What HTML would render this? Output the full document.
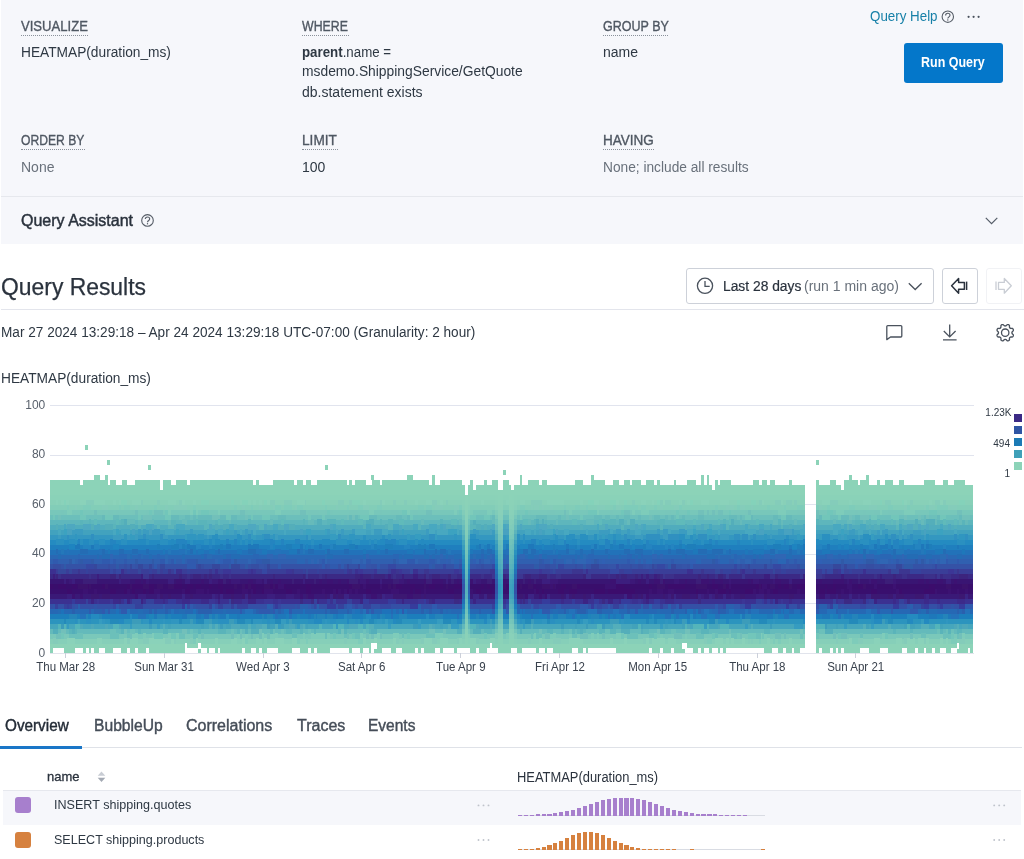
<!DOCTYPE html>
<html>
<head>
<meta charset="utf-8">
<style>
html,body{margin:0;padding:0;}
body{width:1024px;height:859px;overflow:hidden;background:#fff;position:relative;font-family:"Liberation Sans",sans-serif;color:#2e3843;}
.abs{position:absolute;white-space:nowrap;line-height:1;will-change:transform;}
.abs>span{display:inline-block;transform-origin:0 50%;}
#qb{position:absolute;left:1px;top:0;width:1022px;height:196px;background:#f6f7fb;}
#qa{position:absolute;left:1px;top:197px;width:1022px;height:47px;background:#f6f7fb;}
#qline{position:absolute;left:1px;top:196px;width:1022px;height:1px;background:#e6e8ed;}
.lbl{font-size:14px;color:#4f5762;-webkit-text-stroke:0.35px #4f5762;}
.lbl>span{transform:scaleX(0.88);}
.dot{position:absolute;height:0;border-top:1px dotted #8a919b;}
.val{font-size:14px;color:#2e3843;}
.mut{font-size:14px;color:#69717b;}
.ax{font-size:12px;color:#59616c;}
.tab{font-size:16px;color:#454d58;-webkit-text-stroke:0.4px #454d58;}
.row{font-size:13px;color:#2e3843;}
.more{font-size:14px;color:#c3c7ce;letter-spacing:1px;}
svg{position:absolute;left:0;top:0;}
</style>
</head>
<body>
<div id="qb"></div>
<div id="qline"></div>
<div id="qa"></div>
<div class="abs" style="left:904px;top:42.5px;width:99px;height:39.5px;background:#0477ca;border-radius:3px;"></div>
<div class="abs" style="left:3px;top:790.5px;width:1018px;height:33.5px;background:#f6f7fb;"></div>
<div id="all" style="position:absolute;left:0;top:0;width:1024px;height:859px;">

<!-- query builder labels -->
<div class="abs lbl" style="left:21px;top:19px;"><span style="transform:scaleX(0.935)">VISUALIZE</span></div><div class="dot" style="left:21px;top:35px;width:67px;"></div>
<div class="abs val" style="left:21px;top:45px;"><span style="transform:scaleX(0.98)">HEATMAP(duration_ms)</span></div>
<div class="abs lbl" style="left:302px;top:19px;"><span>WHERE</span></div><div class="dot" style="left:302px;top:35px;width:47px;"></div>
<div class="abs val" style="left:302px;top:45px;"><span style="transform:scaleX(0.95)"><b>parent</b>.name =</span></div>
<div class="abs val" style="left:302px;top:64px;"><span style="transform:scaleX(0.988)">msdemo.ShippingService/GetQuote</span></div>
<div class="abs val" style="left:302px;top:84.7px;"><span>db.statement exists</span></div>
<div class="abs lbl" style="left:603px;top:19px;"><span style="transform:scaleX(0.894)">GROUP BY</span></div><div class="dot" style="left:603px;top:35px;width:65px;"></div>
<div class="abs val" style="left:603px;top:45px;"><span>name</span></div>

<div class="abs lbl" style="left:21px;top:133px;"><span style="transform:scaleX(0.866)">ORDER BY</span></div><div class="dot" style="left:21px;top:149px;width:64px;"></div>
<div class="abs mut" style="left:21px;top:160px;"><span>None</span></div>
<div class="abs lbl" style="left:302px;top:133px;"><span style="transform:scaleX(0.975)">LIMIT</span></div><div class="dot" style="left:302px;top:149px;width:36px;"></div>
<div class="abs val" style="left:302px;top:160px;"><span>100</span></div>
<div class="abs lbl" style="left:603px;top:133px;"><span style="transform:scaleX(0.966)">HAVING</span></div><div class="dot" style="left:603px;top:149px;width:51px;"></div>
<div class="abs mut" style="left:603px;top:160px;"><span style="transform:scaleX(0.98)">None; include all results</span></div>

<div class="abs" style="left:870px;top:9px;font-size:14px;color:#1780a8;"><span style="transform:scaleX(0.954)">Query Help</span></div>
<div class="abs" style="left:921px;top:55px;font-size:14px;font-weight:bold;color:#fff;"><span style="transform:scaleX(0.891)">Run Query</span></div>

<div class="abs" style="left:21px;top:212.5px;font-size:16px;color:#2a323d;-webkit-text-stroke:0.45px #2a323d;"><span style="transform:scaleX(1)">Query Assistant</span></div>

<!-- results header -->
<div class="abs" style="left:1px;top:276px;font-size:23px;color:#2a323d;-webkit-text-stroke:0.25px #2a323d;"><span style="transform:scaleX(0.995)">Query Results</span></div>
<div class="abs" style="left:1px;top:309.4px;width:1023px;height:0;border-top:1px solid #e3e5ec;"></div>
<div class="abs" style="left:1px;top:325px;font-size:14px;color:#2e3843;"><span style="transform:scaleX(0.972)">Mar 27 2024 13:29:18 – Apr 24 2024 13:29:18 UTC-07:00 (Granularity: 2 hour)</span></div>
<div class="abs" style="left:1px;top:371px;font-size:14px;color:#2e3843;"><span style="transform:scaleX(0.98)">HEATMAP(duration_ms)</span></div>

<!-- time picker -->
<div class="abs" style="left:686px;top:268px;width:246px;height:34px;border:1px solid #cdd1d9;border-radius:3px;"></div>
<div class="abs" style="left:723px;top:279px;font-size:14px;color:#2a323d;-webkit-text-stroke:0.2px #2a323d;"><span style="transform:scaleX(0.987)">Last 28 days</span></div>
<div class="abs" style="left:804px;top:279px;font-size:14px;color:#69717b;"><span>(run 1 min ago)</span></div>
<div class="abs" style="left:942px;top:268px;width:34px;height:34px;border:1px solid #cdd1d9;border-radius:3px;"></div>
<div class="abs" style="left:986px;top:268px;width:34px;height:34px;border:1px solid #f1f2f5;border-radius:3px;"></div>

<!-- axis labels -->
<div class="abs ax" style="left:0;width:45.3px;text-align:right;top:398.6px;">100</div>
<div class="abs ax" style="left:0;width:45.3px;text-align:right;top:448.2px;">80</div>
<div class="abs ax" style="left:0;width:45.3px;text-align:right;top:497.8px;">60</div>
<div class="abs ax" style="left:0;width:45.3px;text-align:right;top:547.4px;">40</div>
<div class="abs ax" style="left:0;width:45.3px;text-align:right;top:597px;">20</div>
<div class="abs ax" style="left:0;width:45.3px;text-align:right;top:646.6px;">0</div>
<div class="abs ax" style="left:15.5px;width:100px;text-align:center;top:661px;color:#39414c;"><span style="transform:scaleX(0.96);transform-origin:50% 50%">Thu Mar 28</span></div>
<div class="abs ax" style="left:114.3px;width:100px;text-align:center;top:661px;color:#39414c;"><span style="transform:scaleX(0.96);transform-origin:50% 50%">Sun Mar 31</span></div>
<div class="abs ax" style="left:213.1px;width:100px;text-align:center;top:661px;color:#39414c;"><span style="transform:scaleX(0.96);transform-origin:50% 50%">Wed Apr 3</span></div>
<div class="abs ax" style="left:311.9px;width:100px;text-align:center;top:661px;color:#39414c;"><span style="transform:scaleX(0.96);transform-origin:50% 50%">Sat Apr 6</span></div>
<div class="abs ax" style="left:410.7px;width:100px;text-align:center;top:661px;color:#39414c;"><span style="transform:scaleX(0.96);transform-origin:50% 50%">Tue Apr 9</span></div>
<div class="abs ax" style="left:509.5px;width:100px;text-align:center;top:661px;color:#39414c;"><span style="transform:scaleX(0.96);transform-origin:50% 50%">Fri Apr 12</span></div>
<div class="abs ax" style="left:608.3px;width:100px;text-align:center;top:661px;color:#39414c;"><span style="transform:scaleX(0.96);transform-origin:50% 50%">Mon Apr 15</span></div>
<div class="abs ax" style="left:707.1px;width:100px;text-align:center;top:661px;color:#39414c;"><span style="transform:scaleX(0.96);transform-origin:50% 50%">Thu Apr 18</span></div>
<div class="abs ax" style="left:805.9px;width:100px;text-align:center;top:661px;color:#39414c;"><span style="transform:scaleX(0.96);transform-origin:50% 50%">Sun Apr 21</span></div>

<div class="abs" style="left:960px;width:51.5px;text-align:right;top:407.5px;font-size:10px;color:#2e3843;">1.23K</div>
<div class="abs" style="left:960px;width:50px;text-align:right;top:438.5px;font-size:10px;color:#2e3843;">494</div>
<div class="abs" style="left:960px;width:50px;text-align:right;top:469px;font-size:10px;color:#2e3843;">1</div>

<svg width="1024" height="859" viewBox="0 0 1024 859" shape-rendering="crispEdges">
<rect x="50" y="405" width="924" height="1" fill="#e1e4ee"/>
<rect x="50" y="455" width="924" height="1" fill="#e1e4ee"/>
<path fill="#8cd3b8" d="M50 648.3h923v5.3h-923zM50 643.3h923v5.3h-923zM50 489.7h923v5.3h-923zM50 484.7h923v5.3h-923zM50 479.8h923v5.3h-923z"/>
<path fill="#86cfb9" d="M50 638.4h923v5.3h-923z"/>
<path fill="#7ac8ba" d="M50 633.4h923v5.3h-923z"/>
<path fill="#64babb" d="M50 628.5h923v5.3h-923z"/>
<path fill="#46a6bc" d="M50 623.5h923v5.3h-923z"/>
<path fill="#2c94be" d="M50 618.6h923v5.3h-923z"/>
<path fill="#1c7ebc" d="M50 613.6h923v5.3h-923z"/>
<path fill="#2668b4" d="M50 608.6h923v5.3h-923z"/>
<path fill="#3450a6" d="M50 603.7h923v5.3h-923z"/>
<path fill="#3b3191" d="M50 598.7h923v5.3h-923z"/>
<path fill="#3a1977" d="M50 593.8h923v5.3h-923z"/>
<path fill="#390f6e" d="M50 588.8h923v5.3h-923z"/>
<path fill="#390e6c" d="M50 583.9h923v5.3h-923z"/>
<path fill="#391573" d="M50 578.9h923v5.3h-923z"/>
<path fill="#3b2985" d="M50 574h923v5.3h-923z"/>
<path fill="#3a3e98" d="M50 569h923v5.3h-923z"/>
<path fill="#3552a6" d="M50 564h923v5.3h-923z"/>
<path fill="#3060b0" d="M50 559.1h923v5.3h-923z"/>
<path fill="#2a68b4" d="M50 554.1h923v5.3h-923z"/>
<path fill="#2272b9" d="M50 549.2h923v5.3h-923z"/>
<path fill="#1f7fbe" d="M50 544.2h923v5.3h-923z"/>
<path fill="#248bc1" d="M50 539.3h923v5.3h-923z"/>
<path fill="#3497c0" d="M50 534.3h923v5.3h-923z"/>
<path fill="#42a2be" d="M50 529.4h923v5.3h-923z"/>
<path fill="#50acbd" d="M50 524.4h923v5.3h-923z"/>
<path fill="#5eb6bc" d="M50 519.4h923v5.3h-923z"/>
<path fill="#6cbfbb" d="M50 514.5h923v5.3h-923z"/>
<path fill="#78c7ba" d="M50 509.5h923v5.3h-923z"/>
<path fill="#82cdb8" d="M50 504.6h923v5.3h-923z"/>
<path fill="#88d0b8" d="M50 499.6h923v5.3h-923z"/>
<path fill="#8ad2b8" d="M50 494.7h923v5.3h-923z"/>
<path fill="#3648a2" d="M835.6 569h8.2v5.2h-8.2zM934.5 564h2.7v5.2h-2.7zM723 603.7h2.7v5.2h-2.7zM236.8 564h2.7v5.2h-2.7zM615.9 564h5.5v5.2h-5.5zM272.5 603.7h8.2v5.2h-8.2zM442.8 564h2.7v5.2h-2.7zM379.6 603.7h2.7v5.2h-2.7zM560.9 564h2.7v5.2h-2.7zM860.4 603.7h5.5v5.2h-5.5zM363.2 564h2.7v5.2h-2.7zM827.4 569h2.7v5.2h-2.7zM308.2 603.7h2.7v5.2h-2.7zM610.4 564h2.7v5.2h-2.7zM387.9 564h8.2v5.2h-8.2zM382.4 603.7h2.7v5.2h-2.7zM731.3 603.7h2.7v5.2h-2.7zM179.1 569h2.7v5.2h-2.7zM118.7 569h2.7v5.2h-2.7zM805.4 564h2.7v5.2h-2.7zM901.6 564h5.5v5.2h-5.5zM659.8 564h2.7v5.2h-2.7zM934.5 564h2.7v5.2h-2.7zM354.9 603.7h2.7v5.2h-2.7zM267 564h2.7v5.2h-2.7zM242.3 603.7h2.7v5.2h-2.7zM113.2 603.7h5.5v5.2h-5.5zM734 564h2.7v5.2h-2.7zM385.1 603.7h5.5v5.2h-5.5zM52.7 564h5.5v5.2h-5.5zM492.3 564h2.7v5.2h-2.7zM560.9 564h2.7v5.2h-2.7zM805.4 569h5.5v5.2h-5.5zM261.5 569h5.5v5.2h-5.5zM830.2 569h2.7v5.2h-2.7zM187.4 603.7h2.7v5.2h-2.7zM821.9 569h2.7v5.2h-2.7zM533.5 603.7h5.5v5.2h-5.5zM85.7 564h8.2v5.2h-8.2zM555.5 564h5.5v5.2h-5.5zM750.5 603.7h5.5v5.2h-5.5zM379.6 603.7h2.7v5.2h-2.7zM596.7 603.7h5.5v5.2h-5.5zM195.6 564h2.7v5.2h-2.7zM313.7 603.7h2.7v5.2h-2.7zM217.6 564h2.7v5.2h-2.7zM110.4 569h8.2v5.2h-8.2zM657.1 564h8.2v5.2h-8.2zM173.6 569h2.7v5.2h-2.7zM830.2 603.7h2.7v5.2h-2.7zM610.4 569h8.2v5.2h-8.2zM772.5 564h8.2v5.2h-8.2zM937.3 603.7h2.7v5.2h-2.7z"/>
<path fill="#7eccba" d="M874.1 504.6h2.7v5.2h-2.7zM629.6 509.5h5.5v5.2h-5.5zM951 504.6h2.7v5.2h-2.7zM324.7 633.4h5.5v5.2h-5.5zM563.7 509.5h2.7v5.2h-2.7zM360.4 504.6h5.5v5.2h-5.5zM228.6 509.5h2.7v5.2h-2.7zM486.8 509.5h5.5v5.2h-5.5zM591.2 509.5h8.2v5.2h-8.2zM192.8 509.5h2.7v5.2h-2.7zM585.7 504.6h2.7v5.2h-2.7zM489.5 509.5h2.7v5.2h-2.7zM778 638.4h2.7v5.2h-2.7zM83 504.6h8.2v5.2h-8.2zM827.4 504.6h2.7v5.2h-2.7zM838.4 509.5h5.5v5.2h-5.5zM629.6 504.6h8.2v5.2h-8.2zM261.5 633.4h2.7v5.2h-2.7zM85.7 504.6h2.7v5.2h-2.7zM190.1 509.5h8.2v5.2h-8.2zM588.4 509.5h2.7v5.2h-2.7zM126.9 504.6h2.7v5.2h-2.7zM357.7 504.6h2.7v5.2h-2.7zM909.8 509.5h5.5v5.2h-5.5zM563.7 504.6h2.7v5.2h-2.7zM354.9 633.4h8.2v5.2h-8.2zM574.7 504.6h5.5v5.2h-5.5zM420.8 504.6h2.7v5.2h-2.7zM234.1 504.6h2.7v5.2h-2.7zM258.8 633.4h2.7v5.2h-2.7zM396.1 633.4h2.7v5.2h-2.7zM736.8 504.6h8.2v5.2h-8.2zM291.7 633.4h5.5v5.2h-5.5zM357.7 638.4h5.5v5.2h-5.5zM937.3 504.6h8.2v5.2h-8.2zM129.7 633.4h8.2v5.2h-8.2zM352.2 633.4h5.5v5.2h-5.5zM907.1 504.6h2.7v5.2h-2.7zM456.6 504.6h5.5v5.2h-5.5zM245 633.4h2.7v5.2h-2.7zM132.4 638.4h5.5v5.2h-5.5zM659.8 633.4h2.7v5.2h-2.7zM569.2 633.4h2.7v5.2h-2.7zM816.4 504.6h2.7v5.2h-2.7zM640.6 509.5h8.2v5.2h-8.2zM519.7 504.6h5.5v5.2h-5.5zM668.1 509.5h2.7v5.2h-2.7zM706.5 638.4h5.5v5.2h-5.5zM272.5 504.6h8.2v5.2h-8.2zM495 638.4h2.7v5.2h-2.7zM176.4 633.4h2.7v5.2h-2.7zM810.9 633.4h2.7v5.2h-2.7zM758.7 638.4h2.7v5.2h-2.7zM418.1 504.6h5.5v5.2h-5.5zM591.2 633.4h2.7v5.2h-2.7zM283.5 504.6h5.5v5.2h-5.5zM797.2 504.6h5.5v5.2h-5.5zM890.6 504.6h2.7v5.2h-2.7zM596.7 633.4h2.7v5.2h-2.7zM533.5 633.4h8.2v5.2h-8.2zM613.1 504.6h5.5v5.2h-5.5zM431.8 638.4h2.7v5.2h-2.7zM66.5 504.6h2.7v5.2h-2.7zM676.3 633.4h2.7v5.2h-2.7zM66.5 509.5h5.5v5.2h-5.5zM143.4 633.4h2.7v5.2h-2.7zM624.1 504.6h2.7v5.2h-2.7zM297.2 504.6h2.7v5.2h-2.7zM154.4 504.6h2.7v5.2h-2.7zM154.4 504.6h2.7v5.2h-2.7zM453.8 509.5h2.7v5.2h-2.7zM772.5 638.4h2.7v5.2h-2.7zM714.8 504.6h2.7v5.2h-2.7zM393.4 633.4h2.7v5.2h-2.7zM426.3 504.6h2.7v5.2h-2.7zM357.7 638.4h2.7v5.2h-2.7zM923.6 504.6h5.5v5.2h-5.5zM300 504.6h2.7v5.2h-2.7zM640.6 504.6h5.5v5.2h-5.5zM107.7 509.5h5.5v5.2h-5.5zM937.3 504.6h2.7v5.2h-2.7zM879.6 509.5h2.7v5.2h-2.7zM810.9 504.6h5.5v5.2h-5.5zM728.5 633.4h2.7v5.2h-2.7zM758.7 633.4h8.2v5.2h-8.2zM289 504.6h2.7v5.2h-2.7zM615.9 633.4h2.7v5.2h-2.7zM574.7 504.6h2.7v5.2h-2.7zM269.8 633.4h8.2v5.2h-8.2zM245 638.4h2.7v5.2h-2.7zM192.8 504.6h2.7v5.2h-2.7zM654.3 633.4h2.7v5.2h-2.7zM324.7 509.5h8.2v5.2h-8.2zM931.8 509.5h5.5v5.2h-5.5zM278 504.6h2.7v5.2h-2.7zM838.4 633.4h2.7v5.2h-2.7zM151.6 633.4h8.2v5.2h-8.2zM346.7 504.6h2.7v5.2h-2.7zM767 504.6h2.7v5.2h-2.7zM835.6 509.5h2.7v5.2h-2.7zM951 638.4h5.5v5.2h-5.5zM126.9 633.4h2.7v5.2h-2.7zM297.2 638.4h2.7v5.2h-2.7zM629.6 633.4h5.5v5.2h-5.5zM852.1 504.6h2.7v5.2h-2.7zM852.1 638.4h8.2v5.2h-8.2zM566.4 509.5h5.5v5.2h-5.5zM462.1 504.6h5.5v5.2h-5.5zM813.7 504.6h2.7v5.2h-2.7zM898.8 509.5h2.7v5.2h-2.7zM580.2 633.4h2.7v5.2h-2.7zM168.1 509.5h2.7v5.2h-2.7zM261.5 633.4h2.7v5.2h-2.7zM588.4 509.5h5.5v5.2h-5.5zM577.4 504.6h2.7v5.2h-2.7zM508.8 633.4h5.5v5.2h-5.5zM429.1 633.4h8.2v5.2h-8.2zM376.9 504.6h5.5v5.2h-5.5zM173.6 633.4h5.5v5.2h-5.5zM887.8 504.6h2.7v5.2h-2.7zM654.3 504.6h2.7v5.2h-2.7zM429.1 504.6h2.7v5.2h-2.7zM618.6 633.4h2.7v5.2h-2.7zM368.7 509.5h5.5v5.2h-5.5zM550 504.6h2.7v5.2h-2.7zM684.6 633.4h2.7v5.2h-2.7zM236.8 633.4h2.7v5.2h-2.7zM506 633.4h2.7v5.2h-2.7zM550 633.4h5.5v5.2h-5.5zM354.9 633.4h5.5v5.2h-5.5zM324.7 504.6h2.7v5.2h-2.7zM714.8 509.5h2.7v5.2h-2.7zM456.6 638.4h2.7v5.2h-2.7zM931.8 509.5h2.7v5.2h-2.7zM192.8 638.4h2.7v5.2h-2.7zM596.7 633.4h2.7v5.2h-2.7zM640.6 509.5h2.7v5.2h-2.7zM827.4 509.5h2.7v5.2h-2.7zM618.6 633.4h2.7v5.2h-2.7zM813.7 633.4h2.7v5.2h-2.7zM890.6 504.6h2.7v5.2h-2.7zM456.6 504.6h2.7v5.2h-2.7zM574.7 633.4h2.7v5.2h-2.7zM217.6 509.5h2.7v5.2h-2.7zM250.5 504.6h2.7v5.2h-2.7zM242.3 504.6h2.7v5.2h-2.7zM311 633.4h8.2v5.2h-8.2zM495 633.4h2.7v5.2h-2.7zM962 638.4h2.7v5.2h-2.7zM272.5 504.6h5.5v5.2h-5.5zM882.3 633.4h2.7v5.2h-2.7zM118.7 504.6h2.7v5.2h-2.7zM154.4 509.5h5.5v5.2h-5.5zM849.4 504.6h2.7v5.2h-2.7zM376.9 633.4h2.7v5.2h-2.7zM456.6 504.6h2.7v5.2h-2.7zM159.9 633.4h2.7v5.2h-2.7zM305.5 638.4h2.7v5.2h-2.7zM673.6 638.4h2.7v5.2h-2.7zM407.1 509.5h2.7v5.2h-2.7zM783.5 504.6h2.7v5.2h-2.7zM758.7 633.4h2.7v5.2h-2.7zM124.2 504.6h5.5v5.2h-5.5zM495 504.6h5.5v5.2h-5.5zM302.7 633.4h2.7v5.2h-2.7zM810.9 509.5h8.2v5.2h-8.2zM887.8 509.5h8.2v5.2h-8.2zM319.2 633.4h5.5v5.2h-5.5zM904.3 509.5h5.5v5.2h-5.5zM778 509.5h8.2v5.2h-8.2zM514.2 504.6h2.7v5.2h-2.7zM596.7 504.6h2.7v5.2h-2.7zM962 633.4h2.7v5.2h-2.7zM437.3 633.4h5.5v5.2h-5.5zM258.8 633.4h2.7v5.2h-2.7zM695.6 633.4h8.2v5.2h-8.2zM679.1 504.6h2.7v5.2h-2.7zM404.4 509.5h2.7v5.2h-2.7zM942.8 504.6h5.5v5.2h-5.5zM464.8 509.5h8.2v5.2h-8.2zM626.9 504.6h5.5v5.2h-5.5zM168.1 633.4h8.2v5.2h-8.2zM275.3 509.5h5.5v5.2h-5.5z"/>
<path fill="#3c2484" d="M247.8 593.8h2.7v5.2h-2.7zM566.4 593.8h2.7v5.2h-2.7zM96.7 593.8h2.7v5.2h-2.7zM181.9 593.8h2.7v5.2h-2.7zM709.3 593.8h2.7v5.2h-2.7zM401.6 598.7h2.7v5.2h-2.7zM390.6 593.8h2.7v5.2h-2.7zM607.6 598.7h5.5v5.2h-5.5zM547.2 593.8h2.7v5.2h-2.7zM871.4 598.7h5.5v5.2h-5.5zM415.4 593.8h2.7v5.2h-2.7zM473 593.8h5.5v5.2h-5.5zM393.4 593.8h2.7v5.2h-2.7zM723 593.8h2.7v5.2h-2.7zM816.4 598.7h2.7v5.2h-2.7zM698.3 593.8h2.7v5.2h-2.7zM140.7 598.7h2.7v5.2h-2.7zM220.3 593.8h2.7v5.2h-2.7zM865.9 593.8h8.2v5.2h-8.2zM382.4 593.8h2.7v5.2h-2.7zM407.1 593.8h2.7v5.2h-2.7zM964.8 593.8h2.7v5.2h-2.7zM646.1 598.7h2.7v5.2h-2.7zM541.7 598.7h2.7v5.2h-2.7zM673.6 593.8h2.7v5.2h-2.7zM387.9 598.7h5.5v5.2h-5.5zM431.8 598.7h2.7v5.2h-2.7zM91.2 598.7h2.7v5.2h-2.7zM217.6 598.7h2.7v5.2h-2.7zM396.1 593.8h5.5v5.2h-5.5zM245 593.8h5.5v5.2h-5.5zM775.2 598.7h2.7v5.2h-2.7zM267 593.8h2.7v5.2h-2.7zM838.4 598.7h2.7v5.2h-2.7zM473 598.7h2.7v5.2h-2.7zM212.1 593.8h2.7v5.2h-2.7zM591.2 593.8h2.7v5.2h-2.7zM459.3 598.7h2.7v5.2h-2.7zM453.8 598.7h5.5v5.2h-5.5zM363.2 593.8h2.7v5.2h-2.7zM624.1 593.8h5.5v5.2h-5.5zM247.8 598.7h8.2v5.2h-8.2zM582.9 598.7h5.5v5.2h-5.5zM484 593.8h5.5v5.2h-5.5zM214.8 593.8h2.7v5.2h-2.7zM343.9 593.8h5.5v5.2h-5.5zM813.7 593.8h2.7v5.2h-2.7zM849.4 593.8h2.7v5.2h-2.7zM528 593.8h5.5v5.2h-5.5zM668.1 593.8h2.7v5.2h-2.7zM923.6 593.8h5.5v5.2h-5.5zM245 593.8h2.7v5.2h-2.7zM126.9 598.7h2.7v5.2h-2.7zM110.4 598.7h2.7v5.2h-2.7zM330.2 593.8h2.7v5.2h-2.7zM360.4 598.7h2.7v5.2h-2.7z"/>
<path fill="#3c1272" d="M684.6 578.9h2.7v5.2h-2.7zM143.4 578.9h2.7v5.2h-2.7zM637.9 578.9h2.7v5.2h-2.7zM464.8 588.8h5.5v5.2h-5.5zM343.9 588.8h2.7v5.2h-2.7zM964.8 588.8h2.7v5.2h-2.7zM322 588.8h2.7v5.2h-2.7zM338.4 578.9h2.7v5.2h-2.7zM849.4 578.9h2.7v5.2h-2.7zM775.2 578.9h2.7v5.2h-2.7zM871.4 578.9h5.5v5.2h-5.5zM201.1 588.8h2.7v5.2h-2.7zM648.9 588.8h2.7v5.2h-2.7zM214.8 578.9h5.5v5.2h-5.5zM124.2 588.8h2.7v5.2h-2.7zM478.5 588.8h2.7v5.2h-2.7zM247.8 578.9h5.5v5.2h-5.5zM646.1 593.8h2.7v5.2h-2.7zM626.9 593.8h5.5v5.2h-5.5zM143.4 593.8h2.7v5.2h-2.7zM269.8 578.9h2.7v5.2h-2.7zM918.1 578.9h5.5v5.2h-5.5zM352.2 578.9h2.7v5.2h-2.7zM434.6 578.9h5.5v5.2h-5.5zM761.5 583.9h2.7v5.2h-2.7zM805.4 588.8h2.7v5.2h-2.7zM327.4 578.9h5.5v5.2h-5.5zM159.9 593.8h2.7v5.2h-2.7zM728.5 583.9h2.7v5.2h-2.7zM278 583.9h5.5v5.2h-5.5zM448.3 588.8h2.7v5.2h-2.7zM747.7 588.8h8.2v5.2h-8.2zM201.1 588.8h2.7v5.2h-2.7zM80.2 593.8h2.7v5.2h-2.7zM319.2 578.9h2.7v5.2h-2.7zM668.1 588.8h5.5v5.2h-5.5zM297.2 588.8h2.7v5.2h-2.7zM220.3 578.9h2.7v5.2h-2.7zM528 578.9h2.7v5.2h-2.7zM747.7 578.9h2.7v5.2h-2.7zM832.9 578.9h5.5v5.2h-5.5zM250.5 588.8h5.5v5.2h-5.5zM849.4 588.8h2.7v5.2h-2.7zM934.5 588.8h2.7v5.2h-2.7zM462.1 593.8h2.7v5.2h-2.7zM429.1 578.9h5.5v5.2h-5.5zM764.2 583.9h2.7v5.2h-2.7zM393.4 578.9h2.7v5.2h-2.7zM767 588.8h2.7v5.2h-2.7zM464.8 578.9h2.7v5.2h-2.7zM379.6 578.9h2.7v5.2h-2.7zM893.3 583.9h2.7v5.2h-2.7zM613.1 578.9h5.5v5.2h-5.5zM758.7 588.8h5.5v5.2h-5.5zM706.5 588.8h2.7v5.2h-2.7zM846.6 583.9h5.5v5.2h-5.5zM503.3 578.9h2.7v5.2h-2.7zM181.9 588.8h2.7v5.2h-2.7zM242.3 588.8h5.5v5.2h-5.5zM456.6 578.9h2.7v5.2h-2.7zM712 583.9h2.7v5.2h-2.7zM228.6 578.9h2.7v5.2h-2.7zM500.5 583.9h2.7v5.2h-2.7zM701 578.9h5.5v5.2h-5.5zM176.4 578.9h5.5v5.2h-5.5zM338.4 578.9h2.7v5.2h-2.7zM948.3 588.8h2.7v5.2h-2.7zM135.2 593.8h5.5v5.2h-5.5zM920.8 578.9h2.7v5.2h-2.7zM797.2 588.8h2.7v5.2h-2.7zM300 593.8h2.7v5.2h-2.7zM819.2 593.8h8.2v5.2h-8.2zM582.9 593.8h2.7v5.2h-2.7zM778 578.9h2.7v5.2h-2.7zM423.6 578.9h2.7v5.2h-2.7zM338.4 588.8h2.7v5.2h-2.7zM470.3 578.9h2.7v5.2h-2.7zM819.2 578.9h2.7v5.2h-2.7zM953.8 578.9h2.7v5.2h-2.7zM604.9 583.9h8.2v5.2h-8.2zM841.1 588.8h2.7v5.2h-2.7zM654.3 578.9h8.2v5.2h-8.2zM85.7 588.8h2.7v5.2h-2.7zM201.1 578.9h2.7v5.2h-2.7zM261.5 588.8h2.7v5.2h-2.7zM706.5 578.9h2.7v5.2h-2.7zM407.1 578.9h2.7v5.2h-2.7zM346.7 578.9h2.7v5.2h-2.7zM338.4 588.8h2.7v5.2h-2.7zM799.9 578.9h5.5v5.2h-5.5zM154.4 588.8h5.5v5.2h-5.5zM66.5 593.8h8.2v5.2h-8.2zM371.4 593.8h5.5v5.2h-5.5zM168.1 578.9h2.7v5.2h-2.7zM467.5 578.9h2.7v5.2h-2.7zM613.1 583.9h2.7v5.2h-2.7zM662.6 578.9h2.7v5.2h-2.7zM212.1 578.9h2.7v5.2h-2.7zM640.6 593.8h5.5v5.2h-5.5zM278 578.9h2.7v5.2h-2.7zM555.5 578.9h2.7v5.2h-2.7zM379.6 583.9h2.7v5.2h-2.7zM94 588.8h2.7v5.2h-2.7zM401.6 578.9h2.7v5.2h-2.7zM83 588.8h2.7v5.2h-2.7zM681.8 593.8h8.2v5.2h-8.2zM338.4 578.9h2.7v5.2h-2.7zM714.8 588.8h2.7v5.2h-2.7zM234.1 578.9h2.7v5.2h-2.7zM407.1 593.8h5.5v5.2h-5.5zM525.2 593.8h2.7v5.2h-2.7zM750.5 578.9h2.7v5.2h-2.7zM206.6 588.8h2.7v5.2h-2.7zM269.8 588.8h2.7v5.2h-2.7zM135.2 578.9h5.5v5.2h-5.5zM539 593.8h2.7v5.2h-2.7zM720.3 578.9h2.7v5.2h-2.7zM126.9 588.8h2.7v5.2h-2.7zM673.6 578.9h2.7v5.2h-2.7zM635.1 593.8h2.7v5.2h-2.7zM390.6 588.8h8.2v5.2h-8.2zM349.4 588.8h2.7v5.2h-2.7zM673.6 578.9h2.7v5.2h-2.7zM261.5 588.8h5.5v5.2h-5.5zM363.2 578.9h5.5v5.2h-5.5zM332.9 588.8h2.7v5.2h-2.7zM544.5 593.8h2.7v5.2h-2.7zM610.4 578.9h8.2v5.2h-8.2zM363.2 583.9h2.7v5.2h-2.7zM896.1 588.8h5.5v5.2h-5.5zM50 583.9h2.7v5.2h-2.7zM550 583.9h5.5v5.2h-5.5zM267 588.8h2.7v5.2h-2.7zM937.3 578.9h5.5v5.2h-5.5zM874.1 583.9h2.7v5.2h-2.7zM489.5 588.8h2.7v5.2h-2.7zM467.5 588.8h5.5v5.2h-5.5zM195.6 588.8h5.5v5.2h-5.5zM223.1 578.9h2.7v5.2h-2.7zM467.5 588.8h5.5v5.2h-5.5zM695.6 588.8h2.7v5.2h-2.7zM750.5 588.8h2.7v5.2h-2.7zM712 578.9h2.7v5.2h-2.7zM354.9 588.8h2.7v5.2h-2.7zM440.1 578.9h2.7v5.2h-2.7zM423.6 588.8h2.7v5.2h-2.7zM168.1 578.9h5.5v5.2h-5.5zM767 588.8h2.7v5.2h-2.7zM926.3 578.9h2.7v5.2h-2.7zM657.1 588.8h5.5v5.2h-5.5zM560.9 583.9h2.7v5.2h-2.7zM94 578.9h2.7v5.2h-2.7zM308.2 593.8h5.5v5.2h-5.5zM835.6 578.9h8.2v5.2h-8.2zM448.3 588.8h2.7v5.2h-2.7zM346.7 578.9h5.5v5.2h-5.5zM756 578.9h2.7v5.2h-2.7zM956.5 588.8h2.7v5.2h-2.7zM190.1 583.9h2.7v5.2h-2.7zM533.5 588.8h2.7v5.2h-2.7z"/>
<path fill="#6cc0ba" d="M132.4 628.5h2.7v5.2h-2.7zM74.7 633.4h8.2v5.2h-8.2zM486.8 628.5h5.5v5.2h-5.5zM841.1 514.5h2.7v5.2h-2.7zM478.5 514.5h8.2v5.2h-8.2zM280.8 628.5h2.7v5.2h-2.7zM821.9 514.5h2.7v5.2h-2.7zM536.2 633.4h5.5v5.2h-5.5zM632.4 633.4h5.5v5.2h-5.5zM560.9 514.5h2.7v5.2h-2.7zM632.4 633.4h2.7v5.2h-2.7zM363.2 628.5h2.7v5.2h-2.7zM599.4 628.5h8.2v5.2h-8.2zM695.6 633.4h8.2v5.2h-8.2zM354.9 514.5h8.2v5.2h-8.2zM841.1 633.4h2.7v5.2h-2.7zM714.8 633.4h2.7v5.2h-2.7zM429.1 628.5h2.7v5.2h-2.7zM604.9 628.5h5.5v5.2h-5.5zM289 628.5h2.7v5.2h-2.7zM354.9 633.4h5.5v5.2h-5.5zM190.1 628.5h2.7v5.2h-2.7zM824.7 514.5h2.7v5.2h-2.7zM945.5 628.5h8.2v5.2h-8.2zM876.9 514.5h8.2v5.2h-8.2zM799.9 633.4h2.7v5.2h-2.7zM195.6 514.5h5.5v5.2h-5.5zM530.7 633.4h2.7v5.2h-2.7zM94 514.5h2.7v5.2h-2.7zM528 514.5h2.7v5.2h-2.7zM371.4 628.5h2.7v5.2h-2.7zM426.3 633.4h8.2v5.2h-8.2zM783.5 633.4h2.7v5.2h-2.7zM684.6 628.5h2.7v5.2h-2.7zM343.9 633.4h5.5v5.2h-5.5zM110.4 628.5h5.5v5.2h-5.5zM813.7 633.4h2.7v5.2h-2.7zM714.8 514.5h2.7v5.2h-2.7zM574.7 633.4h2.7v5.2h-2.7zM291.7 633.4h5.5v5.2h-5.5zM753.2 633.4h8.2v5.2h-8.2zM860.4 633.4h2.7v5.2h-2.7zM506 514.5h2.7v5.2h-2.7zM734 633.4h2.7v5.2h-2.7zM893.3 514.5h2.7v5.2h-2.7zM945.5 514.5h5.5v5.2h-5.5zM942.8 633.4h8.2v5.2h-8.2zM569.2 628.5h2.7v5.2h-2.7zM173.6 633.4h2.7v5.2h-2.7zM445.6 514.5h2.7v5.2h-2.7zM915.3 514.5h5.5v5.2h-5.5zM547.2 628.5h2.7v5.2h-2.7zM670.8 628.5h2.7v5.2h-2.7zM731.3 633.4h5.5v5.2h-5.5zM50 514.5h2.7v5.2h-2.7zM462.1 628.5h2.7v5.2h-2.7zM272.5 628.5h2.7v5.2h-2.7zM126.9 633.4h2.7v5.2h-2.7zM308.2 514.5h2.7v5.2h-2.7zM571.9 633.4h2.7v5.2h-2.7zM648.9 633.4h5.5v5.2h-5.5zM308.2 628.5h2.7v5.2h-2.7zM604.9 514.5h5.5v5.2h-5.5zM231.3 628.5h2.7v5.2h-2.7zM179.1 633.4h5.5v5.2h-5.5zM143.4 514.5h2.7v5.2h-2.7zM626.9 633.4h5.5v5.2h-5.5zM931.8 514.5h5.5v5.2h-5.5zM324.7 633.4h2.7v5.2h-2.7zM418.1 514.5h2.7v5.2h-2.7zM734 633.4h2.7v5.2h-2.7zM69.2 633.4h8.2v5.2h-8.2zM819.2 628.5h8.2v5.2h-8.2zM519.7 514.5h2.7v5.2h-2.7zM374.1 514.5h5.5v5.2h-5.5zM278 514.5h8.2v5.2h-8.2zM937.3 628.5h2.7v5.2h-2.7zM673.6 628.5h2.7v5.2h-2.7zM217.6 628.5h5.5v5.2h-5.5zM192.8 633.4h5.5v5.2h-5.5zM841.1 514.5h8.2v5.2h-8.2zM808.2 628.5h2.7v5.2h-2.7zM662.6 628.5h2.7v5.2h-2.7zM401.6 633.4h2.7v5.2h-2.7zM810.9 628.5h2.7v5.2h-2.7zM110.4 633.4h8.2v5.2h-8.2zM956.5 633.4h5.5v5.2h-5.5zM209.3 514.5h2.7v5.2h-2.7zM236.8 628.5h5.5v5.2h-5.5zM129.7 628.5h2.7v5.2h-2.7zM74.7 628.5h2.7v5.2h-2.7zM920.8 633.4h5.5v5.2h-5.5z"/>
<path fill="#2484c0" d="M91.2 544.2h8.2v5.2h-8.2zM264.3 539.3h2.7v5.2h-2.7zM629.6 539.3h2.7v5.2h-2.7zM926.3 539.3h2.7v5.2h-2.7zM209.3 544.2h2.7v5.2h-2.7zM791.7 544.2h2.7v5.2h-2.7zM176.4 539.3h8.2v5.2h-8.2zM915.3 544.2h5.5v5.2h-5.5zM646.1 539.3h2.7v5.2h-2.7zM489.5 544.2h2.7v5.2h-2.7zM385.1 539.3h2.7v5.2h-2.7zM338.4 539.3h5.5v5.2h-5.5zM267 539.3h8.2v5.2h-8.2zM613.1 539.3h2.7v5.2h-2.7zM835.6 539.3h2.7v5.2h-2.7zM918.1 539.3h2.7v5.2h-2.7zM173.6 544.2h8.2v5.2h-8.2zM577.4 544.2h2.7v5.2h-2.7zM596.7 544.2h2.7v5.2h-2.7zM371.4 544.2h2.7v5.2h-2.7zM184.6 539.3h2.7v5.2h-2.7zM269.8 544.2h2.7v5.2h-2.7zM407.1 544.2h2.7v5.2h-2.7zM503.3 544.2h2.7v5.2h-2.7zM247.8 544.2h2.7v5.2h-2.7zM684.6 539.3h2.7v5.2h-2.7zM714.8 539.3h2.7v5.2h-2.7zM297.2 539.3h2.7v5.2h-2.7zM404.4 544.2h2.7v5.2h-2.7zM783.5 539.3h2.7v5.2h-2.7zM574.7 544.2h5.5v5.2h-5.5zM657.1 539.3h2.7v5.2h-2.7zM530.7 539.3h8.2v5.2h-8.2zM302.7 544.2h2.7v5.2h-2.7zM604.9 544.2h8.2v5.2h-8.2zM670.8 544.2h2.7v5.2h-2.7zM706.5 544.2h2.7v5.2h-2.7zM602.2 539.3h5.5v5.2h-5.5zM225.8 539.3h2.7v5.2h-2.7zM626.9 539.3h2.7v5.2h-2.7zM643.4 544.2h8.2v5.2h-8.2zM690.1 544.2h2.7v5.2h-2.7zM802.7 539.3h5.5v5.2h-5.5zM387.9 539.3h8.2v5.2h-8.2zM679.1 539.3h5.5v5.2h-5.5zM709.3 539.3h2.7v5.2h-2.7zM217.6 544.2h2.7v5.2h-2.7zM234.1 539.3h2.7v5.2h-2.7zM110.4 539.3h5.5v5.2h-5.5zM192.8 544.2h8.2v5.2h-8.2zM558.2 539.3h8.2v5.2h-8.2zM772.5 539.3h2.7v5.2h-2.7zM849.4 539.3h5.5v5.2h-5.5zM94 544.2h5.5v5.2h-5.5zM876.9 539.3h2.7v5.2h-2.7zM385.1 539.3h5.5v5.2h-5.5zM893.3 539.3h5.5v5.2h-5.5zM280.8 539.3h2.7v5.2h-2.7zM868.6 544.2h5.5v5.2h-5.5zM887.8 539.3h2.7v5.2h-2.7zM206.6 539.3h2.7v5.2h-2.7zM607.6 539.3h5.5v5.2h-5.5zM591.2 544.2h2.7v5.2h-2.7zM77.5 539.3h5.5v5.2h-5.5zM593.9 544.2h2.7v5.2h-2.7zM918.1 539.3h2.7v5.2h-2.7zM330.2 544.2h2.7v5.2h-2.7zM879.6 544.2h2.7v5.2h-2.7zM736.8 539.3h2.7v5.2h-2.7zM475.8 544.2h8.2v5.2h-8.2zM665.3 544.2h2.7v5.2h-2.7zM195.6 544.2h5.5v5.2h-5.5zM294.5 539.3h2.7v5.2h-2.7zM942.8 544.2h2.7v5.2h-2.7zM890.6 544.2h8.2v5.2h-8.2zM816.4 544.2h5.5v5.2h-5.5zM311 544.2h2.7v5.2h-2.7zM83 544.2h8.2v5.2h-8.2zM393.4 539.3h2.7v5.2h-2.7zM923.6 544.2h2.7v5.2h-2.7zM385.1 539.3h2.7v5.2h-2.7zM170.9 544.2h2.7v5.2h-2.7z"/>
<path fill="#1e78ba" d="M324.7 549.2h2.7v5.2h-2.7zM91.2 544.2h2.7v5.2h-2.7zM874.1 544.2h2.7v5.2h-2.7zM107.7 549.2h2.7v5.2h-2.7zM821.9 613.6h2.7v5.2h-2.7zM223.1 613.6h5.5v5.2h-5.5zM887.8 613.6h2.7v5.2h-2.7zM209.3 549.2h5.5v5.2h-5.5zM448.3 549.2h2.7v5.2h-2.7zM354.9 544.2h2.7v5.2h-2.7zM962 549.2h2.7v5.2h-2.7zM528 544.2h5.5v5.2h-5.5zM198.3 613.6h2.7v5.2h-2.7zM849.4 549.2h2.7v5.2h-2.7zM566.4 544.2h2.7v5.2h-2.7zM824.7 613.6h8.2v5.2h-8.2zM250.5 549.2h2.7v5.2h-2.7zM569.2 549.2h5.5v5.2h-5.5zM742.2 613.6h2.7v5.2h-2.7zM695.6 549.2h2.7v5.2h-2.7zM929 613.6h8.2v5.2h-8.2zM289 549.2h8.2v5.2h-8.2zM890.6 544.2h2.7v5.2h-2.7zM827.4 544.2h2.7v5.2h-2.7zM308.2 613.6h2.7v5.2h-2.7zM486.8 544.2h2.7v5.2h-2.7zM920.8 544.2h2.7v5.2h-2.7zM937.3 549.2h2.7v5.2h-2.7zM896.1 549.2h5.5v5.2h-5.5zM679.1 549.2h2.7v5.2h-2.7zM690.1 544.2h2.7v5.2h-2.7zM692.8 613.6h2.7v5.2h-2.7zM577.4 613.6h2.7v5.2h-2.7zM945.5 613.6h5.5v5.2h-5.5zM181.9 613.6h5.5v5.2h-5.5zM319.2 544.2h2.7v5.2h-2.7zM486.8 549.2h2.7v5.2h-2.7zM407.1 549.2h5.5v5.2h-5.5zM228.6 544.2h2.7v5.2h-2.7zM176.4 544.2h2.7v5.2h-2.7zM923.6 549.2h2.7v5.2h-2.7zM860.4 549.2h5.5v5.2h-5.5zM788.9 544.2h2.7v5.2h-2.7zM948.3 613.6h5.5v5.2h-5.5zM692.8 549.2h2.7v5.2h-2.7zM756 549.2h8.2v5.2h-8.2zM442.8 549.2h2.7v5.2h-2.7zM467.5 549.2h5.5v5.2h-5.5zM802.7 544.2h2.7v5.2h-2.7zM236.8 549.2h5.5v5.2h-5.5zM162.6 549.2h2.7v5.2h-2.7zM517 549.2h5.5v5.2h-5.5zM74.7 544.2h5.5v5.2h-5.5zM539 549.2h2.7v5.2h-2.7zM821.9 549.2h8.2v5.2h-8.2zM198.3 549.2h5.5v5.2h-5.5zM376.9 613.6h5.5v5.2h-5.5zM429.1 544.2h5.5v5.2h-5.5zM335.7 613.6h2.7v5.2h-2.7zM926.3 544.2h2.7v5.2h-2.7zM604.9 549.2h5.5v5.2h-5.5zM363.2 613.6h5.5v5.2h-5.5zM648.9 613.6h5.5v5.2h-5.5zM876.9 549.2h5.5v5.2h-5.5zM797.2 544.2h2.7v5.2h-2.7zM192.8 549.2h2.7v5.2h-2.7zM769.7 613.6h2.7v5.2h-2.7zM593.9 544.2h2.7v5.2h-2.7zM753.2 549.2h2.7v5.2h-2.7zM767 613.6h8.2v5.2h-8.2zM220.3 613.6h2.7v5.2h-2.7zM511.5 549.2h2.7v5.2h-2.7zM723 549.2h2.7v5.2h-2.7zM478.5 544.2h2.7v5.2h-2.7zM514.2 549.2h2.7v5.2h-2.7zM256 544.2h2.7v5.2h-2.7zM956.5 544.2h2.7v5.2h-2.7zM236.8 613.6h2.7v5.2h-2.7zM604.9 549.2h2.7v5.2h-2.7zM415.4 549.2h8.2v5.2h-8.2zM934.5 549.2h2.7v5.2h-2.7zM121.4 549.2h2.7v5.2h-2.7zM555.5 549.2h2.7v5.2h-2.7zM187.4 544.2h8.2v5.2h-8.2zM517 549.2h5.5v5.2h-5.5zM772.5 549.2h2.7v5.2h-2.7zM247.8 544.2h8.2v5.2h-8.2zM376.9 549.2h2.7v5.2h-2.7zM618.6 544.2h5.5v5.2h-5.5zM940 549.2h2.7v5.2h-2.7zM236.8 549.2h2.7v5.2h-2.7zM887.8 549.2h2.7v5.2h-2.7zM278 613.6h8.2v5.2h-8.2zM258.8 549.2h8.2v5.2h-8.2zM294.5 544.2h8.2v5.2h-8.2zM154.4 613.6h2.7v5.2h-2.7zM879.6 544.2h8.2v5.2h-8.2zM225.8 544.2h2.7v5.2h-2.7zM882.3 613.6h2.7v5.2h-2.7zM926.3 544.2h2.7v5.2h-2.7zM687.3 613.6h2.7v5.2h-2.7zM286.2 544.2h5.5v5.2h-5.5zM898.8 549.2h2.7v5.2h-2.7zM745 549.2h2.7v5.2h-2.7zM802.7 549.2h2.7v5.2h-2.7zM291.7 549.2h2.7v5.2h-2.7zM511.5 613.6h5.5v5.2h-5.5zM214.8 544.2h2.7v5.2h-2.7zM613.1 613.6h2.7v5.2h-2.7zM577.4 613.6h2.7v5.2h-2.7zM676.3 613.6h2.7v5.2h-2.7zM363.2 549.2h2.7v5.2h-2.7zM192.8 613.6h5.5v5.2h-5.5z"/>
<path fill="#84ccba" d="M168.1 638.4h8.2v5.2h-8.2zM750.5 504.6h2.7v5.2h-2.7zM349.4 499.6h5.5v5.2h-5.5zM363.2 504.6h2.7v5.2h-2.7zM934.5 499.6h5.5v5.2h-5.5zM445.6 499.6h2.7v5.2h-2.7zM83 499.6h5.5v5.2h-5.5zM676.3 504.6h2.7v5.2h-2.7zM85.7 499.6h8.2v5.2h-8.2zM300 499.6h2.7v5.2h-2.7zM102.2 504.6h5.5v5.2h-5.5zM648.9 638.4h2.7v5.2h-2.7zM434.6 504.6h8.2v5.2h-8.2zM657.1 499.6h5.5v5.2h-5.5zM258.8 504.6h2.7v5.2h-2.7zM291.7 638.4h2.7v5.2h-2.7zM758.7 499.6h5.5v5.2h-5.5zM640.6 499.6h2.7v5.2h-2.7zM456.6 638.4h5.5v5.2h-5.5zM912.6 638.4h2.7v5.2h-2.7zM555.5 638.4h5.5v5.2h-5.5zM750.5 638.4h2.7v5.2h-2.7zM599.4 504.6h2.7v5.2h-2.7zM52.7 638.4h5.5v5.2h-5.5zM668.1 638.4h8.2v5.2h-8.2zM137.9 499.6h2.7v5.2h-2.7zM338.4 499.6h2.7v5.2h-2.7zM632.4 499.6h2.7v5.2h-2.7zM904.3 504.6h2.7v5.2h-2.7zM940 499.6h5.5v5.2h-5.5zM190.1 638.4h2.7v5.2h-2.7zM901.6 499.6h2.7v5.2h-2.7zM857.6 638.4h5.5v5.2h-5.5zM819.2 504.6h2.7v5.2h-2.7zM923.6 504.6h2.7v5.2h-2.7zM157.1 499.6h2.7v5.2h-2.7zM539 499.6h2.7v5.2h-2.7zM300 499.6h5.5v5.2h-5.5zM552.7 638.4h8.2v5.2h-8.2zM253.3 499.6h2.7v5.2h-2.7zM659.8 504.6h2.7v5.2h-2.7zM126.9 638.4h2.7v5.2h-2.7zM530.7 504.6h2.7v5.2h-2.7zM393.4 499.6h2.7v5.2h-2.7zM426.3 638.4h5.5v5.2h-5.5zM937.3 499.6h8.2v5.2h-8.2zM530.7 499.6h8.2v5.2h-8.2zM429.1 638.4h8.2v5.2h-8.2zM794.4 499.6h2.7v5.2h-2.7zM264.3 499.6h5.5v5.2h-5.5zM231.3 638.4h2.7v5.2h-2.7zM550 504.6h2.7v5.2h-2.7zM931.8 504.6h2.7v5.2h-2.7zM275.3 638.4h5.5v5.2h-5.5zM673.6 504.6h2.7v5.2h-2.7zM555.5 499.6h2.7v5.2h-2.7zM596.7 504.6h5.5v5.2h-5.5zM541.7 504.6h2.7v5.2h-2.7zM179.1 499.6h2.7v5.2h-2.7zM849.4 499.6h2.7v5.2h-2.7zM868.6 504.6h8.2v5.2h-8.2zM528 638.4h2.7v5.2h-2.7zM923.6 638.4h2.7v5.2h-2.7zM165.4 638.4h2.7v5.2h-2.7zM643.4 638.4h8.2v5.2h-8.2zM618.6 504.6h2.7v5.2h-2.7zM143.4 638.4h5.5v5.2h-5.5zM341.2 499.6h2.7v5.2h-2.7zM742.2 504.6h2.7v5.2h-2.7zM703.8 638.4h2.7v5.2h-2.7zM475.8 638.4h2.7v5.2h-2.7zM909.8 499.6h2.7v5.2h-2.7zM959.3 638.4h2.7v5.2h-2.7zM533.5 504.6h5.5v5.2h-5.5zM335.7 504.6h2.7v5.2h-2.7zM830.2 499.6h8.2v5.2h-8.2zM404.4 499.6h2.7v5.2h-2.7zM681.8 499.6h2.7v5.2h-2.7zM665.3 499.6h5.5v5.2h-5.5zM401.6 638.4h2.7v5.2h-2.7zM885.1 499.6h5.5v5.2h-5.5zM176.4 504.6h5.5v5.2h-5.5zM420.8 638.4h2.7v5.2h-2.7zM393.4 638.4h5.5v5.2h-5.5zM294.5 504.6h2.7v5.2h-2.7zM747.7 638.4h2.7v5.2h-2.7zM835.6 638.4h2.7v5.2h-2.7zM173.6 504.6h5.5v5.2h-5.5zM102.2 504.6h5.5v5.2h-5.5zM453.8 504.6h5.5v5.2h-5.5zM615.9 504.6h2.7v5.2h-2.7zM140.7 499.6h2.7v5.2h-2.7zM775.2 499.6h5.5v5.2h-5.5zM725.8 504.6h8.2v5.2h-8.2zM379.6 499.6h2.7v5.2h-2.7zM788.9 499.6h2.7v5.2h-2.7zM429.1 499.6h8.2v5.2h-8.2zM929 504.6h2.7v5.2h-2.7zM181.9 504.6h5.5v5.2h-5.5zM135.2 504.6h2.7v5.2h-2.7zM269.8 499.6h2.7v5.2h-2.7zM739.5 504.6h2.7v5.2h-2.7zM467.5 499.6h2.7v5.2h-2.7zM165.4 504.6h2.7v5.2h-2.7zM343.9 638.4h2.7v5.2h-2.7zM750.5 638.4h2.7v5.2h-2.7zM643.4 638.4h8.2v5.2h-8.2zM286.2 499.6h2.7v5.2h-2.7zM904.3 638.4h2.7v5.2h-2.7zM272.5 504.6h2.7v5.2h-2.7zM363.2 504.6h5.5v5.2h-5.5zM953.8 504.6h2.7v5.2h-2.7zM83 499.6h2.7v5.2h-2.7zM423.6 638.4h5.5v5.2h-5.5zM962 638.4h2.7v5.2h-2.7zM242.3 504.6h2.7v5.2h-2.7zM283.5 499.6h8.2v5.2h-8.2zM929 504.6h5.5v5.2h-5.5zM599.4 504.6h5.5v5.2h-5.5zM467.5 504.6h2.7v5.2h-2.7zM462.1 504.6h5.5v5.2h-5.5zM786.2 499.6h5.5v5.2h-5.5zM302.7 499.6h2.7v5.2h-2.7zM948.3 504.6h5.5v5.2h-5.5zM74.7 504.6h2.7v5.2h-2.7zM269.8 499.6h5.5v5.2h-5.5z"/>
<path fill="#2a6cb4" d="M165.4 554.1h2.7v5.2h-2.7zM640.6 554.1h2.7v5.2h-2.7zM519.7 554.1h2.7v5.2h-2.7zM786.2 554.1h2.7v5.2h-2.7zM467.5 554.1h8.2v5.2h-8.2zM203.8 554.1h2.7v5.2h-2.7zM453.8 554.1h2.7v5.2h-2.7zM519.7 554.1h5.5v5.2h-5.5zM742.2 554.1h2.7v5.2h-2.7zM706.5 554.1h2.7v5.2h-2.7zM137.9 554.1h5.5v5.2h-5.5zM203.8 554.1h8.2v5.2h-8.2zM868.6 554.1h2.7v5.2h-2.7zM731.3 554.1h2.7v5.2h-2.7zM126.9 554.1h5.5v5.2h-5.5zM651.6 554.1h2.7v5.2h-2.7zM942.8 554.1h2.7v5.2h-2.7zM324.7 554.1h2.7v5.2h-2.7zM256 554.1h2.7v5.2h-2.7zM681.8 554.1h2.7v5.2h-2.7zM717.5 554.1h2.7v5.2h-2.7zM580.2 554.1h5.5v5.2h-5.5zM871.4 554.1h2.7v5.2h-2.7zM467.5 554.1h5.5v5.2h-5.5zM940 554.1h2.7v5.2h-2.7zM440.1 554.1h2.7v5.2h-2.7z"/>
<path fill="#305aa8" d="M453.8 559.1h2.7v5.2h-2.7zM228.6 564h5.5v5.2h-5.5zM69.2 559.1h5.5v5.2h-5.5zM547.2 564h2.7v5.2h-2.7zM769.7 559.1h2.7v5.2h-2.7zM234.1 559.1h2.7v5.2h-2.7zM893.3 564h2.7v5.2h-2.7zM151.6 559.1h2.7v5.2h-2.7zM813.7 564h2.7v5.2h-2.7zM725.8 559.1h2.7v5.2h-2.7zM245 564h2.7v5.2h-2.7zM841.1 559.1h2.7v5.2h-2.7zM470.3 564h2.7v5.2h-2.7zM261.5 559.1h5.5v5.2h-5.5zM332.9 564h2.7v5.2h-2.7zM593.9 559.1h5.5v5.2h-5.5zM137.9 564h2.7v5.2h-2.7zM865.9 564h5.5v5.2h-5.5zM429.1 564h5.5v5.2h-5.5zM135.2 559.1h2.7v5.2h-2.7zM503.3 564h2.7v5.2h-2.7zM555.5 564h2.7v5.2h-2.7zM940 559.1h2.7v5.2h-2.7zM593.9 559.1h5.5v5.2h-5.5zM582.9 564h2.7v5.2h-2.7zM267 559.1h2.7v5.2h-2.7zM63.7 564h2.7v5.2h-2.7zM258.8 564h2.7v5.2h-2.7zM698.3 559.1h2.7v5.2h-2.7zM918.1 559.1h5.5v5.2h-5.5zM929 564h2.7v5.2h-2.7zM393.4 559.1h2.7v5.2h-2.7zM797.2 564h8.2v5.2h-8.2zM398.9 559.1h8.2v5.2h-8.2zM539 559.1h2.7v5.2h-2.7zM915.3 559.1h2.7v5.2h-2.7zM217.6 564h2.7v5.2h-2.7zM533.5 564h5.5v5.2h-5.5zM865.9 559.1h8.2v5.2h-8.2zM712 559.1h2.7v5.2h-2.7zM91.2 559.1h2.7v5.2h-2.7zM113.2 559.1h2.7v5.2h-2.7zM195.6 559.1h2.7v5.2h-2.7zM904.3 564h8.2v5.2h-8.2zM80.2 559.1h2.7v5.2h-2.7zM115.9 564h2.7v5.2h-2.7zM668.1 564h2.7v5.2h-2.7z"/>
<path fill="#5ab4ba" d="M201.1 519.4h5.5v5.2h-5.5zM599.4 524.4h2.7v5.2h-2.7zM247.8 519.4h2.7v5.2h-2.7zM80.2 519.4h2.7v5.2h-2.7zM868.6 524.4h2.7v5.2h-2.7zM657.1 628.5h8.2v5.2h-8.2zM915.3 524.4h5.5v5.2h-5.5zM286.2 628.5h2.7v5.2h-2.7zM368.7 628.5h5.5v5.2h-5.5zM387.9 519.4h2.7v5.2h-2.7zM701 628.5h8.2v5.2h-8.2zM484 628.5h8.2v5.2h-8.2zM560.9 628.5h2.7v5.2h-2.7zM500.5 628.5h2.7v5.2h-2.7zM679.1 519.4h5.5v5.2h-5.5zM431.8 628.5h2.7v5.2h-2.7zM778 519.4h2.7v5.2h-2.7zM756 519.4h2.7v5.2h-2.7zM659.8 524.4h2.7v5.2h-2.7zM453.8 519.4h2.7v5.2h-2.7zM816.4 519.4h2.7v5.2h-2.7zM418.1 524.4h2.7v5.2h-2.7zM646.1 628.5h2.7v5.2h-2.7zM495 628.5h2.7v5.2h-2.7zM467.5 519.4h2.7v5.2h-2.7zM893.3 628.5h2.7v5.2h-2.7zM764.2 628.5h5.5v5.2h-5.5zM168.1 524.4h5.5v5.2h-5.5zM300 628.5h2.7v5.2h-2.7zM657.1 519.4h8.2v5.2h-8.2zM725.8 524.4h2.7v5.2h-2.7zM313.7 628.5h2.7v5.2h-2.7zM146.1 524.4h2.7v5.2h-2.7zM703.8 628.5h2.7v5.2h-2.7zM599.4 628.5h5.5v5.2h-5.5zM940 628.5h2.7v5.2h-2.7zM854.9 519.4h8.2v5.2h-8.2zM896.1 524.4h2.7v5.2h-2.7zM621.4 524.4h2.7v5.2h-2.7zM909.8 628.5h2.7v5.2h-2.7zM88.5 519.4h2.7v5.2h-2.7zM217.6 628.5h8.2v5.2h-8.2zM662.6 519.4h2.7v5.2h-2.7zM701 524.4h2.7v5.2h-2.7zM934.5 519.4h8.2v5.2h-8.2zM610.4 628.5h5.5v5.2h-5.5zM162.6 628.5h5.5v5.2h-5.5zM865.9 519.4h5.5v5.2h-5.5zM173.6 519.4h2.7v5.2h-2.7zM544.5 519.4h2.7v5.2h-2.7zM74.7 628.5h2.7v5.2h-2.7zM607.6 519.4h8.2v5.2h-8.2zM236.8 628.5h2.7v5.2h-2.7zM283.5 524.4h2.7v5.2h-2.7zM121.4 628.5h5.5v5.2h-5.5zM640.6 628.5h5.5v5.2h-5.5zM198.3 519.4h8.2v5.2h-8.2zM868.6 524.4h2.7v5.2h-2.7zM379.6 519.4h2.7v5.2h-2.7zM121.4 519.4h5.5v5.2h-5.5zM302.7 519.4h2.7v5.2h-2.7zM137.9 628.5h2.7v5.2h-2.7zM467.5 524.4h8.2v5.2h-8.2zM72 524.4h2.7v5.2h-2.7zM157.1 524.4h2.7v5.2h-2.7zM137.9 524.4h2.7v5.2h-2.7zM170.9 519.4h2.7v5.2h-2.7zM214.8 519.4h2.7v5.2h-2.7zM258.8 524.4h5.5v5.2h-5.5zM547.2 628.5h5.5v5.2h-5.5zM327.4 519.4h2.7v5.2h-2.7zM898.8 519.4h5.5v5.2h-5.5zM602.2 519.4h5.5v5.2h-5.5zM55.5 628.5h2.7v5.2h-2.7zM341.2 519.4h2.7v5.2h-2.7zM390.6 519.4h2.7v5.2h-2.7zM247.8 519.4h2.7v5.2h-2.7zM591.2 519.4h2.7v5.2h-2.7zM723 519.4h2.7v5.2h-2.7zM363.2 524.4h2.7v5.2h-2.7zM778 519.4h2.7v5.2h-2.7zM398.9 524.4h5.5v5.2h-5.5zM440.1 519.4h2.7v5.2h-2.7zM959.3 519.4h5.5v5.2h-5.5zM332.9 519.4h2.7v5.2h-2.7zM610.4 628.5h2.7v5.2h-2.7zM577.4 628.5h8.2v5.2h-8.2zM533.5 519.4h2.7v5.2h-2.7zM203.8 524.4h8.2v5.2h-8.2zM643.4 628.5h5.5v5.2h-5.5zM85.7 524.4h2.7v5.2h-2.7zM184.6 628.5h2.7v5.2h-2.7zM198.3 628.5h2.7v5.2h-2.7zM398.9 519.4h2.7v5.2h-2.7zM571.9 628.5h2.7v5.2h-2.7zM956.5 628.5h5.5v5.2h-5.5zM497.8 519.4h2.7v5.2h-2.7zM113.2 524.4h2.7v5.2h-2.7zM69.2 628.5h5.5v5.2h-5.5zM269.8 628.5h2.7v5.2h-2.7zM962 519.4h5.5v5.2h-5.5zM948.3 628.5h2.7v5.2h-2.7zM387.9 519.4h5.5v5.2h-5.5zM780.7 524.4h2.7v5.2h-2.7zM330.2 519.4h2.7v5.2h-2.7zM338.4 628.5h8.2v5.2h-8.2zM626.9 628.5h2.7v5.2h-2.7zM387.9 524.4h5.5v5.2h-5.5zM289 628.5h2.7v5.2h-2.7z"/>
<path fill="#305aae" d="M121.4 608.6h8.2v5.2h-8.2zM431.8 603.7h5.5v5.2h-5.5zM495 559.1h2.7v5.2h-2.7zM940 559.1h5.5v5.2h-5.5zM747.7 559.1h2.7v5.2h-2.7zM187.4 559.1h8.2v5.2h-8.2zM876.9 608.6h2.7v5.2h-2.7zM363.2 559.1h8.2v5.2h-8.2zM613.1 608.6h2.7v5.2h-2.7zM195.6 564h2.7v5.2h-2.7zM670.8 559.1h2.7v5.2h-2.7zM107.7 608.6h2.7v5.2h-2.7zM624.1 603.7h2.7v5.2h-2.7zM550 559.1h2.7v5.2h-2.7zM717.5 608.6h2.7v5.2h-2.7zM429.1 608.6h2.7v5.2h-2.7zM330.2 564h5.5v5.2h-5.5zM357.7 564h8.2v5.2h-8.2zM401.6 559.1h2.7v5.2h-2.7zM404.4 608.6h2.7v5.2h-2.7zM376.9 564h2.7v5.2h-2.7zM429.1 559.1h5.5v5.2h-5.5zM835.6 564h2.7v5.2h-2.7zM613.1 564h2.7v5.2h-2.7zM714.8 603.7h2.7v5.2h-2.7zM854.9 564h2.7v5.2h-2.7zM734 603.7h5.5v5.2h-5.5zM555.5 603.7h2.7v5.2h-2.7zM566.4 608.6h8.2v5.2h-8.2zM349.4 603.7h2.7v5.2h-2.7zM945.5 559.1h2.7v5.2h-2.7zM181.9 559.1h2.7v5.2h-2.7zM258.8 608.6h8.2v5.2h-8.2zM289 608.6h2.7v5.2h-2.7zM225.8 559.1h2.7v5.2h-2.7zM278 564h2.7v5.2h-2.7zM159.9 559.1h5.5v5.2h-5.5zM890.6 608.6h2.7v5.2h-2.7zM876.9 559.1h2.7v5.2h-2.7zM341.2 603.7h8.2v5.2h-8.2zM124.2 559.1h2.7v5.2h-2.7zM550 559.1h5.5v5.2h-5.5zM102.2 559.1h5.5v5.2h-5.5zM88.5 608.6h2.7v5.2h-2.7zM154.4 564h2.7v5.2h-2.7zM102.2 608.6h2.7v5.2h-2.7zM478.5 559.1h2.7v5.2h-2.7zM539 608.6h5.5v5.2h-5.5zM52.7 559.1h5.5v5.2h-5.5zM162.6 603.7h2.7v5.2h-2.7zM577.4 559.1h2.7v5.2h-2.7zM401.6 559.1h2.7v5.2h-2.7zM456.6 559.1h2.7v5.2h-2.7zM264.3 608.6h5.5v5.2h-5.5zM714.8 559.1h8.2v5.2h-8.2zM272.5 608.6h2.7v5.2h-2.7zM907.1 603.7h2.7v5.2h-2.7zM83 559.1h5.5v5.2h-5.5zM492.3 608.6h2.7v5.2h-2.7zM453.8 564h5.5v5.2h-5.5zM256 559.1h5.5v5.2h-5.5zM497.8 603.7h2.7v5.2h-2.7zM541.7 608.6h8.2v5.2h-8.2zM77.5 559.1h2.7v5.2h-2.7zM363.2 608.6h5.5v5.2h-5.5zM810.9 608.6h8.2v5.2h-8.2zM448.3 608.6h2.7v5.2h-2.7zM810.9 603.7h5.5v5.2h-5.5zM234.1 564h2.7v5.2h-2.7zM794.4 559.1h2.7v5.2h-2.7zM341.2 564h2.7v5.2h-2.7zM676.3 603.7h2.7v5.2h-2.7zM212.1 603.7h2.7v5.2h-2.7zM267 603.7h5.5v5.2h-5.5zM602.2 559.1h2.7v5.2h-2.7zM753.2 559.1h2.7v5.2h-2.7zM506 608.6h8.2v5.2h-8.2zM918.1 559.1h2.7v5.2h-2.7zM239.5 608.6h2.7v5.2h-2.7zM407.1 559.1h8.2v5.2h-8.2zM896.1 559.1h2.7v5.2h-2.7zM626.9 559.1h2.7v5.2h-2.7zM324.7 608.6h2.7v5.2h-2.7zM786.2 559.1h2.7v5.2h-2.7zM322 559.1h2.7v5.2h-2.7zM635.1 608.6h2.7v5.2h-2.7zM434.6 603.7h2.7v5.2h-2.7zM580.2 603.7h8.2v5.2h-8.2zM506 559.1h8.2v5.2h-8.2zM530.7 603.7h2.7v5.2h-2.7zM690.1 564h2.7v5.2h-2.7zM335.7 564h2.7v5.2h-2.7zM750.5 608.6h2.7v5.2h-2.7zM308.2 603.7h5.5v5.2h-5.5zM170.9 559.1h5.5v5.2h-5.5zM115.9 603.7h2.7v5.2h-2.7zM964.8 603.7h8.2v5.2h-8.2zM909.8 608.6h2.7v5.2h-2.7zM956.5 559.1h2.7v5.2h-2.7zM225.8 559.1h5.5v5.2h-5.5zM593.9 564h5.5v5.2h-5.5zM88.5 559.1h2.7v5.2h-2.7zM429.1 564h2.7v5.2h-2.7zM764.2 564h2.7v5.2h-2.7zM398.9 608.6h8.2v5.2h-8.2zM190.1 603.7h5.5v5.2h-5.5zM909.8 608.6h8.2v5.2h-8.2zM882.3 559.1h2.7v5.2h-2.7zM319.2 564h5.5v5.2h-5.5zM555.5 603.7h5.5v5.2h-5.5zM113.2 559.1h2.7v5.2h-2.7zM607.6 603.7h2.7v5.2h-2.7zM464.8 608.6h2.7v5.2h-2.7zM371.4 608.6h2.7v5.2h-2.7zM223.1 559.1h2.7v5.2h-2.7zM107.7 559.1h2.7v5.2h-2.7zM596.7 559.1h2.7v5.2h-2.7zM187.4 564h8.2v5.2h-8.2zM541.7 559.1h2.7v5.2h-2.7z"/>
<path fill="#3c2a84" d="M522.5 598.7h2.7v5.2h-2.7zM841.1 598.7h8.2v5.2h-8.2zM838.4 598.7h2.7v5.2h-2.7zM453.8 598.7h5.5v5.2h-5.5zM593.9 598.7h2.7v5.2h-2.7zM462.1 598.7h2.7v5.2h-2.7zM841.1 598.7h8.2v5.2h-8.2zM511.5 598.7h2.7v5.2h-2.7zM453.8 598.7h5.5v5.2h-5.5zM231.3 598.7h2.7v5.2h-2.7zM429.1 598.7h2.7v5.2h-2.7zM118.7 598.7h2.7v5.2h-2.7zM849.4 598.7h2.7v5.2h-2.7zM863.1 598.7h2.7v5.2h-2.7zM173.6 598.7h2.7v5.2h-2.7zM602.2 598.7h2.7v5.2h-2.7zM901.6 598.7h2.7v5.2h-2.7zM206.6 598.7h8.2v5.2h-8.2zM462.1 598.7h2.7v5.2h-2.7zM311 598.7h2.7v5.2h-2.7zM907.1 598.7h2.7v5.2h-2.7zM698.3 598.7h2.7v5.2h-2.7zM300 598.7h2.7v5.2h-2.7z"/>
<path fill="#8ad2ba" d="M624.1 638.4h2.7v5.2h-2.7zM429.1 638.4h2.7v5.2h-2.7zM63.7 499.6h5.5v5.2h-5.5zM596.7 499.6h2.7v5.2h-2.7zM805.4 499.6h5.5v5.2h-5.5zM926.3 638.4h2.7v5.2h-2.7zM132.4 499.6h8.2v5.2h-8.2zM467.5 499.6h2.7v5.2h-2.7zM849.4 499.6h2.7v5.2h-2.7zM701 499.6h5.5v5.2h-5.5zM118.7 499.6h2.7v5.2h-2.7zM239.5 499.6h5.5v5.2h-5.5zM302.7 499.6h2.7v5.2h-2.7zM96.7 499.6h8.2v5.2h-8.2zM256 638.4h5.5v5.2h-5.5zM574.7 638.4h5.5v5.2h-5.5zM80.2 499.6h2.7v5.2h-2.7zM687.3 499.6h5.5v5.2h-5.5zM863.1 499.6h5.5v5.2h-5.5zM940 499.6h2.7v5.2h-2.7zM275.3 638.4h8.2v5.2h-8.2zM821.9 499.6h8.2v5.2h-8.2zM214.8 638.4h2.7v5.2h-2.7zM725.8 638.4h2.7v5.2h-2.7zM673.6 638.4h2.7v5.2h-2.7zM231.3 638.4h2.7v5.2h-2.7zM547.2 499.6h2.7v5.2h-2.7zM242.3 638.4h2.7v5.2h-2.7zM874.1 638.4h2.7v5.2h-2.7zM725.8 638.4h2.7v5.2h-2.7zM849.4 638.4h2.7v5.2h-2.7zM440.1 638.4h8.2v5.2h-8.2zM267 499.6h2.7v5.2h-2.7zM731.3 638.4h2.7v5.2h-2.7zM96.7 638.4h5.5v5.2h-5.5zM291.7 638.4h5.5v5.2h-5.5zM467.5 638.4h8.2v5.2h-8.2zM423.6 638.4h5.5v5.2h-5.5zM489.5 638.4h5.5v5.2h-5.5zM651.6 638.4h8.2v5.2h-8.2zM550 499.6h8.2v5.2h-8.2zM159.9 638.4h2.7v5.2h-2.7zM393.4 638.4h2.7v5.2h-2.7zM720.3 499.6h8.2v5.2h-8.2zM569.2 638.4h2.7v5.2h-2.7zM714.8 638.4h8.2v5.2h-8.2zM580.2 638.4h2.7v5.2h-2.7zM415.4 499.6h2.7v5.2h-2.7zM788.9 638.4h2.7v5.2h-2.7zM945.5 638.4h2.7v5.2h-2.7zM662.6 638.4h2.7v5.2h-2.7zM742.2 638.4h2.7v5.2h-2.7zM610.4 638.4h2.7v5.2h-2.7zM83 499.6h2.7v5.2h-2.7zM907.1 638.4h8.2v5.2h-8.2zM55.5 499.6h2.7v5.2h-2.7zM245 499.6h5.5v5.2h-5.5zM876.9 638.4h2.7v5.2h-2.7zM720.3 499.6h8.2v5.2h-8.2zM258.8 499.6h2.7v5.2h-2.7zM593.9 499.6h2.7v5.2h-2.7zM132.4 638.4h2.7v5.2h-2.7zM234.1 638.4h2.7v5.2h-2.7zM668.1 638.4h8.2v5.2h-8.2zM918.1 638.4h2.7v5.2h-2.7zM640.6 499.6h5.5v5.2h-5.5zM192.8 499.6h2.7v5.2h-2.7zM440.1 499.6h2.7v5.2h-2.7zM162.6 638.4h2.7v5.2h-2.7zM148.9 638.4h5.5v5.2h-5.5zM363.2 638.4h2.7v5.2h-2.7zM920.8 638.4h2.7v5.2h-2.7zM511.5 499.6h2.7v5.2h-2.7zM868.6 499.6h2.7v5.2h-2.7zM113.2 499.6h2.7v5.2h-2.7zM588.4 499.6h2.7v5.2h-2.7zM429.1 638.4h2.7v5.2h-2.7zM940 638.4h2.7v5.2h-2.7zM170.9 638.4h2.7v5.2h-2.7zM195.6 638.4h2.7v5.2h-2.7zM519.7 499.6h2.7v5.2h-2.7zM580.2 499.6h2.7v5.2h-2.7zM94 499.6h2.7v5.2h-2.7zM426.3 499.6h5.5v5.2h-5.5zM879.6 499.6h2.7v5.2h-2.7zM651.6 638.4h2.7v5.2h-2.7zM374.1 638.4h2.7v5.2h-2.7zM909.8 638.4h2.7v5.2h-2.7zM643.4 499.6h2.7v5.2h-2.7zM646.1 638.4h2.7v5.2h-2.7zM495 638.4h2.7v5.2h-2.7zM813.7 499.6h2.7v5.2h-2.7zM896.1 638.4h5.5v5.2h-5.5zM129.7 638.4h8.2v5.2h-8.2zM61 499.6h2.7v5.2h-2.7zM173.6 499.6h2.7v5.2h-2.7zM481.3 499.6h2.7v5.2h-2.7zM519.7 499.6h5.5v5.2h-5.5zM363.2 499.6h2.7v5.2h-2.7zM679.1 499.6h2.7v5.2h-2.7zM651.6 499.6h2.7v5.2h-2.7zM506 499.6h2.7v5.2h-2.7zM297.2 499.6h5.5v5.2h-5.5zM662.6 499.6h2.7v5.2h-2.7zM154.4 638.4h5.5v5.2h-5.5zM63.7 499.6h5.5v5.2h-5.5zM571.9 638.4h2.7v5.2h-2.7zM162.6 638.4h2.7v5.2h-2.7zM780.7 499.6h2.7v5.2h-2.7zM654.3 638.4h8.2v5.2h-8.2zM767 638.4h2.7v5.2h-2.7zM459.3 638.4h5.5v5.2h-5.5zM264.3 638.4h2.7v5.2h-2.7zM940 499.6h2.7v5.2h-2.7zM382.4 499.6h2.7v5.2h-2.7zM181.9 499.6h2.7v5.2h-2.7zM555.5 499.6h8.2v5.2h-8.2zM66.5 638.4h8.2v5.2h-8.2zM703.8 499.6h5.5v5.2h-5.5zM124.2 638.4h2.7v5.2h-2.7zM440.1 499.6h2.7v5.2h-2.7zM929 499.6h2.7v5.2h-2.7zM539 638.4h2.7v5.2h-2.7zM615.9 499.6h2.7v5.2h-2.7zM168.1 499.6h8.2v5.2h-8.2zM253.3 499.6h2.7v5.2h-2.7zM761.5 499.6h2.7v5.2h-2.7zM901.6 499.6h5.5v5.2h-5.5zM135.2 638.4h2.7v5.2h-2.7z"/>
<path fill="#3c9cc0" d="M190.1 529.4h2.7v5.2h-2.7zM635.1 534.3h8.2v5.2h-8.2zM898.8 534.3h2.7v5.2h-2.7zM143.4 529.4h5.5v5.2h-5.5zM904.3 534.3h2.7v5.2h-2.7zM324.7 529.4h2.7v5.2h-2.7zM352.2 529.4h2.7v5.2h-2.7zM492.3 529.4h2.7v5.2h-2.7zM882.3 529.4h5.5v5.2h-5.5zM80.2 529.4h2.7v5.2h-2.7zM604.9 529.4h5.5v5.2h-5.5zM308.2 534.3h2.7v5.2h-2.7zM912.6 529.4h8.2v5.2h-8.2zM426.3 529.4h8.2v5.2h-8.2zM662.6 534.3h2.7v5.2h-2.7zM618.6 534.3h2.7v5.2h-2.7zM376.9 529.4h8.2v5.2h-8.2zM808.2 534.3h5.5v5.2h-5.5zM953.8 534.3h2.7v5.2h-2.7zM113.2 534.3h5.5v5.2h-5.5zM816.4 534.3h5.5v5.2h-5.5zM890.6 534.3h2.7v5.2h-2.7zM665.3 534.3h2.7v5.2h-2.7zM234.1 529.4h2.7v5.2h-2.7zM799.9 529.4h5.5v5.2h-5.5zM761.5 529.4h2.7v5.2h-2.7zM808.2 534.3h2.7v5.2h-2.7zM374.1 529.4h2.7v5.2h-2.7zM426.3 529.4h8.2v5.2h-8.2zM885.1 529.4h2.7v5.2h-2.7zM799.9 534.3h2.7v5.2h-2.7zM473 529.4h5.5v5.2h-5.5zM778 529.4h5.5v5.2h-5.5zM563.7 529.4h2.7v5.2h-2.7zM769.7 534.3h2.7v5.2h-2.7zM857.6 534.3h2.7v5.2h-2.7zM599.4 529.4h8.2v5.2h-8.2zM135.2 534.3h2.7v5.2h-2.7zM121.4 534.3h2.7v5.2h-2.7zM393.4 529.4h5.5v5.2h-5.5zM151.6 529.4h2.7v5.2h-2.7zM747.7 534.3h2.7v5.2h-2.7zM662.6 529.4h5.5v5.2h-5.5zM657.1 529.4h2.7v5.2h-2.7zM118.7 534.3h2.7v5.2h-2.7zM791.7 529.4h2.7v5.2h-2.7zM602.2 534.3h2.7v5.2h-2.7zM871.4 534.3h2.7v5.2h-2.7zM876.9 529.4h2.7v5.2h-2.7zM206.6 534.3h2.7v5.2h-2.7zM464.8 529.4h2.7v5.2h-2.7zM615.9 529.4h5.5v5.2h-5.5zM137.9 529.4h2.7v5.2h-2.7zM72 529.4h8.2v5.2h-8.2zM352.2 529.4h5.5v5.2h-5.5zM626.9 529.4h2.7v5.2h-2.7zM58.2 534.3h2.7v5.2h-2.7zM808.2 529.4h2.7v5.2h-2.7zM923.6 534.3h2.7v5.2h-2.7zM841.1 534.3h2.7v5.2h-2.7zM341.2 529.4h2.7v5.2h-2.7zM742.2 534.3h2.7v5.2h-2.7zM121.4 534.3h8.2v5.2h-8.2zM898.8 529.4h2.7v5.2h-2.7zM720.3 534.3h8.2v5.2h-8.2zM239.5 534.3h2.7v5.2h-2.7zM849.4 529.4h5.5v5.2h-5.5zM154.4 529.4h5.5v5.2h-5.5zM679.1 529.4h8.2v5.2h-8.2zM250.5 529.4h5.5v5.2h-5.5zM495 529.4h8.2v5.2h-8.2zM275.3 534.3h2.7v5.2h-2.7zM72 529.4h5.5v5.2h-5.5zM245 529.4h2.7v5.2h-2.7zM324.7 529.4h5.5v5.2h-5.5zM159.9 534.3h8.2v5.2h-8.2z"/>
<path fill="#66baba" d="M734 514.5h2.7v5.2h-2.7zM841.1 514.5h2.7v5.2h-2.7zM500.5 514.5h2.7v5.2h-2.7zM615.9 514.5h2.7v5.2h-2.7zM308.2 519.4h5.5v5.2h-5.5zM396.1 514.5h5.5v5.2h-5.5zM220.3 514.5h8.2v5.2h-8.2zM786.2 514.5h2.7v5.2h-2.7zM539 514.5h8.2v5.2h-8.2zM604.9 514.5h5.5v5.2h-5.5zM165.4 514.5h2.7v5.2h-2.7zM739.5 519.4h2.7v5.2h-2.7zM165.4 514.5h8.2v5.2h-8.2zM593.9 514.5h8.2v5.2h-8.2zM407.1 514.5h5.5v5.2h-5.5zM316.5 519.4h2.7v5.2h-2.7zM772.5 514.5h5.5v5.2h-5.5zM846.6 519.4h5.5v5.2h-5.5zM102.2 514.5h2.7v5.2h-2.7zM113.2 514.5h5.5v5.2h-5.5zM319.2 519.4h2.7v5.2h-2.7zM341.2 519.4h2.7v5.2h-2.7zM739.5 514.5h2.7v5.2h-2.7zM591.2 519.4h2.7v5.2h-2.7zM566.4 514.5h2.7v5.2h-2.7zM794.4 519.4h2.7v5.2h-2.7zM745 514.5h2.7v5.2h-2.7zM492.3 514.5h5.5v5.2h-5.5zM184.6 519.4h2.7v5.2h-2.7zM555.5 519.4h2.7v5.2h-2.7zM231.3 514.5h5.5v5.2h-5.5zM585.7 519.4h5.5v5.2h-5.5zM783.5 514.5h5.5v5.2h-5.5zM511.5 514.5h5.5v5.2h-5.5zM750.5 514.5h2.7v5.2h-2.7zM198.3 514.5h2.7v5.2h-2.7zM349.4 514.5h8.2v5.2h-8.2zM824.7 514.5h2.7v5.2h-2.7zM203.8 514.5h8.2v5.2h-8.2zM843.9 514.5h5.5v5.2h-5.5zM923.6 514.5h2.7v5.2h-2.7zM170.9 514.5h8.2v5.2h-8.2zM492.3 519.4h2.7v5.2h-2.7zM519.7 514.5h2.7v5.2h-2.7zM929 519.4h8.2v5.2h-8.2zM198.3 514.5h8.2v5.2h-8.2zM681.8 514.5h2.7v5.2h-2.7zM604.9 514.5h2.7v5.2h-2.7zM698.3 514.5h5.5v5.2h-5.5zM857.6 514.5h2.7v5.2h-2.7zM558.2 514.5h2.7v5.2h-2.7zM536.2 514.5h2.7v5.2h-2.7zM528 519.4h2.7v5.2h-2.7zM893.3 514.5h2.7v5.2h-2.7zM775.2 519.4h2.7v5.2h-2.7zM959.3 514.5h8.2v5.2h-8.2zM728.5 514.5h8.2v5.2h-8.2zM788.9 514.5h2.7v5.2h-2.7zM368.7 514.5h8.2v5.2h-8.2zM137.9 519.4h8.2v5.2h-8.2zM80.2 514.5h2.7v5.2h-2.7zM278 514.5h8.2v5.2h-8.2zM637.9 514.5h2.7v5.2h-2.7zM654.3 514.5h5.5v5.2h-5.5zM942.8 514.5h2.7v5.2h-2.7zM863.1 519.4h2.7v5.2h-2.7zM896.1 519.4h2.7v5.2h-2.7zM964.8 519.4h2.7v5.2h-2.7zM126.9 519.4h8.2v5.2h-8.2zM772.5 519.4h2.7v5.2h-2.7zM896.1 519.4h2.7v5.2h-2.7zM198.3 514.5h8.2v5.2h-8.2zM819.2 514.5h2.7v5.2h-2.7zM780.7 519.4h2.7v5.2h-2.7zM459.3 519.4h2.7v5.2h-2.7zM937.3 514.5h2.7v5.2h-2.7zM626.9 519.4h2.7v5.2h-2.7zM184.6 514.5h5.5v5.2h-5.5zM126.9 519.4h5.5v5.2h-5.5zM832.9 519.4h2.7v5.2h-2.7zM181.9 519.4h2.7v5.2h-2.7zM959.3 519.4h2.7v5.2h-2.7zM203.8 514.5h2.7v5.2h-2.7zM604.9 514.5h5.5v5.2h-5.5zM854.9 514.5h8.2v5.2h-8.2zM624.1 514.5h5.5v5.2h-5.5zM192.8 514.5h2.7v5.2h-2.7zM648.9 514.5h2.7v5.2h-2.7zM665.3 514.5h2.7v5.2h-2.7zM670.8 514.5h2.7v5.2h-2.7zM420.8 519.4h2.7v5.2h-2.7zM146.1 519.4h8.2v5.2h-8.2zM360.4 514.5h2.7v5.2h-2.7zM228.6 519.4h2.7v5.2h-2.7zM871.4 514.5h5.5v5.2h-5.5zM269.8 519.4h2.7v5.2h-2.7zM920.8 519.4h2.7v5.2h-2.7zM168.1 519.4h2.7v5.2h-2.7zM783.5 514.5h5.5v5.2h-5.5zM467.5 514.5h5.5v5.2h-5.5z"/>
<path fill="#2a66b4" d="M316.5 559.1h2.7v5.2h-2.7zM778 559.1h8.2v5.2h-8.2zM451.1 559.1h8.2v5.2h-8.2zM588.4 554.1h5.5v5.2h-5.5zM681.8 554.1h5.5v5.2h-5.5zM626.9 554.1h5.5v5.2h-5.5zM635.1 559.1h2.7v5.2h-2.7zM203.8 554.1h2.7v5.2h-2.7zM838.4 554.1h2.7v5.2h-2.7zM118.7 554.1h8.2v5.2h-8.2zM637.9 554.1h2.7v5.2h-2.7zM591.2 554.1h2.7v5.2h-2.7zM316.5 559.1h2.7v5.2h-2.7zM640.6 559.1h2.7v5.2h-2.7zM580.2 554.1h2.7v5.2h-2.7zM456.6 554.1h5.5v5.2h-5.5zM734 559.1h2.7v5.2h-2.7zM217.6 559.1h2.7v5.2h-2.7zM137.9 554.1h2.7v5.2h-2.7zM327.4 554.1h5.5v5.2h-5.5zM407.1 554.1h2.7v5.2h-2.7zM181.9 559.1h2.7v5.2h-2.7zM157.1 554.1h2.7v5.2h-2.7zM514.2 554.1h2.7v5.2h-2.7zM297.2 559.1h8.2v5.2h-8.2zM393.4 554.1h5.5v5.2h-5.5zM879.6 554.1h8.2v5.2h-8.2zM459.3 554.1h2.7v5.2h-2.7zM508.8 554.1h2.7v5.2h-2.7zM849.4 554.1h2.7v5.2h-2.7zM876.9 559.1h2.7v5.2h-2.7zM77.5 554.1h2.7v5.2h-2.7zM231.3 554.1h2.7v5.2h-2.7zM885.1 554.1h2.7v5.2h-2.7zM574.7 559.1h2.7v5.2h-2.7zM217.6 559.1h5.5v5.2h-5.5zM464.8 559.1h5.5v5.2h-5.5zM813.7 559.1h2.7v5.2h-2.7zM225.8 554.1h2.7v5.2h-2.7zM734 554.1h2.7v5.2h-2.7zM481.3 554.1h2.7v5.2h-2.7zM681.8 554.1h5.5v5.2h-5.5zM308.2 559.1h8.2v5.2h-8.2zM640.6 554.1h2.7v5.2h-2.7zM280.8 554.1h2.7v5.2h-2.7zM846.6 554.1h5.5v5.2h-5.5zM338.4 559.1h2.7v5.2h-2.7zM173.6 559.1h2.7v5.2h-2.7zM228.6 554.1h2.7v5.2h-2.7zM681.8 554.1h2.7v5.2h-2.7zM885.1 554.1h5.5v5.2h-5.5zM253.3 554.1h5.5v5.2h-5.5zM407.1 554.1h2.7v5.2h-2.7zM695.6 559.1h5.5v5.2h-5.5zM503.3 559.1h8.2v5.2h-8.2zM720.3 559.1h8.2v5.2h-8.2zM492.3 554.1h2.7v5.2h-2.7zM514.2 554.1h2.7v5.2h-2.7zM824.7 554.1h2.7v5.2h-2.7zM313.7 559.1h5.5v5.2h-5.5zM440.1 554.1h2.7v5.2h-2.7zM646.1 559.1h5.5v5.2h-5.5zM475.8 559.1h2.7v5.2h-2.7zM563.7 559.1h2.7v5.2h-2.7zM451.1 559.1h2.7v5.2h-2.7zM550 559.1h2.7v5.2h-2.7z"/>
<path fill="#3c1878" d="M212.1 578.9h5.5v5.2h-5.5zM728.5 578.9h2.7v5.2h-2.7zM401.6 578.9h2.7v5.2h-2.7zM231.3 578.9h8.2v5.2h-8.2zM124.2 578.9h5.5v5.2h-5.5zM846.6 578.9h2.7v5.2h-2.7zM756 578.9h2.7v5.2h-2.7zM121.4 578.9h2.7v5.2h-2.7zM69.2 578.9h2.7v5.2h-2.7zM813.7 578.9h2.7v5.2h-2.7zM360.4 578.9h5.5v5.2h-5.5zM846.6 578.9h2.7v5.2h-2.7zM890.6 578.9h5.5v5.2h-5.5zM626.9 578.9h8.2v5.2h-8.2zM146.1 578.9h2.7v5.2h-2.7zM256 578.9h2.7v5.2h-2.7zM673.6 578.9h5.5v5.2h-5.5zM868.6 578.9h2.7v5.2h-2.7zM475.8 578.9h5.5v5.2h-5.5zM550 578.9h8.2v5.2h-8.2zM398.9 578.9h2.7v5.2h-2.7zM772.5 578.9h2.7v5.2h-2.7zM753.2 578.9h2.7v5.2h-2.7zM258.8 578.9h2.7v5.2h-2.7z"/>
<path fill="#1e84ba" d="M602.2 613.6h2.7v5.2h-2.7zM209.3 613.6h2.7v5.2h-2.7zM440.1 613.6h2.7v5.2h-2.7zM772.5 613.6h2.7v5.2h-2.7zM588.4 613.6h8.2v5.2h-8.2zM882.3 613.6h8.2v5.2h-8.2zM577.4 613.6h2.7v5.2h-2.7zM297.2 613.6h2.7v5.2h-2.7zM514.2 613.6h8.2v5.2h-8.2zM670.8 613.6h2.7v5.2h-2.7zM168.1 613.6h2.7v5.2h-2.7zM486.8 613.6h2.7v5.2h-2.7zM382.4 613.6h2.7v5.2h-2.7zM69.2 613.6h8.2v5.2h-8.2zM648.9 613.6h2.7v5.2h-2.7zM475.8 613.6h2.7v5.2h-2.7zM148.9 613.6h5.5v5.2h-5.5zM830.2 613.6h2.7v5.2h-2.7zM363.2 613.6h2.7v5.2h-2.7z"/>
<path fill="#1e72ba" d="M670.8 608.6h2.7v5.2h-2.7zM398.9 608.6h2.7v5.2h-2.7zM577.4 608.6h2.7v5.2h-2.7zM302.7 608.6h2.7v5.2h-2.7zM302.7 608.6h2.7v5.2h-2.7zM61 608.6h2.7v5.2h-2.7zM382.4 608.6h2.7v5.2h-2.7zM467.5 608.6h2.7v5.2h-2.7zM536.2 608.6h5.5v5.2h-5.5zM695.6 608.6h2.7v5.2h-2.7zM192.8 608.6h2.7v5.2h-2.7zM354.9 608.6h5.5v5.2h-5.5zM772.5 608.6h2.7v5.2h-2.7zM283.5 608.6h2.7v5.2h-2.7zM519.7 608.6h2.7v5.2h-2.7zM404.4 608.6h2.7v5.2h-2.7zM283.5 608.6h5.5v5.2h-5.5zM363.2 608.6h2.7v5.2h-2.7zM536.2 608.6h2.7v5.2h-2.7zM687.3 608.6h5.5v5.2h-5.5zM522.5 608.6h2.7v5.2h-2.7zM385.1 608.6h5.5v5.2h-5.5zM780.7 608.6h2.7v5.2h-2.7zM113.2 608.6h5.5v5.2h-5.5zM783.5 608.6h5.5v5.2h-5.5zM393.4 608.6h2.7v5.2h-2.7z"/>
<path fill="#72c0ba" d="M341.2 628.5h2.7v5.2h-2.7zM684.6 628.5h5.5v5.2h-5.5zM94 509.5h2.7v5.2h-2.7zM61 633.4h2.7v5.2h-2.7zM926.3 514.5h2.7v5.2h-2.7zM909.8 633.4h2.7v5.2h-2.7zM648.9 514.5h2.7v5.2h-2.7zM736.8 633.4h5.5v5.2h-5.5zM580.2 633.4h8.2v5.2h-8.2zM239.5 633.4h2.7v5.2h-2.7zM429.1 628.5h5.5v5.2h-5.5zM473 628.5h5.5v5.2h-5.5zM442.8 628.5h2.7v5.2h-2.7zM61 628.5h2.7v5.2h-2.7zM775.2 633.4h5.5v5.2h-5.5zM624.1 509.5h5.5v5.2h-5.5zM539 628.5h2.7v5.2h-2.7zM55.5 633.4h5.5v5.2h-5.5zM717.5 509.5h5.5v5.2h-5.5zM673.6 633.4h8.2v5.2h-8.2zM291.7 509.5h2.7v5.2h-2.7zM566.4 514.5h2.7v5.2h-2.7zM426.3 509.5h5.5v5.2h-5.5zM780.7 514.5h5.5v5.2h-5.5zM346.7 633.4h2.7v5.2h-2.7zM245 514.5h2.7v5.2h-2.7zM799.9 628.5h2.7v5.2h-2.7zM470.3 514.5h2.7v5.2h-2.7zM563.7 509.5h2.7v5.2h-2.7zM959.3 633.4h2.7v5.2h-2.7zM841.1 633.4h5.5v5.2h-5.5zM258.8 628.5h2.7v5.2h-2.7zM761.5 633.4h2.7v5.2h-2.7zM519.7 514.5h2.7v5.2h-2.7zM135.2 509.5h2.7v5.2h-2.7zM832.9 633.4h2.7v5.2h-2.7zM728.5 628.5h2.7v5.2h-2.7zM827.4 628.5h2.7v5.2h-2.7zM580.2 628.5h2.7v5.2h-2.7zM816.4 509.5h5.5v5.2h-5.5zM239.5 509.5h2.7v5.2h-2.7zM154.4 509.5h8.2v5.2h-8.2zM904.3 514.5h2.7v5.2h-2.7zM962 514.5h8.2v5.2h-8.2zM956.5 509.5h5.5v5.2h-5.5zM657.1 628.5h2.7v5.2h-2.7zM352.2 514.5h2.7v5.2h-2.7zM379.6 633.4h2.7v5.2h-2.7zM580.2 633.4h2.7v5.2h-2.7zM201.1 633.4h2.7v5.2h-2.7zM181.9 628.5h5.5v5.2h-5.5zM346.7 514.5h2.7v5.2h-2.7zM212.1 514.5h8.2v5.2h-8.2zM129.7 633.4h2.7v5.2h-2.7zM250.5 633.4h2.7v5.2h-2.7zM58.2 514.5h2.7v5.2h-2.7zM745 509.5h5.5v5.2h-5.5zM63.7 628.5h2.7v5.2h-2.7zM602.2 633.4h2.7v5.2h-2.7zM258.8 633.4h2.7v5.2h-2.7zM712 509.5h2.7v5.2h-2.7zM231.3 633.4h2.7v5.2h-2.7zM783.5 633.4h2.7v5.2h-2.7zM706.5 509.5h2.7v5.2h-2.7zM352.2 633.4h2.7v5.2h-2.7zM124.2 628.5h2.7v5.2h-2.7zM860.4 514.5h8.2v5.2h-8.2zM816.4 509.5h2.7v5.2h-2.7zM495 628.5h2.7v5.2h-2.7zM698.3 509.5h5.5v5.2h-5.5zM242.3 509.5h2.7v5.2h-2.7zM267 633.4h2.7v5.2h-2.7zM849.4 514.5h2.7v5.2h-2.7zM371.4 633.4h2.7v5.2h-2.7zM717.5 509.5h2.7v5.2h-2.7zM365.9 633.4h2.7v5.2h-2.7zM143.4 514.5h8.2v5.2h-8.2zM300 509.5h5.5v5.2h-5.5zM918.1 514.5h2.7v5.2h-2.7zM544.5 633.4h5.5v5.2h-5.5z"/>
<path fill="#3c0c6c" d="M571.9 583.9h8.2v5.2h-8.2zM593.9 588.8h8.2v5.2h-8.2zM926.3 588.8h8.2v5.2h-8.2zM393.4 583.9h8.2v5.2h-8.2zM618.6 583.9h2.7v5.2h-2.7zM508.8 583.9h5.5v5.2h-5.5zM511.5 588.8h2.7v5.2h-2.7zM750.5 588.8h2.7v5.2h-2.7zM261.5 588.8h2.7v5.2h-2.7zM626.9 588.8h8.2v5.2h-8.2zM409.9 588.8h2.7v5.2h-2.7zM533.5 583.9h2.7v5.2h-2.7zM714.8 583.9h2.7v5.2h-2.7zM923.6 588.8h8.2v5.2h-8.2zM335.7 588.8h2.7v5.2h-2.7zM198.3 583.9h2.7v5.2h-2.7zM305.5 583.9h5.5v5.2h-5.5zM143.4 588.8h2.7v5.2h-2.7zM250.5 583.9h5.5v5.2h-5.5zM148.9 588.8h2.7v5.2h-2.7zM560.9 588.8h2.7v5.2h-2.7zM305.5 588.8h2.7v5.2h-2.7zM69.2 588.8h2.7v5.2h-2.7zM415.4 588.8h5.5v5.2h-5.5zM124.2 588.8h2.7v5.2h-2.7zM607.6 588.8h2.7v5.2h-2.7zM464.8 583.9h5.5v5.2h-5.5zM346.7 588.8h2.7v5.2h-2.7zM648.9 583.9h2.7v5.2h-2.7zM110.4 588.8h5.5v5.2h-5.5zM173.6 583.9h8.2v5.2h-8.2zM365.9 588.8h5.5v5.2h-5.5zM541.7 588.8h2.7v5.2h-2.7zM799.9 583.9h2.7v5.2h-2.7zM668.1 583.9h2.7v5.2h-2.7zM453.8 583.9h8.2v5.2h-8.2zM66.5 588.8h2.7v5.2h-2.7zM58.2 583.9h8.2v5.2h-8.2zM772.5 588.8h5.5v5.2h-5.5zM723 583.9h2.7v5.2h-2.7zM500.5 583.9h2.7v5.2h-2.7zM245 583.9h5.5v5.2h-5.5zM129.7 583.9h8.2v5.2h-8.2zM305.5 588.8h5.5v5.2h-5.5zM132.4 588.8h2.7v5.2h-2.7zM621.4 588.8h8.2v5.2h-8.2zM269.8 583.9h8.2v5.2h-8.2zM489.5 588.8h2.7v5.2h-2.7zM778 583.9h2.7v5.2h-2.7zM723 588.8h2.7v5.2h-2.7zM832.9 588.8h2.7v5.2h-2.7zM349.4 583.9h2.7v5.2h-2.7zM725.8 583.9h2.7v5.2h-2.7zM283.5 583.9h2.7v5.2h-2.7zM195.6 583.9h2.7v5.2h-2.7zM824.7 583.9h2.7v5.2h-2.7zM409.9 583.9h5.5v5.2h-5.5zM500.5 583.9h5.5v5.2h-5.5zM712 583.9h5.5v5.2h-5.5zM511.5 583.9h2.7v5.2h-2.7zM72 583.9h2.7v5.2h-2.7zM440.1 583.9h2.7v5.2h-2.7zM137.9 583.9h5.5v5.2h-5.5zM514.2 583.9h2.7v5.2h-2.7zM272.5 583.9h2.7v5.2h-2.7zM819.2 588.8h2.7v5.2h-2.7zM475.8 588.8h2.7v5.2h-2.7zM613.1 588.8h8.2v5.2h-8.2zM536.2 588.8h2.7v5.2h-2.7zM621.4 583.9h2.7v5.2h-2.7zM756 583.9h5.5v5.2h-5.5zM725.8 583.9h2.7v5.2h-2.7zM220.3 588.8h2.7v5.2h-2.7zM253.3 588.8h2.7v5.2h-2.7zM148.9 583.9h5.5v5.2h-5.5zM398.9 583.9h2.7v5.2h-2.7zM931.8 583.9h2.7v5.2h-2.7zM225.8 588.8h8.2v5.2h-8.2zM805.4 583.9h2.7v5.2h-2.7zM802.7 583.9h5.5v5.2h-5.5zM673.6 583.9h8.2v5.2h-8.2zM209.3 583.9h2.7v5.2h-2.7zM126.9 583.9h5.5v5.2h-5.5zM187.4 588.8h2.7v5.2h-2.7zM503.3 583.9h8.2v5.2h-8.2zM695.6 588.8h2.7v5.2h-2.7zM717.5 588.8h2.7v5.2h-2.7zM151.6 588.8h2.7v5.2h-2.7zM857.6 583.9h2.7v5.2h-2.7zM821.9 588.8h2.7v5.2h-2.7zM670.8 583.9h2.7v5.2h-2.7zM412.6 583.9h2.7v5.2h-2.7zM662.6 583.9h2.7v5.2h-2.7zM50 583.9h2.7v5.2h-2.7zM857.6 583.9h5.5v5.2h-5.5zM448.3 588.8h5.5v5.2h-5.5zM898.8 588.8h2.7v5.2h-2.7zM783.5 583.9h5.5v5.2h-5.5zM393.4 583.9h2.7v5.2h-2.7zM832.9 583.9h2.7v5.2h-2.7zM83 583.9h5.5v5.2h-5.5zM797.2 583.9h2.7v5.2h-2.7zM728.5 588.8h2.7v5.2h-2.7zM563.7 583.9h2.7v5.2h-2.7zM184.6 588.8h2.7v5.2h-2.7zM558.2 588.8h2.7v5.2h-2.7zM610.4 588.8h8.2v5.2h-8.2zM209.3 583.9h2.7v5.2h-2.7zM267 583.9h5.5v5.2h-5.5zM615.9 583.9h8.2v5.2h-8.2zM429.1 583.9h5.5v5.2h-5.5zM871.4 588.8h5.5v5.2h-5.5zM475.8 588.8h5.5v5.2h-5.5zM272.5 583.9h2.7v5.2h-2.7zM102.2 583.9h5.5v5.2h-5.5zM827.4 588.8h5.5v5.2h-5.5zM569.2 588.8h8.2v5.2h-8.2zM717.5 588.8h5.5v5.2h-5.5zM676.3 583.9h8.2v5.2h-8.2zM286.2 588.8h5.5v5.2h-5.5zM560.9 583.9h2.7v5.2h-2.7zM481.3 583.9h2.7v5.2h-2.7zM486.8 583.9h2.7v5.2h-2.7zM74.7 583.9h2.7v5.2h-2.7zM143.4 583.9h2.7v5.2h-2.7zM929 583.9h5.5v5.2h-5.5zM514.2 583.9h2.7v5.2h-2.7zM486.8 583.9h2.7v5.2h-2.7zM602.2 588.8h2.7v5.2h-2.7zM187.4 583.9h5.5v5.2h-5.5zM143.4 583.9h2.7v5.2h-2.7zM745 588.8h5.5v5.2h-5.5zM714.8 583.9h2.7v5.2h-2.7zM217.6 583.9h5.5v5.2h-5.5z"/>
<path fill="#3654a8" d="M857.6 564h2.7v5.2h-2.7zM327.4 564h2.7v5.2h-2.7zM319.2 564h2.7v5.2h-2.7zM365.9 564h5.5v5.2h-5.5zM607.6 564h8.2v5.2h-8.2zM473 564h2.7v5.2h-2.7zM786.2 564h2.7v5.2h-2.7zM898.8 564h5.5v5.2h-5.5zM159.9 564h2.7v5.2h-2.7zM646.1 564h2.7v5.2h-2.7zM887.8 564h8.2v5.2h-8.2zM681.8 564h5.5v5.2h-5.5zM258.8 564h5.5v5.2h-5.5zM470.3 564h2.7v5.2h-2.7zM132.4 564h2.7v5.2h-2.7zM618.6 564h2.7v5.2h-2.7zM767 564h2.7v5.2h-2.7zM923.6 564h8.2v5.2h-8.2z"/>
<path fill="#2a60ae" d="M316.5 603.7h2.7v5.2h-2.7zM72 608.6h2.7v5.2h-2.7zM330.2 608.6h8.2v5.2h-8.2zM596.7 608.6h5.5v5.2h-5.5zM577.4 608.6h2.7v5.2h-2.7zM530.7 608.6h2.7v5.2h-2.7zM819.2 603.7h8.2v5.2h-8.2zM267 603.7h2.7v5.2h-2.7zM517 603.7h2.7v5.2h-2.7zM420.8 608.6h2.7v5.2h-2.7zM926.3 608.6h5.5v5.2h-5.5zM165.4 608.6h2.7v5.2h-2.7zM956.5 608.6h2.7v5.2h-2.7zM580.2 608.6h5.5v5.2h-5.5zM495 608.6h5.5v5.2h-5.5zM184.6 603.7h2.7v5.2h-2.7zM725.8 603.7h8.2v5.2h-8.2zM418.1 603.7h2.7v5.2h-2.7zM94 608.6h8.2v5.2h-8.2zM626.9 608.6h2.7v5.2h-2.7zM698.3 608.6h2.7v5.2h-2.7zM440.1 608.6h5.5v5.2h-5.5zM962 608.6h5.5v5.2h-5.5zM648.9 603.7h2.7v5.2h-2.7zM256 608.6h2.7v5.2h-2.7zM684.6 608.6h2.7v5.2h-2.7zM346.7 608.6h2.7v5.2h-2.7zM198.3 608.6h2.7v5.2h-2.7zM909.8 603.7h2.7v5.2h-2.7zM209.3 608.6h2.7v5.2h-2.7zM813.7 603.7h2.7v5.2h-2.7zM300 603.7h8.2v5.2h-8.2zM148.9 608.6h8.2v5.2h-8.2zM832.9 603.7h5.5v5.2h-5.5zM613.1 603.7h5.5v5.2h-5.5zM423.6 608.6h2.7v5.2h-2.7zM640.6 603.7h2.7v5.2h-2.7zM514.2 608.6h2.7v5.2h-2.7zM478.5 608.6h2.7v5.2h-2.7zM723 608.6h2.7v5.2h-2.7zM846.6 608.6h2.7v5.2h-2.7zM637.9 608.6h5.5v5.2h-5.5zM201.1 608.6h8.2v5.2h-8.2zM94 608.6h5.5v5.2h-5.5zM920.8 603.7h5.5v5.2h-5.5zM832.9 608.6h5.5v5.2h-5.5zM503.3 608.6h2.7v5.2h-2.7zM670.8 608.6h2.7v5.2h-2.7zM77.5 603.7h2.7v5.2h-2.7zM720.3 608.6h2.7v5.2h-2.7zM668.1 603.7h2.7v5.2h-2.7zM429.1 608.6h2.7v5.2h-2.7zM278 608.6h2.7v5.2h-2.7zM324.7 608.6h2.7v5.2h-2.7zM269.8 608.6h2.7v5.2h-2.7zM269.8 608.6h2.7v5.2h-2.7zM563.7 608.6h5.5v5.2h-5.5z"/>
<path fill="#42a2ba" d="M201.1 623.5h2.7v5.2h-2.7zM681.8 623.5h8.2v5.2h-8.2zM574.7 623.5h2.7v5.2h-2.7zM448.3 623.5h2.7v5.2h-2.7zM637.9 623.5h5.5v5.2h-5.5zM717.5 623.5h2.7v5.2h-2.7zM632.4 623.5h5.5v5.2h-5.5zM129.7 623.5h2.7v5.2h-2.7zM269.8 623.5h5.5v5.2h-5.5zM665.3 623.5h2.7v5.2h-2.7zM692.8 623.5h2.7v5.2h-2.7zM940 623.5h2.7v5.2h-2.7zM863.1 623.5h5.5v5.2h-5.5zM305.5 623.5h2.7v5.2h-2.7zM456.6 623.5h2.7v5.2h-2.7zM225.8 623.5h5.5v5.2h-5.5zM835.6 623.5h2.7v5.2h-2.7zM168.1 623.5h2.7v5.2h-2.7zM256 623.5h8.2v5.2h-8.2zM440.1 623.5h2.7v5.2h-2.7zM904.3 623.5h8.2v5.2h-8.2zM909.8 623.5h5.5v5.2h-5.5zM294.5 623.5h8.2v5.2h-8.2zM805.4 623.5h2.7v5.2h-2.7z"/>
<path fill="#364ea2" d="M462.1 564h2.7v5.2h-2.7zM214.8 564h5.5v5.2h-5.5zM637.9 564h5.5v5.2h-5.5zM879.6 564h5.5v5.2h-5.5zM107.7 564h2.7v5.2h-2.7zM481.3 564h2.7v5.2h-2.7zM195.6 564h8.2v5.2h-8.2zM739.5 564h2.7v5.2h-2.7zM52.7 564h5.5v5.2h-5.5zM797.2 564h2.7v5.2h-2.7zM544.5 564h5.5v5.2h-5.5zM654.3 564h2.7v5.2h-2.7zM124.2 564h2.7v5.2h-2.7zM865.9 564h8.2v5.2h-8.2zM58.2 564h2.7v5.2h-2.7zM629.6 564h2.7v5.2h-2.7zM201.1 564h2.7v5.2h-2.7zM745 564h2.7v5.2h-2.7zM574.7 564h2.7v5.2h-2.7zM250.5 564h8.2v5.2h-8.2z"/>
<path fill="#3c3696" d="M398.9 569h2.7v5.2h-2.7zM165.4 569h2.7v5.2h-2.7zM223.1 569h8.2v5.2h-8.2zM838.4 598.7h5.5v5.2h-5.5zM278 598.7h2.7v5.2h-2.7zM236.8 598.7h5.5v5.2h-5.5zM374.1 569h2.7v5.2h-2.7zM247.8 569h8.2v5.2h-8.2zM838.4 569h2.7v5.2h-2.7zM346.7 569h2.7v5.2h-2.7zM206.6 598.7h8.2v5.2h-8.2zM453.8 569h5.5v5.2h-5.5zM637.9 598.7h2.7v5.2h-2.7zM780.7 598.7h2.7v5.2h-2.7zM539 569h2.7v5.2h-2.7zM110.4 598.7h5.5v5.2h-5.5zM267 598.7h5.5v5.2h-5.5zM286.2 569h8.2v5.2h-8.2zM948.3 569h2.7v5.2h-2.7zM816.4 598.7h2.7v5.2h-2.7zM418.1 598.7h8.2v5.2h-8.2zM742.2 598.7h2.7v5.2h-2.7zM96.7 598.7h2.7v5.2h-2.7zM264.3 598.7h5.5v5.2h-5.5zM354.9 569h5.5v5.2h-5.5zM629.6 598.7h2.7v5.2h-2.7zM390.6 598.7h2.7v5.2h-2.7zM904.3 598.7h2.7v5.2h-2.7zM357.7 569h5.5v5.2h-5.5zM951 569h2.7v5.2h-2.7z"/>
<path fill="#3c9cba" d="M681.8 618.6h5.5v5.2h-5.5zM742.2 618.6h8.2v5.2h-8.2zM591.2 618.6h2.7v5.2h-2.7zM824.7 623.5h2.7v5.2h-2.7zM560.9 623.5h2.7v5.2h-2.7zM412.6 623.5h5.5v5.2h-5.5zM882.3 618.6h2.7v5.2h-2.7zM104.9 623.5h2.7v5.2h-2.7zM610.4 618.6h8.2v5.2h-8.2zM267 623.5h2.7v5.2h-2.7zM596.7 623.5h8.2v5.2h-8.2zM148.9 623.5h2.7v5.2h-2.7zM769.7 623.5h2.7v5.2h-2.7zM209.3 618.6h2.7v5.2h-2.7zM585.7 623.5h2.7v5.2h-2.7zM486.8 618.6h5.5v5.2h-5.5zM278 623.5h5.5v5.2h-5.5zM113.2 618.6h2.7v5.2h-2.7zM528 618.6h5.5v5.2h-5.5zM440.1 618.6h2.7v5.2h-2.7zM769.7 623.5h2.7v5.2h-2.7zM132.4 618.6h8.2v5.2h-8.2zM525.2 618.6h2.7v5.2h-2.7zM714.8 618.6h2.7v5.2h-2.7zM712 618.6h5.5v5.2h-5.5zM945.5 618.6h2.7v5.2h-2.7zM110.4 618.6h2.7v5.2h-2.7zM228.6 618.6h5.5v5.2h-5.5zM289 618.6h2.7v5.2h-2.7zM190.1 618.6h2.7v5.2h-2.7zM220.3 623.5h2.7v5.2h-2.7zM316.5 618.6h5.5v5.2h-5.5zM599.4 623.5h2.7v5.2h-2.7zM550 618.6h2.7v5.2h-2.7zM61 623.5h2.7v5.2h-2.7z"/>
<path fill="#54aeba" d="M231.3 524.4h5.5v5.2h-5.5zM228.6 524.4h2.7v5.2h-2.7zM519.7 628.5h2.7v5.2h-2.7zM830.2 628.5h2.7v5.2h-2.7zM788.9 524.4h2.7v5.2h-2.7zM261.5 623.5h5.5v5.2h-5.5zM824.7 628.5h2.7v5.2h-2.7zM843.9 623.5h2.7v5.2h-2.7zM467.5 623.5h2.7v5.2h-2.7zM129.7 524.4h5.5v5.2h-5.5zM475.8 524.4h2.7v5.2h-2.7zM613.1 623.5h8.2v5.2h-8.2zM162.6 623.5h2.7v5.2h-2.7zM580.2 524.4h2.7v5.2h-2.7zM731.3 519.4h2.7v5.2h-2.7zM195.6 519.4h2.7v5.2h-2.7zM868.6 524.4h2.7v5.2h-2.7zM83 524.4h2.7v5.2h-2.7zM456.6 628.5h5.5v5.2h-5.5zM453.8 524.4h2.7v5.2h-2.7zM915.3 524.4h2.7v5.2h-2.7zM706.5 524.4h2.7v5.2h-2.7zM365.9 519.4h8.2v5.2h-8.2zM541.7 519.4h2.7v5.2h-2.7zM467.5 628.5h2.7v5.2h-2.7zM640.6 628.5h2.7v5.2h-2.7zM915.3 519.4h2.7v5.2h-2.7zM146.1 524.4h5.5v5.2h-5.5zM371.4 628.5h2.7v5.2h-2.7zM703.8 524.4h5.5v5.2h-5.5zM223.1 524.4h5.5v5.2h-5.5zM401.6 524.4h2.7v5.2h-2.7zM684.6 524.4h2.7v5.2h-2.7zM110.4 524.4h2.7v5.2h-2.7zM484 524.4h2.7v5.2h-2.7zM316.5 519.4h5.5v5.2h-5.5zM278 524.4h5.5v5.2h-5.5zM429.1 623.5h2.7v5.2h-2.7zM302.7 623.5h2.7v5.2h-2.7zM385.1 524.4h2.7v5.2h-2.7zM275.3 623.5h2.7v5.2h-2.7zM907.1 524.4h8.2v5.2h-8.2zM920.8 623.5h8.2v5.2h-8.2zM91.2 524.4h2.7v5.2h-2.7zM124.2 519.4h2.7v5.2h-2.7zM445.6 524.4h5.5v5.2h-5.5zM214.8 524.4h5.5v5.2h-5.5zM478.5 524.4h2.7v5.2h-2.7zM473 519.4h2.7v5.2h-2.7zM72 628.5h2.7v5.2h-2.7zM926.3 519.4h8.2v5.2h-8.2zM827.4 628.5h2.7v5.2h-2.7zM264.3 524.4h2.7v5.2h-2.7zM530.7 623.5h2.7v5.2h-2.7zM747.7 524.4h2.7v5.2h-2.7zM104.9 524.4h5.5v5.2h-5.5zM621.4 628.5h8.2v5.2h-8.2zM223.1 524.4h2.7v5.2h-2.7zM618.6 519.4h5.5v5.2h-5.5zM874.1 524.4h5.5v5.2h-5.5zM701 524.4h2.7v5.2h-2.7zM473 628.5h8.2v5.2h-8.2zM953.8 524.4h2.7v5.2h-2.7zM368.7 623.5h5.5v5.2h-5.5zM214.8 623.5h2.7v5.2h-2.7zM247.8 623.5h2.7v5.2h-2.7zM495 524.4h2.7v5.2h-2.7zM550 524.4h2.7v5.2h-2.7zM245 628.5h2.7v5.2h-2.7zM698.3 623.5h2.7v5.2h-2.7zM253.3 628.5h2.7v5.2h-2.7zM52.7 628.5h5.5v5.2h-5.5zM374.1 628.5h2.7v5.2h-2.7zM942.8 519.4h2.7v5.2h-2.7zM536.2 519.4h2.7v5.2h-2.7zM863.1 623.5h2.7v5.2h-2.7zM55.5 524.4h2.7v5.2h-2.7zM887.8 623.5h2.7v5.2h-2.7zM629.6 519.4h5.5v5.2h-5.5zM453.8 623.5h5.5v5.2h-5.5zM846.6 524.4h2.7v5.2h-2.7zM289 524.4h5.5v5.2h-5.5zM599.4 524.4h5.5v5.2h-5.5zM898.8 524.4h2.7v5.2h-2.7zM250.5 628.5h8.2v5.2h-8.2zM115.9 519.4h2.7v5.2h-2.7zM750.5 623.5h2.7v5.2h-2.7zM412.6 524.4h2.7v5.2h-2.7zM953.8 623.5h5.5v5.2h-5.5zM209.3 623.5h2.7v5.2h-2.7zM448.3 623.5h2.7v5.2h-2.7zM580.2 628.5h2.7v5.2h-2.7zM445.6 524.4h5.5v5.2h-5.5zM146.1 524.4h2.7v5.2h-2.7zM519.7 524.4h2.7v5.2h-2.7z"/>
<path fill="#369cc0" d="M714.8 534.3h2.7v5.2h-2.7zM585.7 534.3h2.7v5.2h-2.7zM385.1 618.6h2.7v5.2h-2.7zM335.7 623.5h2.7v5.2h-2.7zM761.5 618.6h2.7v5.2h-2.7zM203.8 618.6h5.5v5.2h-5.5zM871.4 618.6h5.5v5.2h-5.5zM278 623.5h2.7v5.2h-2.7zM66.5 623.5h2.7v5.2h-2.7zM456.6 623.5h2.7v5.2h-2.7zM157.1 623.5h2.7v5.2h-2.7zM659.8 623.5h2.7v5.2h-2.7zM871.4 623.5h2.7v5.2h-2.7zM506 534.3h5.5v5.2h-5.5zM676.3 534.3h2.7v5.2h-2.7zM247.8 534.3h8.2v5.2h-8.2zM843.9 623.5h2.7v5.2h-2.7zM596.7 534.3h2.7v5.2h-2.7zM129.7 623.5h2.7v5.2h-2.7zM129.7 534.3h5.5v5.2h-5.5zM382.4 534.3h2.7v5.2h-2.7zM297.2 623.5h2.7v5.2h-2.7zM843.9 534.3h2.7v5.2h-2.7zM684.6 618.6h2.7v5.2h-2.7zM451.1 623.5h5.5v5.2h-5.5zM563.7 534.3h2.7v5.2h-2.7zM77.5 618.6h2.7v5.2h-2.7zM797.2 534.3h5.5v5.2h-5.5zM684.6 534.3h8.2v5.2h-8.2zM415.4 534.3h5.5v5.2h-5.5zM794.4 623.5h8.2v5.2h-8.2zM330.2 534.3h8.2v5.2h-8.2zM63.7 618.6h2.7v5.2h-2.7zM517 618.6h2.7v5.2h-2.7zM118.7 623.5h2.7v5.2h-2.7zM283.5 618.6h2.7v5.2h-2.7zM522.5 534.3h2.7v5.2h-2.7zM701 623.5h5.5v5.2h-5.5zM418.1 618.6h2.7v5.2h-2.7zM602.2 534.3h2.7v5.2h-2.7zM387.9 623.5h2.7v5.2h-2.7zM871.4 534.3h2.7v5.2h-2.7zM838.4 534.3h2.7v5.2h-2.7zM99.4 618.6h2.7v5.2h-2.7zM418.1 623.5h2.7v5.2h-2.7zM437.3 618.6h8.2v5.2h-8.2zM434.6 534.3h2.7v5.2h-2.7zM920.8 618.6h2.7v5.2h-2.7zM522.5 623.5h2.7v5.2h-2.7zM278 618.6h5.5v5.2h-5.5zM335.7 623.5h2.7v5.2h-2.7zM701 534.3h8.2v5.2h-8.2zM582.9 618.6h5.5v5.2h-5.5zM566.4 534.3h2.7v5.2h-2.7zM819.2 534.3h5.5v5.2h-5.5zM599.4 623.5h2.7v5.2h-2.7zM407.1 534.3h2.7v5.2h-2.7zM753.2 534.3h2.7v5.2h-2.7zM745 623.5h2.7v5.2h-2.7zM607.6 534.3h2.7v5.2h-2.7zM184.6 534.3h2.7v5.2h-2.7z"/>
<path fill="#2472ba" d="M66.5 549.2h2.7v5.2h-2.7zM794.4 608.6h5.5v5.2h-5.5zM621.4 613.6h8.2v5.2h-8.2zM500.5 613.6h2.7v5.2h-2.7zM300 549.2h2.7v5.2h-2.7zM137.9 613.6h8.2v5.2h-8.2zM464.8 608.6h2.7v5.2h-2.7zM701 613.6h5.5v5.2h-5.5zM657.1 608.6h2.7v5.2h-2.7zM865.9 608.6h5.5v5.2h-5.5zM363.2 608.6h2.7v5.2h-2.7zM714.8 613.6h5.5v5.2h-5.5zM588.4 608.6h8.2v5.2h-8.2zM506 549.2h8.2v5.2h-8.2zM964.8 608.6h5.5v5.2h-5.5zM547.2 613.6h2.7v5.2h-2.7zM912.6 613.6h2.7v5.2h-2.7zM951 613.6h8.2v5.2h-8.2zM500.5 549.2h2.7v5.2h-2.7zM245 608.6h5.5v5.2h-5.5zM838.4 613.6h5.5v5.2h-5.5zM745 608.6h2.7v5.2h-2.7zM390.6 613.6h2.7v5.2h-2.7zM665.3 613.6h5.5v5.2h-5.5zM676.3 613.6h2.7v5.2h-2.7zM275.3 549.2h5.5v5.2h-5.5zM571.9 613.6h2.7v5.2h-2.7zM275.3 613.6h2.7v5.2h-2.7zM170.9 608.6h2.7v5.2h-2.7zM887.8 549.2h2.7v5.2h-2.7zM750.5 608.6h8.2v5.2h-8.2zM352.2 608.6h2.7v5.2h-2.7zM569.2 608.6h5.5v5.2h-5.5zM626.9 549.2h2.7v5.2h-2.7zM250.5 608.6h2.7v5.2h-2.7zM728.5 608.6h5.5v5.2h-5.5zM827.4 608.6h8.2v5.2h-8.2zM604.9 549.2h5.5v5.2h-5.5zM783.5 613.6h2.7v5.2h-2.7zM456.6 613.6h2.7v5.2h-2.7zM530.7 613.6h2.7v5.2h-2.7zM440.1 549.2h5.5v5.2h-5.5zM503.3 608.6h2.7v5.2h-2.7zM607.6 613.6h2.7v5.2h-2.7zM907.1 549.2h2.7v5.2h-2.7zM203.8 613.6h5.5v5.2h-5.5zM256 549.2h5.5v5.2h-5.5zM511.5 608.6h5.5v5.2h-5.5zM464.8 549.2h2.7v5.2h-2.7zM179.1 549.2h5.5v5.2h-5.5zM786.2 613.6h2.7v5.2h-2.7zM99.4 549.2h5.5v5.2h-5.5zM289 613.6h2.7v5.2h-2.7zM846.6 608.6h2.7v5.2h-2.7zM126.9 608.6h2.7v5.2h-2.7zM613.1 608.6h5.5v5.2h-5.5zM703.8 608.6h8.2v5.2h-8.2zM80.2 613.6h5.5v5.2h-5.5z"/>
<path fill="#2a90c0" d="M212.1 539.3h2.7v5.2h-2.7zM58.2 539.3h5.5v5.2h-5.5zM536.2 539.3h2.7v5.2h-2.7zM74.7 534.3h2.7v5.2h-2.7zM552.7 534.3h5.5v5.2h-5.5zM470.3 534.3h5.5v5.2h-5.5zM223.1 618.6h5.5v5.2h-5.5zM643.4 539.3h2.7v5.2h-2.7zM250.5 539.3h2.7v5.2h-2.7zM767 539.3h2.7v5.2h-2.7zM398.9 539.3h5.5v5.2h-5.5zM401.6 539.3h5.5v5.2h-5.5zM681.8 539.3h5.5v5.2h-5.5zM684.6 539.3h8.2v5.2h-8.2zM137.9 539.3h5.5v5.2h-5.5zM470.3 539.3h2.7v5.2h-2.7zM267 618.6h2.7v5.2h-2.7zM676.3 618.6h5.5v5.2h-5.5zM569.2 534.3h5.5v5.2h-5.5zM907.1 539.3h2.7v5.2h-2.7zM239.5 618.6h2.7v5.2h-2.7zM849.4 539.3h2.7v5.2h-2.7zM85.7 618.6h2.7v5.2h-2.7zM456.6 618.6h5.5v5.2h-5.5zM352.2 539.3h8.2v5.2h-8.2zM396.1 618.6h2.7v5.2h-2.7zM203.8 539.3h8.2v5.2h-8.2zM99.4 539.3h2.7v5.2h-2.7zM673.6 618.6h2.7v5.2h-2.7zM574.7 539.3h5.5v5.2h-5.5zM401.6 539.3h5.5v5.2h-5.5zM887.8 618.6h2.7v5.2h-2.7zM239.5 539.3h2.7v5.2h-2.7zM143.4 539.3h5.5v5.2h-5.5zM212.1 534.3h5.5v5.2h-5.5zM879.6 618.6h2.7v5.2h-2.7zM69.2 539.3h5.5v5.2h-5.5zM453.8 534.3h2.7v5.2h-2.7zM239.5 539.3h2.7v5.2h-2.7zM786.2 539.3h8.2v5.2h-8.2zM613.1 534.3h2.7v5.2h-2.7zM786.2 534.3h2.7v5.2h-2.7zM217.6 618.6h8.2v5.2h-8.2zM750.5 539.3h2.7v5.2h-2.7zM74.7 539.3h2.7v5.2h-2.7zM629.6 539.3h2.7v5.2h-2.7zM190.1 539.3h2.7v5.2h-2.7zM91.2 539.3h2.7v5.2h-2.7zM558.2 539.3h5.5v5.2h-5.5zM115.9 618.6h5.5v5.2h-5.5zM676.3 534.3h8.2v5.2h-8.2zM610.4 539.3h2.7v5.2h-2.7zM368.7 539.3h2.7v5.2h-2.7zM80.2 539.3h2.7v5.2h-2.7zM343.9 539.3h2.7v5.2h-2.7zM885.1 534.3h2.7v5.2h-2.7zM335.7 539.3h8.2v5.2h-8.2zM121.4 539.3h5.5v5.2h-5.5zM311 539.3h2.7v5.2h-2.7zM879.6 539.3h5.5v5.2h-5.5zM330.2 618.6h5.5v5.2h-5.5zM871.4 618.6h2.7v5.2h-2.7zM558.2 539.3h5.5v5.2h-5.5zM517 534.3h2.7v5.2h-2.7zM522.5 534.3h2.7v5.2h-2.7zM690.1 534.3h2.7v5.2h-2.7zM85.7 539.3h2.7v5.2h-2.7zM566.4 534.3h5.5v5.2h-5.5zM245 539.3h2.7v5.2h-2.7zM415.4 539.3h2.7v5.2h-2.7zM904.3 539.3h8.2v5.2h-8.2zM354.9 618.6h2.7v5.2h-2.7zM508.8 539.3h2.7v5.2h-2.7zM701 539.3h2.7v5.2h-2.7zM544.5 539.3h5.5v5.2h-5.5zM599.4 539.3h5.5v5.2h-5.5zM379.6 618.6h2.7v5.2h-2.7zM236.8 534.3h5.5v5.2h-5.5zM497.8 539.3h2.7v5.2h-2.7zM593.9 534.3h2.7v5.2h-2.7zM88.5 539.3h2.7v5.2h-2.7zM159.9 539.3h2.7v5.2h-2.7zM398.9 539.3h2.7v5.2h-2.7zM74.7 618.6h2.7v5.2h-2.7zM382.4 534.3h2.7v5.2h-2.7zM497.8 618.6h2.7v5.2h-2.7zM547.2 618.6h8.2v5.2h-8.2zM308.2 618.6h8.2v5.2h-8.2zM610.4 534.3h2.7v5.2h-2.7zM863.1 534.3h8.2v5.2h-8.2zM956.5 539.3h8.2v5.2h-8.2zM374.1 539.3h2.7v5.2h-2.7zM55.5 539.3h2.7v5.2h-2.7zM85.7 618.6h5.5v5.2h-5.5zM657.1 539.3h8.2v5.2h-8.2zM769.7 539.3h5.5v5.2h-5.5zM821.9 534.3h8.2v5.2h-8.2zM890.6 539.3h2.7v5.2h-2.7zM580.2 534.3h8.2v5.2h-8.2zM159.9 539.3h8.2v5.2h-8.2zM431.8 534.3h2.7v5.2h-2.7zM519.7 618.6h2.7v5.2h-2.7zM860.4 539.3h8.2v5.2h-8.2zM541.7 539.3h5.5v5.2h-5.5zM102.2 539.3h2.7v5.2h-2.7zM363.2 534.3h2.7v5.2h-2.7zM522.5 539.3h2.7v5.2h-2.7zM871.4 618.6h5.5v5.2h-5.5zM591.2 618.6h2.7v5.2h-2.7z"/>
<path fill="#72c6ba" d="M810.9 509.5h2.7v5.2h-2.7zM225.8 514.5h2.7v5.2h-2.7zM813.7 633.4h2.7v5.2h-2.7zM580.2 514.5h2.7v5.2h-2.7zM813.7 633.4h5.5v5.2h-5.5zM332.9 633.4h2.7v5.2h-2.7zM588.4 509.5h8.2v5.2h-8.2zM261.5 514.5h8.2v5.2h-8.2zM192.8 509.5h2.7v5.2h-2.7zM352.2 633.4h2.7v5.2h-2.7zM745 514.5h5.5v5.2h-5.5zM885.1 633.4h2.7v5.2h-2.7zM401.6 509.5h5.5v5.2h-5.5zM819.2 509.5h2.7v5.2h-2.7zM780.7 514.5h5.5v5.2h-5.5zM750.5 633.4h2.7v5.2h-2.7zM890.6 514.5h8.2v5.2h-8.2zM80.2 514.5h5.5v5.2h-5.5zM52.7 514.5h2.7v5.2h-2.7zM104.9 514.5h8.2v5.2h-8.2zM519.7 514.5h2.7v5.2h-2.7zM728.5 509.5h2.7v5.2h-2.7zM253.3 509.5h2.7v5.2h-2.7zM137.9 514.5h2.7v5.2h-2.7zM676.3 514.5h2.7v5.2h-2.7zM747.7 633.4h8.2v5.2h-8.2zM821.9 514.5h8.2v5.2h-8.2zM170.9 633.4h5.5v5.2h-5.5zM308.2 514.5h2.7v5.2h-2.7zM951 633.4h2.7v5.2h-2.7zM500.5 514.5h2.7v5.2h-2.7zM467.5 514.5h8.2v5.2h-8.2zM934.5 509.5h2.7v5.2h-2.7zM148.9 509.5h2.7v5.2h-2.7zM676.3 509.5h2.7v5.2h-2.7zM838.4 514.5h2.7v5.2h-2.7zM827.4 509.5h8.2v5.2h-8.2zM525.2 509.5h5.5v5.2h-5.5zM407.1 633.4h2.7v5.2h-2.7zM484 514.5h5.5v5.2h-5.5zM687.3 509.5h2.7v5.2h-2.7zM484 633.4h2.7v5.2h-2.7zM459.3 509.5h2.7v5.2h-2.7zM201.1 509.5h8.2v5.2h-8.2zM267 514.5h2.7v5.2h-2.7zM165.4 514.5h5.5v5.2h-5.5zM360.4 514.5h8.2v5.2h-8.2zM940 514.5h5.5v5.2h-5.5zM250.5 514.5h2.7v5.2h-2.7zM412.6 509.5h2.7v5.2h-2.7zM409.9 514.5h2.7v5.2h-2.7zM838.4 633.4h2.7v5.2h-2.7zM712 633.4h2.7v5.2h-2.7zM654.3 633.4h2.7v5.2h-2.7zM929 509.5h8.2v5.2h-8.2zM871.4 514.5h5.5v5.2h-5.5zM621.4 509.5h2.7v5.2h-2.7zM80.2 509.5h2.7v5.2h-2.7zM621.4 633.4h2.7v5.2h-2.7zM228.6 514.5h2.7v5.2h-2.7zM165.4 509.5h2.7v5.2h-2.7zM761.5 633.4h2.7v5.2h-2.7zM327.4 509.5h2.7v5.2h-2.7zM736.8 633.4h2.7v5.2h-2.7zM154.4 633.4h8.2v5.2h-8.2zM61 633.4h2.7v5.2h-2.7zM322 514.5h2.7v5.2h-2.7z"/>
<path fill="#1e7eba" d="M170.9 544.2h8.2v5.2h-8.2zM772.5 544.2h8.2v5.2h-8.2zM574.7 544.2h2.7v5.2h-2.7zM181.9 544.2h2.7v5.2h-2.7zM385.1 544.2h8.2v5.2h-8.2zM703.8 544.2h8.2v5.2h-8.2zM214.8 544.2h5.5v5.2h-5.5zM610.4 544.2h2.7v5.2h-2.7zM901.6 544.2h2.7v5.2h-2.7zM552.7 544.2h2.7v5.2h-2.7zM374.1 544.2h2.7v5.2h-2.7zM912.6 544.2h2.7v5.2h-2.7zM506 544.2h2.7v5.2h-2.7zM687.3 544.2h8.2v5.2h-8.2zM525.2 544.2h2.7v5.2h-2.7zM929 544.2h2.7v5.2h-2.7zM643.4 544.2h2.7v5.2h-2.7zM473 544.2h5.5v5.2h-5.5zM157.1 544.2h2.7v5.2h-2.7zM418.1 544.2h8.2v5.2h-8.2zM332.9 544.2h2.7v5.2h-2.7zM349.4 544.2h5.5v5.2h-5.5zM805.4 544.2h2.7v5.2h-2.7zM860.4 544.2h2.7v5.2h-2.7zM220.3 544.2h2.7v5.2h-2.7zM286.2 544.2h5.5v5.2h-5.5zM797.2 544.2h2.7v5.2h-2.7zM679.1 544.2h2.7v5.2h-2.7z"/>
<path fill="#48a8c0" d="M206.6 529.4h8.2v5.2h-8.2zM442.8 529.4h5.5v5.2h-5.5zM170.9 529.4h2.7v5.2h-2.7zM283.5 529.4h2.7v5.2h-2.7zM272.5 524.4h5.5v5.2h-5.5zM412.6 524.4h5.5v5.2h-5.5zM668.1 529.4h2.7v5.2h-2.7zM357.7 529.4h8.2v5.2h-8.2zM717.5 529.4h2.7v5.2h-2.7zM879.6 529.4h2.7v5.2h-2.7zM437.3 529.4h5.5v5.2h-5.5zM239.5 529.4h2.7v5.2h-2.7zM385.1 529.4h2.7v5.2h-2.7zM429.1 529.4h5.5v5.2h-5.5zM687.3 529.4h5.5v5.2h-5.5zM879.6 524.4h5.5v5.2h-5.5zM745 529.4h8.2v5.2h-8.2zM536.2 524.4h2.7v5.2h-2.7zM525.2 529.4h5.5v5.2h-5.5zM868.6 529.4h2.7v5.2h-2.7zM753.2 529.4h2.7v5.2h-2.7zM382.4 529.4h5.5v5.2h-5.5zM217.6 529.4h5.5v5.2h-5.5zM113.2 529.4h2.7v5.2h-2.7zM533.5 529.4h2.7v5.2h-2.7zM63.7 524.4h2.7v5.2h-2.7zM539 529.4h2.7v5.2h-2.7zM365.9 524.4h2.7v5.2h-2.7zM788.9 529.4h2.7v5.2h-2.7zM745 524.4h2.7v5.2h-2.7zM467.5 524.4h2.7v5.2h-2.7zM843.9 524.4h2.7v5.2h-2.7zM228.6 524.4h5.5v5.2h-5.5zM550 529.4h2.7v5.2h-2.7zM464.8 529.4h2.7v5.2h-2.7zM857.6 529.4h5.5v5.2h-5.5zM596.7 524.4h2.7v5.2h-2.7zM758.7 529.4h5.5v5.2h-5.5zM365.9 524.4h5.5v5.2h-5.5zM335.7 529.4h2.7v5.2h-2.7zM146.1 524.4h8.2v5.2h-8.2zM832.9 529.4h5.5v5.2h-5.5zM838.4 524.4h2.7v5.2h-2.7zM692.8 524.4h2.7v5.2h-2.7zM429.1 524.4h8.2v5.2h-8.2zM544.5 529.4h8.2v5.2h-8.2zM121.4 529.4h8.2v5.2h-8.2zM585.7 529.4h2.7v5.2h-2.7zM354.9 529.4h2.7v5.2h-2.7zM832.9 524.4h5.5v5.2h-5.5zM563.7 529.4h5.5v5.2h-5.5zM758.7 524.4h5.5v5.2h-5.5zM898.8 524.4h2.7v5.2h-2.7zM253.3 524.4h2.7v5.2h-2.7zM440.1 524.4h5.5v5.2h-5.5zM635.1 529.4h5.5v5.2h-5.5zM709.3 524.4h2.7v5.2h-2.7zM610.4 529.4h2.7v5.2h-2.7zM58.2 529.4h2.7v5.2h-2.7zM503.3 524.4h2.7v5.2h-2.7zM176.4 524.4h8.2v5.2h-8.2zM769.7 524.4h2.7v5.2h-2.7zM253.3 529.4h2.7v5.2h-2.7zM451.1 529.4h8.2v5.2h-8.2zM799.9 529.4h5.5v5.2h-5.5zM923.6 529.4h2.7v5.2h-2.7zM668.1 529.4h2.7v5.2h-2.7zM723 524.4h2.7v5.2h-2.7zM901.6 529.4h2.7v5.2h-2.7zM643.4 524.4h2.7v5.2h-2.7zM393.4 524.4h8.2v5.2h-8.2zM860.4 524.4h5.5v5.2h-5.5zM225.8 529.4h2.7v5.2h-2.7zM332.9 524.4h2.7v5.2h-2.7zM165.4 529.4h8.2v5.2h-8.2zM953.8 529.4h2.7v5.2h-2.7zM371.4 529.4h2.7v5.2h-2.7zM940 524.4h2.7v5.2h-2.7z"/>
<path fill="#3090c0" d="M909.8 534.3h2.7v5.2h-2.7zM670.8 534.3h8.2v5.2h-8.2zM668.1 534.3h2.7v5.2h-2.7zM159.9 534.3h2.7v5.2h-2.7zM654.3 534.3h5.5v5.2h-5.5zM959.3 534.3h8.2v5.2h-8.2zM66.5 534.3h2.7v5.2h-2.7zM187.4 534.3h5.5v5.2h-5.5zM143.4 534.3h2.7v5.2h-2.7zM264.3 534.3h5.5v5.2h-5.5zM91.2 534.3h2.7v5.2h-2.7zM753.2 534.3h2.7v5.2h-2.7zM497.8 534.3h2.7v5.2h-2.7zM893.3 534.3h2.7v5.2h-2.7zM953.8 534.3h2.7v5.2h-2.7zM338.4 534.3h2.7v5.2h-2.7zM742.2 534.3h5.5v5.2h-5.5zM698.3 534.3h8.2v5.2h-8.2zM890.6 534.3h2.7v5.2h-2.7zM646.1 534.3h8.2v5.2h-8.2zM429.1 534.3h5.5v5.2h-5.5zM624.1 534.3h2.7v5.2h-2.7zM734 534.3h5.5v5.2h-5.5zM464.8 534.3h2.7v5.2h-2.7zM305.5 534.3h2.7v5.2h-2.7zM247.8 534.3h2.7v5.2h-2.7z"/>
<path fill="#3c126c" d="M104.9 583.9h2.7v5.2h-2.7zM129.7 583.9h2.7v5.2h-2.7zM805.4 583.9h2.7v5.2h-2.7zM234.1 583.9h2.7v5.2h-2.7zM393.4 583.9h2.7v5.2h-2.7zM168.1 583.9h5.5v5.2h-5.5zM962 583.9h5.5v5.2h-5.5zM143.4 583.9h2.7v5.2h-2.7zM146.1 583.9h2.7v5.2h-2.7zM352.2 583.9h5.5v5.2h-5.5zM863.1 583.9h2.7v5.2h-2.7zM758.7 583.9h2.7v5.2h-2.7zM423.6 583.9h2.7v5.2h-2.7zM723 583.9h2.7v5.2h-2.7zM657.1 583.9h8.2v5.2h-8.2zM528 583.9h2.7v5.2h-2.7zM157.1 583.9h2.7v5.2h-2.7zM80.2 583.9h8.2v5.2h-8.2zM357.7 583.9h2.7v5.2h-2.7zM143.4 583.9h2.7v5.2h-2.7zM723 583.9h2.7v5.2h-2.7zM88.5 583.9h2.7v5.2h-2.7zM659.8 583.9h2.7v5.2h-2.7zM352.2 583.9h2.7v5.2h-2.7zM945.5 583.9h5.5v5.2h-5.5zM503.3 583.9h2.7v5.2h-2.7zM247.8 583.9h2.7v5.2h-2.7zM695.6 583.9h8.2v5.2h-8.2zM143.4 583.9h2.7v5.2h-2.7zM519.7 583.9h2.7v5.2h-2.7zM242.3 583.9h2.7v5.2h-2.7zM530.7 583.9h2.7v5.2h-2.7zM272.5 583.9h2.7v5.2h-2.7zM159.9 583.9h2.7v5.2h-2.7zM445.6 583.9h2.7v5.2h-2.7zM701 583.9h5.5v5.2h-5.5zM552.7 583.9h2.7v5.2h-2.7zM571.9 583.9h5.5v5.2h-5.5zM387.9 583.9h2.7v5.2h-2.7zM77.5 583.9h2.7v5.2h-2.7zM511.5 583.9h2.7v5.2h-2.7zM758.7 583.9h2.7v5.2h-2.7zM769.7 583.9h5.5v5.2h-5.5zM541.7 583.9h8.2v5.2h-8.2zM264.3 583.9h5.5v5.2h-5.5zM788.9 583.9h2.7v5.2h-2.7z"/>
<path fill="#36429c" d="M316.5 569h2.7v5.2h-2.7zM648.9 569h5.5v5.2h-5.5zM63.7 603.7h8.2v5.2h-8.2zM753.2 603.7h2.7v5.2h-2.7zM736.8 569h2.7v5.2h-2.7zM528 598.7h2.7v5.2h-2.7zM231.3 603.7h2.7v5.2h-2.7zM464.8 603.7h2.7v5.2h-2.7zM849.4 569h2.7v5.2h-2.7zM305.5 569h2.7v5.2h-2.7zM918.1 569h2.7v5.2h-2.7zM132.4 598.7h8.2v5.2h-8.2zM723 569h2.7v5.2h-2.7zM865.9 598.7h8.2v5.2h-8.2zM187.4 569h2.7v5.2h-2.7zM162.6 569h5.5v5.2h-5.5zM126.9 569h2.7v5.2h-2.7zM346.7 598.7h5.5v5.2h-5.5zM313.7 598.7h5.5v5.2h-5.5zM332.9 598.7h2.7v5.2h-2.7zM492.3 603.7h2.7v5.2h-2.7zM832.9 598.7h2.7v5.2h-2.7zM783.5 569h2.7v5.2h-2.7zM830.2 603.7h2.7v5.2h-2.7zM250.5 569h2.7v5.2h-2.7zM305.5 569h2.7v5.2h-2.7zM907.1 569h8.2v5.2h-8.2zM915.3 569h2.7v5.2h-2.7zM679.1 603.7h2.7v5.2h-2.7zM495 569h5.5v5.2h-5.5zM503.3 603.7h2.7v5.2h-2.7zM797.2 603.7h2.7v5.2h-2.7zM85.7 569h2.7v5.2h-2.7zM113.2 569h2.7v5.2h-2.7zM209.3 603.7h2.7v5.2h-2.7zM302.7 569h2.7v5.2h-2.7zM332.9 598.7h2.7v5.2h-2.7zM135.2 603.7h5.5v5.2h-5.5zM217.6 603.7h5.5v5.2h-5.5zM613.1 603.7h5.5v5.2h-5.5zM506 598.7h5.5v5.2h-5.5zM624.1 569h8.2v5.2h-8.2zM343.9 569h2.7v5.2h-2.7zM585.7 569h2.7v5.2h-2.7zM236.8 603.7h2.7v5.2h-2.7zM239.5 603.7h5.5v5.2h-5.5zM550 569h5.5v5.2h-5.5zM148.9 569h2.7v5.2h-2.7zM338.4 603.7h5.5v5.2h-5.5zM920.8 603.7h5.5v5.2h-5.5zM52.7 603.7h5.5v5.2h-5.5zM85.7 598.7h2.7v5.2h-2.7zM409.9 569h5.5v5.2h-5.5zM245 603.7h2.7v5.2h-2.7zM140.7 603.7h2.7v5.2h-2.7zM58.2 569h2.7v5.2h-2.7zM363.2 603.7h8.2v5.2h-8.2zM723 569h8.2v5.2h-8.2zM365.9 598.7h2.7v5.2h-2.7zM898.8 598.7h5.5v5.2h-5.5zM780.7 569h5.5v5.2h-5.5zM659.8 603.7h2.7v5.2h-2.7zM184.6 598.7h2.7v5.2h-2.7zM228.6 598.7h2.7v5.2h-2.7zM756 598.7h8.2v5.2h-8.2zM151.6 598.7h2.7v5.2h-2.7zM146.1 598.7h5.5v5.2h-5.5zM72 598.7h2.7v5.2h-2.7zM332.9 598.7h2.7v5.2h-2.7zM758.7 598.7h2.7v5.2h-2.7zM187.4 569h2.7v5.2h-2.7zM514.2 598.7h2.7v5.2h-2.7z"/>
<path fill="#54b4ba" d="M934.5 623.5h5.5v5.2h-5.5zM698.3 623.5h5.5v5.2h-5.5zM489.5 623.5h2.7v5.2h-2.7zM692.8 623.5h2.7v5.2h-2.7zM74.7 623.5h5.5v5.2h-5.5zM695.6 623.5h2.7v5.2h-2.7zM113.2 623.5h5.5v5.2h-5.5zM637.9 623.5h2.7v5.2h-2.7zM725.8 623.5h2.7v5.2h-2.7zM596.7 623.5h5.5v5.2h-5.5zM684.6 623.5h2.7v5.2h-2.7zM234.1 623.5h2.7v5.2h-2.7zM720.3 623.5h5.5v5.2h-5.5zM63.7 623.5h2.7v5.2h-2.7zM332.9 623.5h2.7v5.2h-2.7zM706.5 623.5h2.7v5.2h-2.7zM338.4 623.5h5.5v5.2h-5.5zM819.2 623.5h5.5v5.2h-5.5zM813.7 623.5h5.5v5.2h-5.5zM467.5 623.5h8.2v5.2h-8.2zM808.2 623.5h2.7v5.2h-2.7zM354.9 623.5h8.2v5.2h-8.2zM58.2 623.5h2.7v5.2h-2.7zM907.1 623.5h2.7v5.2h-2.7zM319.2 623.5h2.7v5.2h-2.7zM365.9 623.5h2.7v5.2h-2.7z"/>
<path fill="#3ca2c0" d="M63.7 529.4h8.2v5.2h-8.2zM176.4 529.4h2.7v5.2h-2.7zM324.7 529.4h2.7v5.2h-2.7zM225.8 529.4h2.7v5.2h-2.7zM841.1 529.4h2.7v5.2h-2.7zM115.9 529.4h2.7v5.2h-2.7zM63.7 529.4h2.7v5.2h-2.7zM305.5 529.4h5.5v5.2h-5.5zM692.8 529.4h2.7v5.2h-2.7zM448.3 529.4h8.2v5.2h-8.2zM552.7 529.4h2.7v5.2h-2.7zM706.5 529.4h5.5v5.2h-5.5zM937.3 529.4h5.5v5.2h-5.5zM66.5 529.4h2.7v5.2h-2.7zM401.6 529.4h2.7v5.2h-2.7zM495 529.4h2.7v5.2h-2.7z"/>
<path fill="#3066b4" d="M165.4 559.1h2.7v5.2h-2.7zM945.5 554.1h2.7v5.2h-2.7zM764.2 554.1h5.5v5.2h-5.5zM484 559.1h5.5v5.2h-5.5zM440.1 554.1h2.7v5.2h-2.7zM854.9 554.1h2.7v5.2h-2.7zM267 554.1h5.5v5.2h-5.5zM868.6 554.1h5.5v5.2h-5.5zM363.2 554.1h5.5v5.2h-5.5zM539 554.1h2.7v5.2h-2.7zM775.2 554.1h5.5v5.2h-5.5zM934.5 559.1h2.7v5.2h-2.7zM473 559.1h5.5v5.2h-5.5zM437.3 559.1h2.7v5.2h-2.7zM489.5 554.1h2.7v5.2h-2.7zM827.4 554.1h5.5v5.2h-5.5zM659.8 554.1h2.7v5.2h-2.7zM865.9 554.1h5.5v5.2h-5.5zM577.4 559.1h2.7v5.2h-2.7zM926.3 559.1h2.7v5.2h-2.7zM363.2 559.1h2.7v5.2h-2.7zM214.8 559.1h2.7v5.2h-2.7zM280.8 554.1h5.5v5.2h-5.5zM736.8 559.1h2.7v5.2h-2.7zM940 559.1h5.5v5.2h-5.5zM879.6 559.1h8.2v5.2h-8.2zM651.6 554.1h5.5v5.2h-5.5zM901.6 554.1h2.7v5.2h-2.7zM398.9 559.1h8.2v5.2h-8.2zM451.1 559.1h2.7v5.2h-2.7zM107.7 554.1h5.5v5.2h-5.5zM580.2 559.1h5.5v5.2h-5.5zM247.8 559.1h2.7v5.2h-2.7zM324.7 559.1h2.7v5.2h-2.7zM500.5 559.1h2.7v5.2h-2.7zM316.5 559.1h2.7v5.2h-2.7zM311 559.1h2.7v5.2h-2.7zM437.3 559.1h2.7v5.2h-2.7zM278 554.1h5.5v5.2h-5.5zM871.4 554.1h2.7v5.2h-2.7zM404.4 554.1h5.5v5.2h-5.5zM566.4 559.1h5.5v5.2h-5.5zM519.7 554.1h5.5v5.2h-5.5zM849.4 554.1h8.2v5.2h-8.2zM780.7 554.1h5.5v5.2h-5.5zM415.4 559.1h2.7v5.2h-2.7zM352.2 559.1h8.2v5.2h-8.2zM129.7 554.1h2.7v5.2h-2.7zM857.6 554.1h5.5v5.2h-5.5zM72 559.1h2.7v5.2h-2.7zM745 559.1h5.5v5.2h-5.5z"/>
<path fill="#246cb4" d="M137.9 608.6h5.5v5.2h-5.5zM456.6 554.1h2.7v5.2h-2.7zM80.2 549.2h2.7v5.2h-2.7zM907.1 554.1h2.7v5.2h-2.7zM497.8 549.2h2.7v5.2h-2.7zM637.9 549.2h5.5v5.2h-5.5zM566.4 549.2h5.5v5.2h-5.5zM297.2 549.2h2.7v5.2h-2.7zM580.2 554.1h2.7v5.2h-2.7zM956.5 554.1h5.5v5.2h-5.5zM637.9 608.6h5.5v5.2h-5.5zM706.5 554.1h5.5v5.2h-5.5zM703.8 549.2h2.7v5.2h-2.7zM698.3 549.2h5.5v5.2h-5.5zM129.7 554.1h2.7v5.2h-2.7zM148.9 554.1h2.7v5.2h-2.7zM714.8 549.2h5.5v5.2h-5.5zM528 549.2h5.5v5.2h-5.5zM151.6 608.6h2.7v5.2h-2.7zM607.6 554.1h2.7v5.2h-2.7zM234.1 554.1h5.5v5.2h-5.5zM102.2 554.1h5.5v5.2h-5.5zM566.4 608.6h2.7v5.2h-2.7zM426.3 554.1h2.7v5.2h-2.7zM580.2 549.2h2.7v5.2h-2.7zM327.4 549.2h2.7v5.2h-2.7zM657.1 608.6h2.7v5.2h-2.7zM709.3 608.6h2.7v5.2h-2.7zM85.7 549.2h2.7v5.2h-2.7zM668.1 549.2h2.7v5.2h-2.7zM712 554.1h2.7v5.2h-2.7zM179.1 608.6h5.5v5.2h-5.5zM107.7 554.1h2.7v5.2h-2.7zM486.8 549.2h5.5v5.2h-5.5zM533.5 608.6h5.5v5.2h-5.5zM942.8 549.2h2.7v5.2h-2.7zM926.3 554.1h5.5v5.2h-5.5zM55.5 549.2h2.7v5.2h-2.7zM758.7 554.1h2.7v5.2h-2.7zM635.1 549.2h5.5v5.2h-5.5zM558.2 554.1h2.7v5.2h-2.7zM475.8 554.1h5.5v5.2h-5.5zM863.1 549.2h2.7v5.2h-2.7zM423.6 549.2h2.7v5.2h-2.7zM574.7 554.1h2.7v5.2h-2.7zM920.8 608.6h5.5v5.2h-5.5zM681.8 554.1h2.7v5.2h-2.7zM58.2 554.1h2.7v5.2h-2.7zM453.8 554.1h8.2v5.2h-8.2zM808.2 554.1h2.7v5.2h-2.7zM327.4 554.1h5.5v5.2h-5.5zM431.8 554.1h2.7v5.2h-2.7zM96.7 554.1h2.7v5.2h-2.7zM863.1 554.1h2.7v5.2h-2.7zM467.5 549.2h2.7v5.2h-2.7zM135.2 549.2h2.7v5.2h-2.7zM552.7 549.2h2.7v5.2h-2.7zM423.6 608.6h2.7v5.2h-2.7zM440.1 549.2h5.5v5.2h-5.5zM907.1 554.1h5.5v5.2h-5.5zM231.3 554.1h2.7v5.2h-2.7zM728.5 549.2h2.7v5.2h-2.7zM500.5 554.1h5.5v5.2h-5.5zM434.6 549.2h2.7v5.2h-2.7zM528 554.1h5.5v5.2h-5.5zM327.4 549.2h2.7v5.2h-2.7zM118.7 549.2h5.5v5.2h-5.5zM308.2 549.2h5.5v5.2h-5.5zM525.2 608.6h8.2v5.2h-8.2zM753.2 554.1h2.7v5.2h-2.7zM223.1 554.1h2.7v5.2h-2.7zM618.6 554.1h2.7v5.2h-2.7zM786.2 554.1h5.5v5.2h-5.5zM624.1 549.2h5.5v5.2h-5.5zM470.3 554.1h2.7v5.2h-2.7zM146.1 549.2h2.7v5.2h-2.7zM591.2 549.2h2.7v5.2h-2.7zM137.9 608.6h2.7v5.2h-2.7zM181.9 554.1h2.7v5.2h-2.7zM110.4 608.6h5.5v5.2h-5.5zM190.1 549.2h2.7v5.2h-2.7zM448.3 608.6h2.7v5.2h-2.7zM484 554.1h2.7v5.2h-2.7zM223.1 608.6h2.7v5.2h-2.7zM407.1 554.1h2.7v5.2h-2.7zM522.5 549.2h2.7v5.2h-2.7zM541.7 554.1h5.5v5.2h-5.5zM247.8 549.2h2.7v5.2h-2.7zM58.2 608.6h2.7v5.2h-2.7zM720.3 549.2h2.7v5.2h-2.7zM445.6 554.1h2.7v5.2h-2.7zM637.9 554.1h2.7v5.2h-2.7zM102.2 549.2h2.7v5.2h-2.7zM363.2 554.1h2.7v5.2h-2.7zM931.8 608.6h5.5v5.2h-5.5zM909.8 554.1h8.2v5.2h-8.2zM132.4 549.2h5.5v5.2h-5.5zM552.7 608.6h5.5v5.2h-5.5zM343.9 549.2h5.5v5.2h-5.5zM769.7 549.2h5.5v5.2h-5.5zM893.3 554.1h2.7v5.2h-2.7zM676.3 549.2h5.5v5.2h-5.5zM632.4 554.1h2.7v5.2h-2.7zM929 608.6h5.5v5.2h-5.5zM83 549.2h2.7v5.2h-2.7zM580.2 549.2h2.7v5.2h-2.7zM423.6 554.1h2.7v5.2h-2.7zM385.1 549.2h2.7v5.2h-2.7zM525.2 549.2h2.7v5.2h-2.7zM398.9 554.1h2.7v5.2h-2.7zM217.6 549.2h2.7v5.2h-2.7zM481.3 549.2h2.7v5.2h-2.7zM533.5 549.2h2.7v5.2h-2.7zM788.9 549.2h2.7v5.2h-2.7zM681.8 549.2h2.7v5.2h-2.7zM250.5 549.2h5.5v5.2h-5.5zM190.1 549.2h2.7v5.2h-2.7zM201.1 554.1h2.7v5.2h-2.7zM604.9 549.2h2.7v5.2h-2.7zM893.3 549.2h2.7v5.2h-2.7zM404.4 554.1h8.2v5.2h-8.2zM712 549.2h2.7v5.2h-2.7zM442.8 608.6h2.7v5.2h-2.7z"/>
<path fill="#3c1e7e" d="M802.7 574h2.7v5.2h-2.7zM88.5 578.9h2.7v5.2h-2.7zM184.6 578.9h5.5v5.2h-5.5zM464.8 593.8h2.7v5.2h-2.7zM541.7 578.9h5.5v5.2h-5.5zM640.6 574h2.7v5.2h-2.7zM302.7 578.9h2.7v5.2h-2.7zM706.5 574h2.7v5.2h-2.7zM379.6 578.9h2.7v5.2h-2.7zM841.1 574h2.7v5.2h-2.7zM398.9 593.8h8.2v5.2h-8.2zM137.9 593.8h8.2v5.2h-8.2zM401.6 574h2.7v5.2h-2.7zM500.5 578.9h2.7v5.2h-2.7zM835.6 593.8h2.7v5.2h-2.7zM879.6 574h2.7v5.2h-2.7zM267 593.8h8.2v5.2h-8.2zM168.1 593.8h2.7v5.2h-2.7zM893.3 593.8h8.2v5.2h-8.2zM412.6 574h5.5v5.2h-5.5zM360.4 574h5.5v5.2h-5.5zM805.4 593.8h2.7v5.2h-2.7zM668.1 593.8h5.5v5.2h-5.5zM168.1 578.9h5.5v5.2h-5.5zM646.1 578.9h2.7v5.2h-2.7zM511.5 593.8h5.5v5.2h-5.5zM473 578.9h2.7v5.2h-2.7zM788.9 578.9h2.7v5.2h-2.7zM731.3 593.8h2.7v5.2h-2.7zM945.5 578.9h5.5v5.2h-5.5zM264.3 578.9h2.7v5.2h-2.7zM393.4 593.8h5.5v5.2h-5.5zM923.6 593.8h2.7v5.2h-2.7zM764.2 574h8.2v5.2h-8.2zM857.6 593.8h2.7v5.2h-2.7zM72 578.9h2.7v5.2h-2.7zM286.2 593.8h8.2v5.2h-8.2zM445.6 578.9h2.7v5.2h-2.7zM96.7 574h2.7v5.2h-2.7zM712 593.8h2.7v5.2h-2.7zM52.7 574h2.7v5.2h-2.7zM654.3 574h2.7v5.2h-2.7zM824.7 593.8h5.5v5.2h-5.5zM701 593.8h2.7v5.2h-2.7zM209.3 578.9h2.7v5.2h-2.7zM387.9 574h2.7v5.2h-2.7zM615.9 578.9h5.5v5.2h-5.5zM621.4 578.9h8.2v5.2h-8.2zM385.1 593.8h8.2v5.2h-8.2zM157.1 593.8h2.7v5.2h-2.7zM214.8 593.8h2.7v5.2h-2.7zM646.1 574h2.7v5.2h-2.7zM66.5 593.8h5.5v5.2h-5.5zM140.7 574h5.5v5.2h-5.5zM756 593.8h8.2v5.2h-8.2zM547.2 578.9h2.7v5.2h-2.7zM118.7 578.9h2.7v5.2h-2.7zM137.9 593.8h5.5v5.2h-5.5zM63.7 578.9h2.7v5.2h-2.7zM640.6 593.8h5.5v5.2h-5.5z"/>
<path fill="#363c9c" d="M66.5 603.7h2.7v5.2h-2.7zM409.9 603.7h8.2v5.2h-8.2zM311 603.7h2.7v5.2h-2.7zM923.6 603.7h2.7v5.2h-2.7zM181.9 603.7h2.7v5.2h-2.7zM327.4 603.7h8.2v5.2h-8.2zM497.8 603.7h5.5v5.2h-5.5zM745 603.7h5.5v5.2h-5.5zM275.3 603.7h2.7v5.2h-2.7zM926.3 603.7h2.7v5.2h-2.7zM168.1 598.7h8.2v5.2h-8.2zM865.9 598.7h2.7v5.2h-2.7zM893.3 603.7h5.5v5.2h-5.5zM937.3 598.7h2.7v5.2h-2.7zM124.2 598.7h2.7v5.2h-2.7zM387.9 598.7h8.2v5.2h-8.2zM506 598.7h2.7v5.2h-2.7zM365.9 598.7h2.7v5.2h-2.7zM747.7 603.7h5.5v5.2h-5.5zM621.4 598.7h8.2v5.2h-8.2zM363.2 598.7h2.7v5.2h-2.7zM761.5 598.7h2.7v5.2h-2.7zM571.9 598.7h2.7v5.2h-2.7zM767 598.7h2.7v5.2h-2.7zM786.2 603.7h2.7v5.2h-2.7zM940 603.7h2.7v5.2h-2.7zM772.5 598.7h2.7v5.2h-2.7zM959.3 603.7h5.5v5.2h-5.5zM327.4 598.7h2.7v5.2h-2.7zM72 598.7h2.7v5.2h-2.7zM654.3 598.7h5.5v5.2h-5.5zM423.6 598.7h2.7v5.2h-2.7zM593.9 598.7h5.5v5.2h-5.5zM591.2 603.7h2.7v5.2h-2.7zM541.7 598.7h8.2v5.2h-8.2z"/>
<path fill="#36489c" d="M198.3 564h2.7v5.2h-2.7zM157.1 569h2.7v5.2h-2.7zM94 564h2.7v5.2h-2.7zM140.7 564h2.7v5.2h-2.7zM714.8 569h5.5v5.2h-5.5zM409.9 569h2.7v5.2h-2.7zM890.6 569h8.2v5.2h-8.2zM234.1 564h5.5v5.2h-5.5zM69.2 569h2.7v5.2h-2.7zM159.9 564h5.5v5.2h-5.5zM651.6 564h2.7v5.2h-2.7zM58.2 569h8.2v5.2h-8.2zM843.9 564h2.7v5.2h-2.7zM747.7 564h2.7v5.2h-2.7zM129.7 564h2.7v5.2h-2.7zM212.1 564h8.2v5.2h-8.2zM670.8 564h5.5v5.2h-5.5zM382.4 569h5.5v5.2h-5.5zM508.8 564h2.7v5.2h-2.7zM148.9 564h2.7v5.2h-2.7zM591.2 564h5.5v5.2h-5.5zM267 564h2.7v5.2h-2.7zM832.9 564h8.2v5.2h-8.2zM231.3 564h2.7v5.2h-2.7zM376.9 569h5.5v5.2h-5.5zM346.7 564h2.7v5.2h-2.7zM511.5 569h2.7v5.2h-2.7zM357.7 564h2.7v5.2h-2.7zM772.5 569h2.7v5.2h-2.7zM305.5 569h2.7v5.2h-2.7zM379.6 569h5.5v5.2h-5.5zM137.9 569h2.7v5.2h-2.7zM764.2 564h2.7v5.2h-2.7zM137.9 564h2.7v5.2h-2.7zM596.7 564h2.7v5.2h-2.7zM896.1 564h5.5v5.2h-5.5zM552.7 569h2.7v5.2h-2.7z"/>
<path fill="#2478ba" d="M528 549.2h2.7v5.2h-2.7zM184.6 549.2h2.7v5.2h-2.7zM920.8 549.2h2.7v5.2h-2.7zM854.9 549.2h2.7v5.2h-2.7zM448.3 549.2h2.7v5.2h-2.7zM775.2 549.2h2.7v5.2h-2.7zM168.1 549.2h2.7v5.2h-2.7zM61 549.2h2.7v5.2h-2.7zM723 549.2h2.7v5.2h-2.7zM448.3 549.2h2.7v5.2h-2.7zM651.6 549.2h2.7v5.2h-2.7zM797.2 549.2h2.7v5.2h-2.7zM896.1 549.2h8.2v5.2h-8.2zM552.7 549.2h2.7v5.2h-2.7zM865.9 549.2h2.7v5.2h-2.7zM569.2 549.2h5.5v5.2h-5.5zM302.7 549.2h2.7v5.2h-2.7z"/>
<path fill="#3c3690" d="M956.5 569h2.7v5.2h-2.7zM580.2 569h2.7v5.2h-2.7zM739.5 569h2.7v5.2h-2.7zM492.3 574h8.2v5.2h-8.2zM717.5 574h5.5v5.2h-5.5zM390.6 569h8.2v5.2h-8.2zM305.5 574h2.7v5.2h-2.7zM901.6 569h8.2v5.2h-8.2zM898.8 569h8.2v5.2h-8.2zM426.3 569h2.7v5.2h-2.7zM511.5 574h2.7v5.2h-2.7zM662.6 574h8.2v5.2h-8.2zM489.5 569h8.2v5.2h-8.2zM571.9 569h8.2v5.2h-8.2zM816.4 574h5.5v5.2h-5.5zM585.7 574h2.7v5.2h-2.7zM214.8 569h2.7v5.2h-2.7zM209.3 569h2.7v5.2h-2.7zM464.8 569h2.7v5.2h-2.7zM701 569h2.7v5.2h-2.7zM742.2 574h2.7v5.2h-2.7zM525.2 574h5.5v5.2h-5.5zM725.8 574h2.7v5.2h-2.7zM349.4 569h2.7v5.2h-2.7zM250.5 569h2.7v5.2h-2.7zM168.1 569h2.7v5.2h-2.7zM77.5 569h2.7v5.2h-2.7zM832.9 569h5.5v5.2h-5.5zM291.7 569h2.7v5.2h-2.7zM753.2 569h2.7v5.2h-2.7zM937.3 574h2.7v5.2h-2.7zM179.1 574h2.7v5.2h-2.7zM802.7 574h2.7v5.2h-2.7zM887.8 569h2.7v5.2h-2.7zM143.4 574h5.5v5.2h-5.5zM799.9 574h8.2v5.2h-8.2zM585.7 574h5.5v5.2h-5.5zM517 574h5.5v5.2h-5.5zM423.6 569h2.7v5.2h-2.7z"/>
<path fill="#2484ba" d="M591.2 613.6h8.2v5.2h-8.2zM942.8 613.6h5.5v5.2h-5.5zM69.2 613.6h8.2v5.2h-8.2zM214.8 613.6h2.7v5.2h-2.7zM190.1 613.6h5.5v5.2h-5.5zM85.7 613.6h2.7v5.2h-2.7zM316.5 613.6h8.2v5.2h-8.2zM841.1 613.6h2.7v5.2h-2.7zM475.8 613.6h2.7v5.2h-2.7zM157.1 613.6h8.2v5.2h-8.2zM550 613.6h2.7v5.2h-2.7zM267 613.6h5.5v5.2h-5.5zM558.2 613.6h5.5v5.2h-5.5zM560.9 613.6h5.5v5.2h-5.5zM327.4 613.6h5.5v5.2h-5.5zM187.4 613.6h5.5v5.2h-5.5zM434.6 613.6h8.2v5.2h-8.2zM745 613.6h5.5v5.2h-5.5zM313.7 613.6h2.7v5.2h-2.7zM775.2 613.6h2.7v5.2h-2.7zM96.7 613.6h5.5v5.2h-5.5zM852.1 613.6h5.5v5.2h-5.5zM398.9 613.6h8.2v5.2h-8.2zM209.3 613.6h2.7v5.2h-2.7zM261.5 613.6h2.7v5.2h-2.7zM346.7 613.6h5.5v5.2h-5.5zM379.6 613.6h2.7v5.2h-2.7z"/>
<path fill="#3c308a" d="M448.3 574h5.5v5.2h-5.5zM319.2 574h2.7v5.2h-2.7zM926.3 574h5.5v5.2h-5.5zM451.1 574h5.5v5.2h-5.5zM857.6 574h2.7v5.2h-2.7zM558.2 574h2.7v5.2h-2.7zM497.8 574h2.7v5.2h-2.7zM88.5 574h2.7v5.2h-2.7zM942.8 574h8.2v5.2h-8.2zM901.6 574h5.5v5.2h-5.5zM451.1 574h2.7v5.2h-2.7zM220.3 574h2.7v5.2h-2.7zM555.5 574h2.7v5.2h-2.7zM508.8 574h2.7v5.2h-2.7zM363.2 574h2.7v5.2h-2.7zM228.6 574h2.7v5.2h-2.7zM55.5 574h5.5v5.2h-5.5zM874.1 574h2.7v5.2h-2.7zM187.4 574h2.7v5.2h-2.7zM931.8 574h2.7v5.2h-2.7zM923.6 574h2.7v5.2h-2.7zM426.3 574h2.7v5.2h-2.7zM115.9 574h5.5v5.2h-5.5zM821.9 574h2.7v5.2h-2.7zM607.6 574h2.7v5.2h-2.7zM448.3 574h8.2v5.2h-8.2zM195.6 574h5.5v5.2h-5.5zM714.8 574h2.7v5.2h-2.7zM393.4 574h2.7v5.2h-2.7zM769.7 574h8.2v5.2h-8.2zM58.2 574h2.7v5.2h-2.7zM665.3 574h8.2v5.2h-8.2zM481.3 574h2.7v5.2h-2.7zM541.7 574h8.2v5.2h-8.2z"/>
<path fill="#4ea8c0" d="M720.3 524.4h2.7v5.2h-2.7zM508.8 524.4h2.7v5.2h-2.7zM519.7 524.4h2.7v5.2h-2.7zM640.6 524.4h2.7v5.2h-2.7zM506 524.4h2.7v5.2h-2.7zM283.5 524.4h5.5v5.2h-5.5zM907.1 524.4h5.5v5.2h-5.5zM701 524.4h2.7v5.2h-2.7zM635.1 524.4h2.7v5.2h-2.7zM209.3 524.4h2.7v5.2h-2.7zM66.5 524.4h8.2v5.2h-8.2zM442.8 524.4h2.7v5.2h-2.7zM802.7 524.4h5.5v5.2h-5.5zM849.4 524.4h2.7v5.2h-2.7zM264.3 524.4h2.7v5.2h-2.7zM330.2 524.4h2.7v5.2h-2.7zM94 524.4h5.5v5.2h-5.5zM604.9 524.4h2.7v5.2h-2.7zM802.7 524.4h2.7v5.2h-2.7zM918.1 524.4h2.7v5.2h-2.7zM83 524.4h8.2v5.2h-8.2zM398.9 524.4h2.7v5.2h-2.7zM151.6 524.4h2.7v5.2h-2.7zM539 524.4h8.2v5.2h-8.2zM247.8 524.4h8.2v5.2h-8.2zM492.3 524.4h2.7v5.2h-2.7zM813.7 524.4h2.7v5.2h-2.7zM948.3 524.4h2.7v5.2h-2.7zM926.3 524.4h2.7v5.2h-2.7z"/>
<path fill="#1e84c0" d="M843.9 544.2h2.7v5.2h-2.7zM113.2 544.2h5.5v5.2h-5.5zM69.2 544.2h5.5v5.2h-5.5zM495 544.2h2.7v5.2h-2.7zM764.2 544.2h2.7v5.2h-2.7zM632.4 544.2h2.7v5.2h-2.7zM838.4 544.2h2.7v5.2h-2.7zM519.7 544.2h8.2v5.2h-8.2zM843.9 544.2h5.5v5.2h-5.5zM470.3 544.2h5.5v5.2h-5.5zM681.8 544.2h2.7v5.2h-2.7zM291.7 544.2h2.7v5.2h-2.7zM272.5 544.2h2.7v5.2h-2.7zM305.5 544.2h2.7v5.2h-2.7zM541.7 544.2h2.7v5.2h-2.7zM291.7 544.2h8.2v5.2h-8.2zM791.7 544.2h5.5v5.2h-5.5z"/>
<path fill="#248aba" d="M887.8 618.6h5.5v5.2h-5.5zM198.3 618.6h5.5v5.2h-5.5zM393.4 618.6h8.2v5.2h-8.2zM368.7 618.6h5.5v5.2h-5.5zM250.5 618.6h2.7v5.2h-2.7zM709.3 618.6h2.7v5.2h-2.7zM275.3 618.6h5.5v5.2h-5.5zM712 618.6h2.7v5.2h-2.7zM758.7 618.6h8.2v5.2h-8.2zM462.1 618.6h2.7v5.2h-2.7zM442.8 618.6h8.2v5.2h-8.2zM236.8 618.6h5.5v5.2h-5.5zM907.1 618.6h5.5v5.2h-5.5zM547.2 618.6h2.7v5.2h-2.7zM525.2 618.6h5.5v5.2h-5.5zM63.7 618.6h2.7v5.2h-2.7zM654.3 618.6h2.7v5.2h-2.7zM673.6 618.6h2.7v5.2h-2.7zM525.2 618.6h2.7v5.2h-2.7zM849.4 618.6h8.2v5.2h-8.2zM945.5 618.6h2.7v5.2h-2.7zM110.4 618.6h8.2v5.2h-8.2zM646.1 618.6h2.7v5.2h-2.7zM176.4 618.6h5.5v5.2h-5.5zM547.2 618.6h2.7v5.2h-2.7zM577.4 618.6h2.7v5.2h-2.7zM242.3 618.6h2.7v5.2h-2.7z"/>
<path fill="#78c6ba" d="M61 509.5h2.7v5.2h-2.7zM585.7 509.5h2.7v5.2h-2.7zM547.2 509.5h8.2v5.2h-8.2zM349.4 509.5h5.5v5.2h-5.5zM610.4 509.5h2.7v5.2h-2.7zM802.7 509.5h5.5v5.2h-5.5zM228.6 509.5h5.5v5.2h-5.5zM874.1 509.5h5.5v5.2h-5.5zM107.7 509.5h2.7v5.2h-2.7zM132.4 509.5h2.7v5.2h-2.7zM819.2 509.5h2.7v5.2h-2.7zM352.2 509.5h5.5v5.2h-5.5zM797.2 509.5h5.5v5.2h-5.5zM824.7 509.5h2.7v5.2h-2.7zM887.8 509.5h8.2v5.2h-8.2zM390.6 509.5h8.2v5.2h-8.2zM854.9 509.5h2.7v5.2h-2.7zM684.6 509.5h2.7v5.2h-2.7zM324.7 509.5h2.7v5.2h-2.7zM291.7 509.5h2.7v5.2h-2.7zM115.9 509.5h2.7v5.2h-2.7zM308.2 509.5h5.5v5.2h-5.5zM714.8 509.5h2.7v5.2h-2.7zM566.4 509.5h2.7v5.2h-2.7zM330.2 509.5h2.7v5.2h-2.7zM236.8 509.5h2.7v5.2h-2.7zM769.7 509.5h2.7v5.2h-2.7zM146.1 509.5h2.7v5.2h-2.7zM316.5 509.5h2.7v5.2h-2.7zM456.6 509.5h2.7v5.2h-2.7zM511.5 509.5h2.7v5.2h-2.7zM668.1 509.5h2.7v5.2h-2.7zM896.1 509.5h5.5v5.2h-5.5zM745 509.5h2.7v5.2h-2.7zM550 509.5h2.7v5.2h-2.7zM102.2 509.5h2.7v5.2h-2.7zM665.3 509.5h2.7v5.2h-2.7zM629.6 509.5h2.7v5.2h-2.7zM245 509.5h2.7v5.2h-2.7zM313.7 509.5h5.5v5.2h-5.5zM110.4 509.5h2.7v5.2h-2.7zM528 509.5h2.7v5.2h-2.7zM253.3 509.5h2.7v5.2h-2.7zM379.6 509.5h2.7v5.2h-2.7zM412.6 509.5h5.5v5.2h-5.5zM819.2 509.5h5.5v5.2h-5.5zM863.1 509.5h2.7v5.2h-2.7zM478.5 509.5h8.2v5.2h-8.2zM832.9 509.5h2.7v5.2h-2.7zM734 509.5h5.5v5.2h-5.5z"/>
<path fill="#248ac0" d="M83 539.3h5.5v5.2h-5.5zM456.6 618.6h5.5v5.2h-5.5zM835.6 539.3h2.7v5.2h-2.7zM912.6 613.6h5.5v5.2h-5.5zM148.9 618.6h2.7v5.2h-2.7zM901.6 539.3h2.7v5.2h-2.7zM379.6 539.3h5.5v5.2h-5.5zM346.7 618.6h2.7v5.2h-2.7zM137.9 539.3h8.2v5.2h-8.2zM907.1 613.6h2.7v5.2h-2.7zM129.7 613.6h2.7v5.2h-2.7zM322 539.3h2.7v5.2h-2.7zM813.7 539.3h5.5v5.2h-5.5zM497.8 613.6h2.7v5.2h-2.7zM571.9 539.3h5.5v5.2h-5.5zM365.9 613.6h2.7v5.2h-2.7zM456.6 618.6h2.7v5.2h-2.7zM909.8 613.6h2.7v5.2h-2.7zM192.8 539.3h2.7v5.2h-2.7zM214.8 539.3h5.5v5.2h-5.5zM651.6 613.6h2.7v5.2h-2.7zM871.4 613.6h2.7v5.2h-2.7zM786.2 539.3h2.7v5.2h-2.7zM473 539.3h2.7v5.2h-2.7zM343.9 613.6h2.7v5.2h-2.7zM368.7 613.6h2.7v5.2h-2.7zM313.7 618.6h8.2v5.2h-8.2zM467.5 618.6h2.7v5.2h-2.7zM91.2 613.6h8.2v5.2h-8.2zM360.4 618.6h2.7v5.2h-2.7zM470.3 539.3h8.2v5.2h-8.2zM868.6 539.3h2.7v5.2h-2.7zM923.6 618.6h5.5v5.2h-5.5zM324.7 539.3h5.5v5.2h-5.5zM690.1 613.6h2.7v5.2h-2.7zM393.4 618.6h2.7v5.2h-2.7zM624.1 613.6h5.5v5.2h-5.5zM687.3 618.6h2.7v5.2h-2.7zM635.1 539.3h5.5v5.2h-5.5zM225.8 613.6h2.7v5.2h-2.7zM195.6 618.6h2.7v5.2h-2.7zM420.8 539.3h2.7v5.2h-2.7zM659.8 539.3h2.7v5.2h-2.7zM739.5 613.6h2.7v5.2h-2.7zM874.1 618.6h5.5v5.2h-5.5zM802.7 618.6h5.5v5.2h-5.5zM695.6 539.3h2.7v5.2h-2.7zM426.3 613.6h2.7v5.2h-2.7zM874.1 618.6h8.2v5.2h-8.2zM909.8 618.6h2.7v5.2h-2.7zM118.7 618.6h5.5v5.2h-5.5zM517 613.6h2.7v5.2h-2.7zM261.5 539.3h8.2v5.2h-8.2zM832.9 539.3h2.7v5.2h-2.7zM484 618.6h2.7v5.2h-2.7zM725.8 618.6h2.7v5.2h-2.7zM209.3 539.3h2.7v5.2h-2.7zM170.9 539.3h2.7v5.2h-2.7zM368.7 613.6h2.7v5.2h-2.7zM486.8 613.6h2.7v5.2h-2.7z"/>
<path fill="#4ea8ba" d="M475.8 623.5h2.7v5.2h-2.7zM300 623.5h2.7v5.2h-2.7zM118.7 623.5h2.7v5.2h-2.7zM431.8 623.5h2.7v5.2h-2.7zM717.5 623.5h2.7v5.2h-2.7zM91.2 623.5h2.7v5.2h-2.7zM289 623.5h5.5v5.2h-5.5zM231.3 623.5h5.5v5.2h-5.5zM962 623.5h5.5v5.2h-5.5zM231.3 623.5h8.2v5.2h-8.2zM687.3 623.5h2.7v5.2h-2.7zM349.4 623.5h8.2v5.2h-8.2zM953.8 623.5h2.7v5.2h-2.7zM495 623.5h2.7v5.2h-2.7zM104.9 623.5h2.7v5.2h-2.7zM489.5 623.5h2.7v5.2h-2.7zM256 623.5h5.5v5.2h-5.5zM80.2 623.5h2.7v5.2h-2.7z"/>
<path fill="#60baba" d="M692.8 519.4h2.7v5.2h-2.7zM599.4 519.4h2.7v5.2h-2.7zM280.8 519.4h2.7v5.2h-2.7zM876.9 519.4h2.7v5.2h-2.7zM876.9 519.4h2.7v5.2h-2.7zM756 519.4h2.7v5.2h-2.7zM451.1 519.4h5.5v5.2h-5.5zM953.8 519.4h2.7v5.2h-2.7zM681.8 519.4h2.7v5.2h-2.7zM808.2 519.4h8.2v5.2h-8.2zM195.6 519.4h2.7v5.2h-2.7zM341.2 519.4h2.7v5.2h-2.7zM717.5 519.4h2.7v5.2h-2.7zM728.5 519.4h2.7v5.2h-2.7zM464.8 519.4h5.5v5.2h-5.5zM217.6 519.4h2.7v5.2h-2.7zM890.6 519.4h2.7v5.2h-2.7zM357.7 519.4h5.5v5.2h-5.5zM398.9 519.4h5.5v5.2h-5.5zM571.9 519.4h5.5v5.2h-5.5zM676.3 519.4h5.5v5.2h-5.5zM942.8 519.4h2.7v5.2h-2.7zM522.5 519.4h5.5v5.2h-5.5zM876.9 519.4h2.7v5.2h-2.7zM115.9 519.4h2.7v5.2h-2.7zM94 519.4h2.7v5.2h-2.7z"/>
<path fill="#3c1e78" d="M291.7 578.9h2.7v5.2h-2.7zM349.4 578.9h8.2v5.2h-8.2zM223.1 578.9h2.7v5.2h-2.7zM393.4 578.9h5.5v5.2h-5.5zM88.5 578.9h8.2v5.2h-8.2zM426.3 578.9h5.5v5.2h-5.5zM83 578.9h5.5v5.2h-5.5zM857.6 578.9h2.7v5.2h-2.7zM313.7 578.9h2.7v5.2h-2.7zM533.5 578.9h2.7v5.2h-2.7zM522.5 578.9h2.7v5.2h-2.7zM91.2 578.9h5.5v5.2h-5.5zM659.8 578.9h2.7v5.2h-2.7zM885.1 578.9h8.2v5.2h-8.2zM695.6 578.9h5.5v5.2h-5.5zM393.4 578.9h2.7v5.2h-2.7zM451.1 578.9h2.7v5.2h-2.7zM486.8 578.9h5.5v5.2h-5.5z"/>
<path fill="#3096c0" d="M945.5 618.6h2.7v5.2h-2.7zM253.3 618.6h8.2v5.2h-8.2zM772.5 618.6h2.7v5.2h-2.7zM607.6 534.3h5.5v5.2h-5.5zM816.4 618.6h2.7v5.2h-2.7zM187.4 534.3h8.2v5.2h-8.2zM234.1 618.6h2.7v5.2h-2.7zM508.8 534.3h2.7v5.2h-2.7zM376.9 618.6h5.5v5.2h-5.5zM692.8 534.3h2.7v5.2h-2.7zM272.5 534.3h2.7v5.2h-2.7zM486.8 618.6h2.7v5.2h-2.7zM670.8 618.6h2.7v5.2h-2.7zM143.4 618.6h5.5v5.2h-5.5zM198.3 534.3h5.5v5.2h-5.5zM508.8 618.6h2.7v5.2h-2.7zM618.6 534.3h2.7v5.2h-2.7zM552.7 534.3h2.7v5.2h-2.7zM541.7 618.6h5.5v5.2h-5.5zM387.9 534.3h2.7v5.2h-2.7zM926.3 534.3h2.7v5.2h-2.7zM517 618.6h2.7v5.2h-2.7zM959.3 534.3h5.5v5.2h-5.5zM74.7 534.3h2.7v5.2h-2.7zM665.3 618.6h2.7v5.2h-2.7zM162.6 618.6h2.7v5.2h-2.7zM102.2 618.6h2.7v5.2h-2.7zM453.8 534.3h2.7v5.2h-2.7zM621.4 618.6h2.7v5.2h-2.7zM124.2 534.3h2.7v5.2h-2.7zM170.9 618.6h8.2v5.2h-8.2zM764.2 534.3h2.7v5.2h-2.7zM261.5 534.3h2.7v5.2h-2.7zM808.2 618.6h2.7v5.2h-2.7zM349.4 534.3h5.5v5.2h-5.5zM615.9 534.3h5.5v5.2h-5.5zM324.7 618.6h2.7v5.2h-2.7zM610.4 534.3h2.7v5.2h-2.7z"/>
<path fill="#3c1872" d="M560.9 593.8h2.7v5.2h-2.7zM91.2 593.8h8.2v5.2h-8.2zM418.1 593.8h2.7v5.2h-2.7zM871.4 593.8h8.2v5.2h-8.2zM838.4 593.8h2.7v5.2h-2.7zM635.1 593.8h2.7v5.2h-2.7zM486.8 593.8h5.5v5.2h-5.5zM959.3 593.8h5.5v5.2h-5.5zM242.3 593.8h2.7v5.2h-2.7zM459.3 593.8h5.5v5.2h-5.5zM517 593.8h5.5v5.2h-5.5zM662.6 593.8h2.7v5.2h-2.7zM582.9 593.8h2.7v5.2h-2.7zM714.8 593.8h2.7v5.2h-2.7zM231.3 593.8h2.7v5.2h-2.7zM412.6 593.8h5.5v5.2h-5.5zM681.8 593.8h8.2v5.2h-8.2zM379.6 593.8h2.7v5.2h-2.7zM788.9 593.8h5.5v5.2h-5.5zM739.5 593.8h5.5v5.2h-5.5zM896.1 593.8h8.2v5.2h-8.2zM338.4 593.8h5.5v5.2h-5.5zM332.9 593.8h2.7v5.2h-2.7zM456.6 593.8h2.7v5.2h-2.7zM695.6 593.8h2.7v5.2h-2.7zM247.8 593.8h2.7v5.2h-2.7zM920.8 593.8h2.7v5.2h-2.7zM102.2 593.8h8.2v5.2h-8.2zM324.7 593.8h2.7v5.2h-2.7zM393.4 593.8h8.2v5.2h-8.2zM104.9 593.8h2.7v5.2h-2.7zM398.9 593.8h8.2v5.2h-8.2zM670.8 593.8h2.7v5.2h-2.7zM640.6 593.8h2.7v5.2h-2.7zM453.8 593.8h2.7v5.2h-2.7zM918.1 593.8h2.7v5.2h-2.7zM190.1 593.8h2.7v5.2h-2.7zM159.9 593.8h2.7v5.2h-2.7zM305.5 593.8h2.7v5.2h-2.7zM571.9 593.8h2.7v5.2h-2.7zM423.6 593.8h2.7v5.2h-2.7zM168.1 593.8h2.7v5.2h-2.7zM887.8 593.8h5.5v5.2h-5.5zM764.2 593.8h2.7v5.2h-2.7zM915.3 593.8h2.7v5.2h-2.7z"/>
<path fill="#3060b4" d="M231.3 559.1h2.7v5.2h-2.7zM918.1 559.1h2.7v5.2h-2.7zM585.7 559.1h5.5v5.2h-5.5zM690.1 559.1h5.5v5.2h-5.5zM808.2 559.1h8.2v5.2h-8.2zM857.6 559.1h2.7v5.2h-2.7zM901.6 559.1h2.7v5.2h-2.7zM335.7 559.1h5.5v5.2h-5.5zM473 559.1h2.7v5.2h-2.7zM717.5 559.1h2.7v5.2h-2.7zM492.3 559.1h2.7v5.2h-2.7zM931.8 559.1h2.7v5.2h-2.7zM330.2 559.1h5.5v5.2h-5.5zM854.9 559.1h8.2v5.2h-8.2zM890.6 559.1h2.7v5.2h-2.7zM819.2 559.1h2.7v5.2h-2.7zM445.6 559.1h2.7v5.2h-2.7zM602.2 559.1h2.7v5.2h-2.7zM830.2 559.1h2.7v5.2h-2.7zM503.3 559.1h2.7v5.2h-2.7zM110.4 559.1h2.7v5.2h-2.7zM220.3 559.1h2.7v5.2h-2.7z"/>
<path fill="#84d2ba" d="M750.5 499.6h2.7v5.2h-2.7zM121.4 499.6h5.5v5.2h-5.5zM959.3 499.6h5.5v5.2h-5.5zM264.3 499.6h2.7v5.2h-2.7zM63.7 499.6h2.7v5.2h-2.7zM657.1 499.6h2.7v5.2h-2.7zM901.6 499.6h2.7v5.2h-2.7zM201.1 499.6h8.2v5.2h-8.2zM753.2 499.6h2.7v5.2h-2.7zM736.8 499.6h2.7v5.2h-2.7zM690.1 499.6h2.7v5.2h-2.7zM352.2 499.6h8.2v5.2h-8.2zM610.4 499.6h5.5v5.2h-5.5zM588.4 499.6h5.5v5.2h-5.5zM242.3 499.6h5.5v5.2h-5.5zM322 499.6h2.7v5.2h-2.7zM657.1 499.6h2.7v5.2h-2.7zM624.1 499.6h2.7v5.2h-2.7zM879.6 499.6h2.7v5.2h-2.7zM231.3 499.6h2.7v5.2h-2.7z"/>
<path fill="#3054a8" d="M311 603.7h2.7v5.2h-2.7zM915.3 603.7h5.5v5.2h-5.5zM74.7 603.7h2.7v5.2h-2.7zM874.1 603.7h2.7v5.2h-2.7zM951 603.7h2.7v5.2h-2.7zM343.9 603.7h2.7v5.2h-2.7zM750.5 603.7h2.7v5.2h-2.7zM52.7 603.7h2.7v5.2h-2.7zM294.5 603.7h2.7v5.2h-2.7zM753.2 603.7h2.7v5.2h-2.7zM192.8 603.7h2.7v5.2h-2.7zM841.1 603.7h2.7v5.2h-2.7zM94 603.7h2.7v5.2h-2.7zM778 603.7h8.2v5.2h-8.2z"/>
<path fill="#48a2c0" d="M555.5 529.4h2.7v5.2h-2.7zM923.6 529.4h2.7v5.2h-2.7zM539 529.4h2.7v5.2h-2.7zM758.7 529.4h5.5v5.2h-5.5zM555.5 529.4h2.7v5.2h-2.7zM783.5 529.4h8.2v5.2h-8.2zM66.5 529.4h5.5v5.2h-5.5zM503.3 529.4h2.7v5.2h-2.7zM148.9 529.4h2.7v5.2h-2.7zM300 529.4h2.7v5.2h-2.7zM489.5 529.4h2.7v5.2h-2.7zM506 529.4h5.5v5.2h-5.5zM132.4 529.4h2.7v5.2h-2.7z"/>
<path fill="#3c247e" d="M706.5 574h2.7v5.2h-2.7zM802.7 574h2.7v5.2h-2.7zM503.3 574h2.7v5.2h-2.7zM541.7 574h5.5v5.2h-5.5zM376.9 574h5.5v5.2h-5.5zM272.5 574h2.7v5.2h-2.7zM363.2 574h8.2v5.2h-8.2zM374.1 574h2.7v5.2h-2.7zM698.3 574h2.7v5.2h-2.7zM539 574h2.7v5.2h-2.7zM192.8 574h8.2v5.2h-8.2zM209.3 574h2.7v5.2h-2.7zM179.1 574h2.7v5.2h-2.7zM964.8 574h2.7v5.2h-2.7zM657.1 574h2.7v5.2h-2.7zM431.8 574h8.2v5.2h-8.2zM118.7 574h2.7v5.2h-2.7zM615.9 574h2.7v5.2h-2.7zM448.3 574h2.7v5.2h-2.7zM893.3 574h2.7v5.2h-2.7zM203.8 574h2.7v5.2h-2.7zM775.2 574h2.7v5.2h-2.7zM423.6 574h2.7v5.2h-2.7zM354.9 574h5.5v5.2h-5.5zM198.3 574h2.7v5.2h-2.7zM151.6 574h2.7v5.2h-2.7zM582.9 574h2.7v5.2h-2.7zM55.5 574h2.7v5.2h-2.7zM382.4 574h2.7v5.2h-2.7zM376.9 574h2.7v5.2h-2.7zM621.4 574h5.5v5.2h-5.5zM110.4 574h5.5v5.2h-5.5zM525.2 574h5.5v5.2h-5.5zM324.7 574h2.7v5.2h-2.7zM302.7 574h2.7v5.2h-2.7zM635.1 574h2.7v5.2h-2.7zM717.5 574h5.5v5.2h-5.5zM959.3 574h5.5v5.2h-5.5z"/>
<path fill="#3c2a8a" d="M519.7 598.7h2.7v5.2h-2.7zM316.5 598.7h2.7v5.2h-2.7zM893.3 598.7h2.7v5.2h-2.7zM665.3 598.7h8.2v5.2h-8.2zM459.3 598.7h2.7v5.2h-2.7zM560.9 598.7h2.7v5.2h-2.7zM234.1 598.7h8.2v5.2h-8.2zM162.6 598.7h2.7v5.2h-2.7zM956.5 598.7h5.5v5.2h-5.5zM926.3 598.7h2.7v5.2h-2.7zM618.6 598.7h2.7v5.2h-2.7zM201.1 598.7h8.2v5.2h-8.2zM923.6 598.7h2.7v5.2h-2.7zM181.9 598.7h8.2v5.2h-8.2zM643.4 598.7h2.7v5.2h-2.7zM788.9 598.7h2.7v5.2h-2.7zM959.3 598.7h5.5v5.2h-5.5zM113.2 598.7h5.5v5.2h-5.5zM808.2 598.7h8.2v5.2h-8.2zM937.3 598.7h2.7v5.2h-2.7zM514.2 598.7h2.7v5.2h-2.7z"/>
<path fill="#3c3090" d="M176.4 569h5.5v5.2h-5.5zM50 569h5.5v5.2h-5.5zM121.4 569h2.7v5.2h-2.7zM742.2 569h2.7v5.2h-2.7zM412.6 569h5.5v5.2h-5.5zM390.6 569h5.5v5.2h-5.5zM585.7 569h2.7v5.2h-2.7zM863.1 569h2.7v5.2h-2.7zM354.9 569h2.7v5.2h-2.7zM687.3 569h5.5v5.2h-5.5zM214.8 569h2.7v5.2h-2.7zM250.5 569h2.7v5.2h-2.7z"/>
<path fill="#8cd3b8" d="M462.1 648.3h2.9v5.3h-2.9zM462.1 643.3h2.9v5.3h-2.9zM462.1 489.7h2.9v5.3h-2.9zM462.1 484.7h2.9v5.3h-2.9zM462.1 479.8h2.9v5.3h-2.9zM464.8 648.3h2.9v5.3h-2.9zM464.8 643.3h2.9v5.3h-2.9zM464.8 494.7h2.9v5.3h-2.9zM464.8 489.7h2.9v5.3h-2.9zM464.8 484.7h2.9v5.3h-2.9zM464.8 479.8h2.9v5.3h-2.9zM467.5 648.3h2.9v5.3h-2.9zM467.5 643.3h2.9v5.3h-2.9zM467.5 489.7h2.9v5.3h-2.9zM467.5 484.7h2.9v5.3h-2.9zM467.5 479.8h2.9v5.3h-2.9zM495 648.3h2.9v5.3h-2.9zM495 643.3h2.9v5.3h-2.9zM495 489.7h2.9v5.3h-2.9zM495 484.7h2.9v5.3h-2.9zM495 479.8h2.9v5.3h-2.9zM497.8 648.3h2.9v5.3h-2.9zM497.8 643.3h2.9v5.3h-2.9zM497.8 489.7h2.9v5.3h-2.9zM497.8 484.7h2.9v5.3h-2.9zM497.8 479.8h2.9v5.3h-2.9zM500.5 648.3h2.9v5.3h-2.9zM500.5 643.3h2.9v5.3h-2.9zM500.5 489.7h2.9v5.3h-2.9zM500.5 484.7h2.9v5.3h-2.9zM500.5 479.8h2.9v5.3h-2.9zM508.8 648.3h2.9v5.3h-2.9zM508.8 643.3h2.9v5.3h-2.9zM508.8 494.7h2.9v5.3h-2.9zM508.8 489.7h2.9v5.3h-2.9zM508.8 484.7h2.9v5.3h-2.9zM508.8 479.8h2.9v5.3h-2.9zM511.5 648.3h2.9v5.3h-2.9zM511.5 643.3h2.9v5.3h-2.9zM511.5 489.7h2.9v5.3h-2.9zM511.5 484.7h2.9v5.3h-2.9zM511.5 479.8h2.9v5.3h-2.9zM514.2 648.3h2.9v5.3h-2.9zM514.2 643.3h2.9v5.3h-2.9zM514.2 489.7h2.9v5.3h-2.9zM514.2 484.7h2.9v5.3h-2.9zM514.2 479.8h2.9v5.3h-2.9z"/>
<path fill="#88d0b9" d="M462.1 638.4h2.9v5.3h-2.9zM464.8 628.5h2.9v5.3h-2.9zM495 638.4h2.9v5.3h-2.9zM497.8 633.4h2.9v5.3h-2.9zM497.8 509.5h2.9v5.3h-2.9zM500.5 509.5h2.9v5.3h-2.9zM514.2 638.4h2.9v5.3h-2.9z"/>
<path fill="#82cdb9" d="M462.1 633.4h2.9v5.3h-2.9z"/>
<path fill="#74c4ba" d="M462.1 628.5h2.9v5.3h-2.9zM464.8 549.2h2.9v5.3h-2.9zM511.5 618.6h2.9v5.3h-2.9z"/>
<path fill="#61b8bb" d="M462.1 623.5h2.9v5.3h-2.9z"/>
<path fill="#4ba9bc" d="M462.1 618.6h2.9v5.3h-2.9zM497.8 603.7h2.9v5.3h-2.9zM500.5 569h2.9v5.3h-2.9z"/>
<path fill="#359bbd" d="M462.1 613.6h2.9v5.3h-2.9zM497.8 593.8h2.9v5.3h-2.9z"/>
<path fill="#278dbd" d="M462.1 608.6h2.9v5.3h-2.9zM462.1 554.1h2.9v5.3h-2.9z"/>
<path fill="#1d80bc" d="M462.1 603.7h2.9v5.3h-2.9z"/>
<path fill="#2270b7" d="M462.1 598.7h2.9v5.3h-2.9z"/>
<path fill="#2b60af" d="M462.1 593.8h2.9v5.3h-2.9z"/>
<path fill="#3156a9" d="M462.1 588.8h2.9v5.3h-2.9z"/>
<path fill="#3154a9" d="M462.1 583.9h2.9v5.3h-2.9z"/>
<path fill="#2d5cad" d="M462.1 578.9h2.9v5.3h-2.9zM495 593.8h2.9v5.3h-2.9zM514.2 593.8h2.9v5.3h-2.9z"/>
<path fill="#256ab5" d="M462.1 574h2.9v5.3h-2.9z"/>
<path fill="#1f76b9" d="M462.1 569h2.9v5.3h-2.9z"/>
<path fill="#1e81bc" d="M462.1 564h2.9v5.3h-2.9z"/>
<path fill="#2388bd" d="M462.1 559.1h2.9v5.3h-2.9zM467.5 603.7h2.9v5.3h-2.9zM467.5 564h2.9v5.3h-2.9z"/>
<path fill="#2c94be" d="M462.1 549.2h2.9v5.3h-2.9zM467.5 608.6h2.9v5.3h-2.9z"/>
<path fill="#389cbd" d="M462.1 544.2h2.9v5.3h-2.9z"/>
<path fill="#41a3bc" d="M462.1 539.3h2.9v5.3h-2.9z"/>
<path fill="#51adbc" d="M462.1 534.3h2.9v5.3h-2.9z"/>
<path fill="#5db5bb" d="M462.1 529.4h2.9v5.3h-2.9zM497.8 549.2h2.9v5.3h-2.9zM500.5 608.6h2.9v5.3h-2.9z"/>
<path fill="#67bcbb" d="M462.1 524.4h2.9v5.3h-2.9zM508.8 549.2h2.9v5.3h-2.9z"/>
<path fill="#70c2ba" d="M462.1 519.4h2.9v5.3h-2.9zM497.8 618.6h2.9v5.3h-2.9z"/>
<path fill="#79c8ba" d="M462.1 514.5h2.9v5.3h-2.9z"/>
<path fill="#81ccb9" d="M462.1 509.5h2.9v5.3h-2.9zM497.8 519.4h2.9v5.3h-2.9zM508.8 524.4h2.9v5.3h-2.9z"/>
<path fill="#87d0b9" d="M462.1 504.6h2.9v5.3h-2.9zM464.8 519.4h2.9v5.3h-2.9zM467.5 504.6h2.9v5.3h-2.9zM508.8 514.5h2.9v5.3h-2.9z"/>
<path fill="#89d1b8" d="M462.1 499.6h2.9v5.3h-2.9zM495 499.6h2.9v5.3h-2.9zM497.8 504.6h2.9v5.3h-2.9zM514.2 499.6h2.9v5.3h-2.9z"/>
<path fill="#8bd2b8" d="M462.1 494.7h2.9v5.3h-2.9zM464.8 638.4h2.9v5.3h-2.9zM464.8 499.6h2.9v5.3h-2.9zM467.5 494.7h2.9v5.3h-2.9zM495 494.7h2.9v5.3h-2.9zM497.8 499.6h2.9v5.3h-2.9zM500.5 499.6h2.9v5.3h-2.9zM508.8 499.6h2.9v5.3h-2.9zM511.5 499.6h2.9v5.3h-2.9zM514.2 494.7h2.9v5.3h-2.9z"/>
<path fill="#8ad1b8" d="M464.8 633.4h2.9v5.3h-2.9zM464.8 509.5h2.9v5.3h-2.9zM467.5 499.6h2.9v5.3h-2.9zM500.5 504.6h2.9v5.3h-2.9zM511.5 504.6h2.9v5.3h-2.9z"/>
<path fill="#84ceb9" d="M464.8 623.5h2.9v5.3h-2.9zM467.5 633.4h2.9v5.3h-2.9zM500.5 628.5h2.9v5.3h-2.9zM508.8 519.4h2.9v5.3h-2.9z"/>
<path fill="#7fcbba" d="M464.8 618.6h2.9v5.3h-2.9zM500.5 524.4h2.9v5.3h-2.9zM508.8 623.5h2.9v5.3h-2.9z"/>
<path fill="#78c7ba" d="M464.8 613.6h2.9v5.3h-2.9zM464.8 544.2h2.9v5.3h-2.9zM495 514.5h2.9v5.3h-2.9zM497.8 529.4h2.9v5.3h-2.9zM508.8 534.3h2.9v5.3h-2.9zM514.2 514.5h2.9v5.3h-2.9z"/>
<path fill="#71c2ba" d="M464.8 608.6h2.9v5.3h-2.9zM464.8 554.1h2.9v5.3h-2.9z"/>
<path fill="#6bbebb" d="M464.8 603.7h2.9v5.3h-2.9zM464.8 564h2.9v5.3h-2.9z"/>
<path fill="#63babb" d="M464.8 598.7h2.9v5.3h-2.9zM497.8 613.6h2.9v5.3h-2.9z"/>
<path fill="#5cb4bb" d="M464.8 593.8h2.9v5.3h-2.9zM495 529.4h2.9v5.3h-2.9zM514.2 529.4h2.9v5.3h-2.9z"/>
<path fill="#57b2bb" d="M464.8 588.8h2.9v5.3h-2.9zM497.8 608.6h2.9v5.3h-2.9z"/>
<path fill="#57b1bb" d="M464.8 583.9h2.9v5.3h-2.9zM467.5 534.3h2.9v5.3h-2.9zM497.8 554.1h2.9v5.3h-2.9z"/>
<path fill="#5ab3bb" d="M464.8 578.9h2.9v5.3h-2.9z"/>
<path fill="#60b8bb" d="M464.8 574h2.9v5.3h-2.9z"/>
<path fill="#66bbbb" d="M464.8 569h2.9v5.3h-2.9zM467.5 623.5h2.9v5.3h-2.9zM495 524.4h2.9v5.3h-2.9zM514.2 524.4h2.9v5.3h-2.9z"/>
<path fill="#6ec1bb" d="M464.8 559.1h2.9v5.3h-2.9z"/>
<path fill="#7cc9ba" d="M464.8 539.3h2.9v5.3h-2.9zM467.5 514.5h2.9v5.3h-2.9zM500.5 623.5h2.9v5.3h-2.9zM511.5 529.4h2.9v5.3h-2.9z"/>
<path fill="#80ccb9" d="M464.8 534.3h2.9v5.3h-2.9zM495 509.5h2.9v5.3h-2.9zM514.2 509.5h2.9v5.3h-2.9z"/>
<path fill="#83cdb9" d="M464.8 529.4h2.9v5.3h-2.9zM467.5 509.5h2.9v5.3h-2.9zM497.8 628.5h2.9v5.3h-2.9zM500.5 519.4h2.9v5.3h-2.9zM511.5 519.4h2.9v5.3h-2.9z"/>
<path fill="#86cfb9" d="M464.8 524.4h2.9v5.3h-2.9zM497.8 514.5h2.9v5.3h-2.9zM500.5 514.5h2.9v5.3h-2.9zM508.8 628.5h2.9v5.3h-2.9z"/>
<path fill="#88d1b9" d="M464.8 514.5h2.9v5.3h-2.9zM467.5 638.4h2.9v5.3h-2.9zM500.5 633.4h2.9v5.3h-2.9zM511.5 509.5h2.9v5.3h-2.9z"/>
<path fill="#8ad2b8" d="M464.8 504.6h2.9v5.3h-2.9zM497.8 638.4h2.9v5.3h-2.9zM500.5 638.4h2.9v5.3h-2.9zM508.8 638.4h2.9v5.3h-2.9zM508.8 504.6h2.9v5.3h-2.9zM511.5 638.4h2.9v5.3h-2.9z"/>
<path fill="#77c6ba" d="M467.5 628.5h2.9v5.3h-2.9zM511.5 534.3h2.9v5.3h-2.9z"/>
<path fill="#52aebc" d="M467.5 618.6h2.9v5.3h-2.9zM497.8 559.1h2.9v5.3h-2.9zM500.5 603.7h2.9v5.3h-2.9zM500.5 564h2.9v5.3h-2.9zM508.8 569h2.9v5.3h-2.9z"/>
<path fill="#3da0bd" d="M467.5 613.6h2.9v5.3h-2.9zM500.5 593.8h2.9v5.3h-2.9zM511.5 578.9h2.9v5.3h-2.9z"/>
<path fill="#1e7abb" d="M467.5 598.7h2.9v5.3h-2.9z"/>
<path fill="#246cb5" d="M467.5 593.8h2.9v5.3h-2.9z"/>
<path fill="#2963b1" d="M467.5 588.8h2.9v5.3h-2.9z"/>
<path fill="#2a61b0" d="M467.5 583.9h2.9v5.3h-2.9z"/>
<path fill="#2668b4" d="M467.5 578.9h2.9v5.3h-2.9z"/>
<path fill="#2074b8" d="M467.5 574h2.9v5.3h-2.9z"/>
<path fill="#1d7fbc" d="M467.5 569h2.9v5.3h-2.9z"/>
<path fill="#288fbe" d="M467.5 559.1h2.9v5.3h-2.9z"/>
<path fill="#2b93be" d="M467.5 554.1h2.9v5.3h-2.9z"/>
<path fill="#3399bd" d="M467.5 549.2h2.9v5.3h-2.9zM495 613.6h2.9v5.3h-2.9zM497.8 578.9h2.9v5.3h-2.9zM514.2 613.6h2.9v5.3h-2.9z"/>
<path fill="#3fa1bd" d="M467.5 544.2h2.9v5.3h-2.9zM495 539.3h2.9v5.3h-2.9zM508.8 588.8h2.9v5.3h-2.9zM511.5 593.8h2.9v5.3h-2.9zM514.2 539.3h2.9v5.3h-2.9z"/>
<path fill="#48a7bc" d="M467.5 539.3h2.9v5.3h-2.9z"/>
<path fill="#62b9bb" d="M467.5 529.4h2.9v5.3h-2.9zM500.5 549.2h2.9v5.3h-2.9zM508.8 554.1h2.9v5.3h-2.9z"/>
<path fill="#6bbfbb" d="M467.5 524.4h2.9v5.3h-2.9z"/>
<path fill="#73c4ba" d="M467.5 519.4h2.9v5.3h-2.9zM495 628.5h2.9v5.3h-2.9zM500.5 618.6h2.9v5.3h-2.9zM514.2 628.5h2.9v5.3h-2.9z"/>
<path fill="#82ccb9" d="M495 633.4h2.9v5.3h-2.9zM514.2 633.4h2.9v5.3h-2.9z"/>
<path fill="#60b7bb" d="M495 623.5h2.9v5.3h-2.9zM514.2 623.5h2.9v5.3h-2.9z"/>
<path fill="#49a8bc" d="M495 618.6h2.9v5.3h-2.9zM511.5 598.7h2.9v5.3h-2.9zM514.2 618.6h2.9v5.3h-2.9z"/>
<path fill="#268bbd" d="M495 608.6h2.9v5.3h-2.9zM514.2 608.6h2.9v5.3h-2.9z"/>
<path fill="#1c7ebc" d="M495 603.7h2.9v5.3h-2.9zM495 564h2.9v5.3h-2.9zM514.2 603.7h2.9v5.3h-2.9zM514.2 564h2.9v5.3h-2.9z"/>
<path fill="#246db6" d="M495 598.7h2.9v5.3h-2.9zM514.2 598.7h2.9v5.3h-2.9z"/>
<path fill="#3352a7" d="M495 588.8h2.9v5.3h-2.9zM514.2 588.8h2.9v5.3h-2.9z"/>
<path fill="#3450a6" d="M495 583.9h2.9v5.3h-2.9zM514.2 583.9h2.9v5.3h-2.9z"/>
<path fill="#3058aa" d="M495 578.9h2.9v5.3h-2.9zM514.2 578.9h2.9v5.3h-2.9z"/>
<path fill="#2767b3" d="M495 574h2.9v5.3h-2.9zM514.2 574h2.9v5.3h-2.9z"/>
<path fill="#2173b8" d="M495 569h2.9v5.3h-2.9zM514.2 569h2.9v5.3h-2.9z"/>
<path fill="#2286bd" d="M495 559.1h2.9v5.3h-2.9zM514.2 559.1h2.9v5.3h-2.9z"/>
<path fill="#258bbd" d="M495 554.1h2.9v5.3h-2.9zM514.2 554.1h2.9v5.3h-2.9z"/>
<path fill="#2a92be" d="M495 549.2h2.9v5.3h-2.9zM514.2 549.2h2.9v5.3h-2.9z"/>
<path fill="#359abd" d="M495 544.2h2.9v5.3h-2.9zM514.2 544.2h2.9v5.3h-2.9z"/>
<path fill="#4facbc" d="M495 534.3h2.9v5.3h-2.9zM514.2 534.3h2.9v5.3h-2.9z"/>
<path fill="#6fc1ba" d="M495 519.4h2.9v5.3h-2.9zM511.5 539.3h2.9v5.3h-2.9zM514.2 519.4h2.9v5.3h-2.9z"/>
<path fill="#87cfb9" d="M495 504.6h2.9v5.3h-2.9zM511.5 514.5h2.9v5.3h-2.9zM514.2 504.6h2.9v5.3h-2.9z"/>
<path fill="#7ac8ba" d="M497.8 623.5h2.9v5.3h-2.9z"/>
<path fill="#40a2bc" d="M497.8 598.7h2.9v5.3h-2.9z"/>
<path fill="#3096be" d="M497.8 588.8h2.9v5.3h-2.9z"/>
<path fill="#2f96be" d="M497.8 583.9h2.9v5.3h-2.9z"/>
<path fill="#3c9fbd" d="M497.8 574h2.9v5.3h-2.9z"/>
<path fill="#44a4bc" d="M497.8 569h2.9v5.3h-2.9zM508.8 593.8h2.9v5.3h-2.9z"/>
<path fill="#4caabc" d="M497.8 564h2.9v5.3h-2.9z"/>
<path fill="#65babb" d="M497.8 544.2h2.9v5.3h-2.9z"/>
<path fill="#6abebb" d="M497.8 539.3h2.9v5.3h-2.9zM511.5 544.2h2.9v5.3h-2.9z"/>
<path fill="#73c3ba" d="M497.8 534.3h2.9v5.3h-2.9z"/>
<path fill="#7dcaba" d="M497.8 524.4h2.9v5.3h-2.9zM508.8 529.4h2.9v5.3h-2.9zM511.5 623.5h2.9v5.3h-2.9z"/>
<path fill="#8bd3b8" d="M497.8 494.7h2.9v5.3h-2.9zM500.5 494.7h2.9v5.3h-2.9zM511.5 494.7h2.9v5.3h-2.9z"/>
<path fill="#68bcbb" d="M500.5 613.6h2.9v5.3h-2.9z"/>
<path fill="#46a6bc" d="M500.5 598.7h2.9v5.3h-2.9z"/>
<path fill="#379cbd" d="M500.5 588.8h2.9v5.3h-2.9z"/>
<path fill="#369bbd" d="M500.5 583.9h2.9v5.3h-2.9z"/>
<path fill="#3a9ebd" d="M500.5 578.9h2.9v5.3h-2.9zM511.5 588.8h2.9v5.3h-2.9z"/>
<path fill="#42a3bc" d="M500.5 574h2.9v5.3h-2.9zM508.8 578.9h2.9v5.3h-2.9z"/>
<path fill="#59b2bb" d="M500.5 559.1h2.9v5.3h-2.9z"/>
<path fill="#5cb5bb" d="M500.5 554.1h2.9v5.3h-2.9z"/>
<path fill="#69bdbb" d="M500.5 544.2h2.9v5.3h-2.9zM511.5 613.6h2.9v5.3h-2.9z"/>
<path fill="#6ec0bb" d="M500.5 539.3h2.9v5.3h-2.9z"/>
<path fill="#76c5ba" d="M500.5 534.3h2.9v5.3h-2.9z"/>
<path fill="#7bc8ba" d="M500.5 529.4h2.9v5.3h-2.9z"/>
<path fill="#89d1b9" d="M508.8 633.4h2.9v5.3h-2.9zM508.8 509.5h2.9v5.3h-2.9zM511.5 633.4h2.9v5.3h-2.9z"/>
<path fill="#76c6ba" d="M508.8 618.6h2.9v5.3h-2.9z"/>
<path fill="#6cbfbb" d="M508.8 613.6h2.9v5.3h-2.9z"/>
<path fill="#63b9bb" d="M508.8 608.6h2.9v5.3h-2.9z"/>
<path fill="#59b3bb" d="M508.8 603.7h2.9v5.3h-2.9zM508.8 564h2.9v5.3h-2.9z"/>
<path fill="#4eabbc" d="M508.8 598.7h2.9v5.3h-2.9z"/>
<path fill="#3ea1bd" d="M508.8 583.9h2.9v5.3h-2.9z"/>
<path fill="#4aa8bc" d="M508.8 574h2.9v5.3h-2.9z"/>
<path fill="#5fb6bb" d="M508.8 559.1h2.9v5.3h-2.9z"/>
<path fill="#6dc0bb" d="M508.8 544.2h2.9v5.3h-2.9z"/>
<path fill="#72c3ba" d="M508.8 539.3h2.9v5.3h-2.9z"/>
<path fill="#85ceb9" d="M511.5 628.5h2.9v5.3h-2.9z"/>
<path fill="#5fb7bb" d="M511.5 608.6h2.9v5.3h-2.9z"/>
<path fill="#54b0bc" d="M511.5 603.7h2.9v5.3h-2.9z"/>
<path fill="#399dbd" d="M511.5 583.9h2.9v5.3h-2.9z"/>
<path fill="#44a5bc" d="M511.5 574h2.9v5.3h-2.9z"/>
<path fill="#4dabbc" d="M511.5 569h2.9v5.3h-2.9z"/>
<path fill="#55b0bc" d="M511.5 564h2.9v5.3h-2.9z"/>
<path fill="#5bb4bb" d="M511.5 559.1h2.9v5.3h-2.9z"/>
<path fill="#5eb6bb" d="M511.5 554.1h2.9v5.3h-2.9z"/>
<path fill="#64babb" d="M511.5 549.2h2.9v5.3h-2.9z"/>
<path fill="#80cbba" d="M511.5 524.4h2.9v5.3h-2.9z"/>
<path fill="#fff" d="M80.2 479.5h2.8v5.3h-2.8zM107.6 479.5h2.8v5.3h-2.8zM115.9 479.5h5.6v5.3h-5.6zM126.9 479.5h8.3v5.3h-8.3zM159.8 479.5h2.8v10.2h-2.8zM170.8 479.5h5.6v5.3h-5.6zM187.3 479.5h2.8v5.3h-2.8zM253.2 479.5h2.8v5.3h-2.8zM258.7 479.5h13.8v5.3h-13.8zM294.4 479.5h2.8v5.3h-2.8zM302.7 479.5h2.8v5.3h-2.8zM310.9 479.5h5.6v5.3h-5.6zM346.6 479.5h2.8v5.3h-2.8zM352.1 479.5h2.8v5.3h-2.8zM365.9 479.5h5.6v5.3h-5.6zM379.6 479.5h2.8v5.3h-2.8zM429 479.5h2.8v5.3h-2.8zM434.5 479.5h5.6v5.3h-5.6zM462 479.5h2.8v5.3h-2.8zM464.8 479.5h2.8v15.2h-2.8zM467.5 479.5h2.8v5.3h-2.8zM473 479.5h2.8v10.2h-2.8zM475.7 479.5h8.3v5.3h-8.3zM486.7 479.5h5.6v5.3h-5.6zM497.7 479.5h5.6v10.2h-5.6zM508.7 479.5h2.8v5.3h-2.8zM511.4 479.5h2.8v10.2h-2.8zM514.2 479.5h5.6v5.3h-5.6zM522.4 479.5h5.6v5.3h-5.6zM538.9 479.5h2.8v5.3h-2.8zM547.2 479.5h27.6v5.3h-27.6zM582.9 479.5h8.3v5.3h-8.3zM604.8 479.5h8.3v5.3h-8.3zM618.6 479.5h5.6v5.3h-5.6zM629.6 479.5h2.8v5.3h-2.8zM640.6 479.5h5.6v5.3h-5.6zM654.3 479.5h2.8v5.3h-2.8zM659.8 479.5h13.8v5.3h-13.8zM676.3 479.5h11.1v5.3h-11.1zM695.5 479.5h5.6v5.3h-5.6zM703.7 479.5h2.8v5.3h-2.8zM709.2 479.5h2.8v5.3h-2.8zM712 479.5h2.8v10.2h-2.8zM717.5 479.5h2.8v5.3h-2.8zM731.2 479.5h22.1v5.3h-22.1zM758.7 479.5h2.8v5.3h-2.8zM766.9 479.5h2.8v5.3h-2.8zM775.2 479.5h13.8v5.3h-13.8zM791.6 479.5h19.3v5.3h-19.3zM819.1 479.5h11.1v5.3h-11.1zM835.6 479.5h5.6v5.3h-5.6zM841.1 479.5h2.8v10.2h-2.8zM857.6 479.5h2.8v5.3h-2.8zM868.6 479.5h8.3v5.3h-8.3zM879.6 479.5h5.6v5.3h-5.6zM893.3 479.5h5.6v5.3h-5.6zM904.3 479.5h19.3v5.3h-19.3zM934.5 479.5h8.3v5.3h-8.3zM948.2 479.5h5.6v5.3h-5.6zM964.7 479.5h8.3v5.3h-8.3zM52.7 648.3h11.1v5.8h-11.1zM74.7 648.3h8.3v5.8h-8.3zM85.7 648.3h2.8v5.8h-2.8zM91.2 648.3h2.8v5.8h-2.8zM99.4 648.3h5.6v5.8h-5.6zM113.1 648.3h8.3v5.8h-8.3zM126.9 648.3h2.8v5.8h-2.8zM135.1 648.3h2.8v5.8h-2.8zM146.1 648.3h2.8v5.8h-2.8zM184.6 648.3h13.8v5.8h-13.8zM201 648.3h5.6v5.8h-5.6zM209.3 648.3h5.6v5.8h-5.6zM217.5 648.3h2.8v5.8h-2.8zM242.2 648.3h2.8v5.8h-2.8zM250.5 648.3h5.6v5.8h-5.6zM258.7 648.3h2.8v5.8h-2.8zM267 648.3h11.1v5.8h-11.1zM291.7 648.3h8.3v5.8h-8.3zM308.2 648.3h2.8v5.8h-2.8zM313.7 648.3h2.8v5.8h-2.8zM330.1 648.3h19.3v5.8h-19.3zM352.1 648.3h8.3v5.8h-8.3zM363.1 648.3h5.6v5.8h-5.6zM371.4 648.3h2.8v5.8h-2.8zM382.3 648.3h8.3v5.8h-8.3zM396.1 648.3h5.6v5.8h-5.6zM415.3 648.3h2.8v5.8h-2.8zM420.8 648.3h2.8v5.8h-2.8zM434.5 648.3h5.6v5.8h-5.6zM442.8 648.3h11.1v5.8h-11.1zM456.5 648.3h13.8v5.8h-13.8zM475.7 648.3h2.8v5.8h-2.8zM486.7 648.3h11.1v5.8h-11.1zM511.4 648.3h5.6v5.8h-5.6zM522.4 648.3h13.8v5.8h-13.8zM538.9 648.3h5.6v5.8h-5.6zM547.2 648.3h5.6v5.8h-5.6zM571.9 648.3h5.6v5.8h-5.6zM582.9 648.3h2.8v5.8h-2.8zM588.4 648.3h27.6v5.8h-27.6zM648.8 648.3h2.8v5.8h-2.8zM659.8 648.3h2.8v5.8h-2.8zM670.8 648.3h2.8v5.8h-2.8zM684.5 648.3h8.3v5.8h-8.3zM698.2 648.3h2.8v5.8h-2.8zM703.7 648.3h5.6v5.8h-5.6zM712 648.3h5.6v5.8h-5.6zM720.2 648.3h2.8v5.8h-2.8zM725.7 648.3h38.6v5.8h-38.6zM772.4 648.3h5.6v5.8h-5.6zM783.4 648.3h2.8v5.8h-2.8zM791.6 648.3h2.8v5.8h-2.8zM799.9 648.3h13.8v5.8h-13.8zM819.1 648.3h2.8v5.8h-2.8zM830.1 648.3h2.8v5.8h-2.8zM835.6 648.3h2.8v5.8h-2.8zM841.1 648.3h2.8v5.8h-2.8zM860.3 648.3h8.3v5.8h-8.3zM879.6 648.3h8.3v5.8h-8.3zM901.5 648.3h5.6v5.8h-5.6zM915.3 648.3h2.8v5.8h-2.8zM923.5 648.3h2.8v5.8h-2.8zM931.7 648.3h2.8v5.8h-2.8zM940 648.3h5.6v5.8h-5.6zM951 648.3h5.6v5.8h-5.6zM967.5 648.3h2.8v5.8h-2.8zM184.6 643.3h2.7v5.2h-2.7zM198.3 643.3h2.7v5.2h-2.7zM371.4 643.3h2.7v5.2h-2.7zM374.1 643.3h2.7v5.2h-2.7zM489.5 643.3h2.7v5.2h-2.7zM681.8 643.3h2.7v5.2h-2.7zM684.6 643.3h2.7v5.2h-2.7zM956.5 643.3h2.7v5.2h-2.7zM804.8 470h11.4v190h-11.4z"/>
<path fill="#8cd3b8" d="M94 474.8h5.5v5.2h-5.5zM104.9 474.8h2.7v5.2h-2.7zM371.4 474.8h2.7v5.2h-2.7zM407.1 474.8h5.5v5.2h-5.5zM431.8 474.8h2.7v5.2h-2.7zM519.7 474.8h2.7v5.2h-2.7zM591.2 474.8h2.7v5.2h-2.7zM701 474.8h2.7v5.2h-2.7zM706.5 474.8h2.7v5.2h-2.7zM849.4 474.8h2.7v5.2h-2.7zM865.9 474.8h2.7v5.2h-2.7zM85.2 445.1h2.7v5h-2.7zM107.2 460h2.7v5h-2.7zM148.3 464.9h2.7v5h-2.7zM324.8 464.9h2.7v5h-2.7zM503.2 469.9h2.7v5h-2.7zM816.3 460h2.7v5h-2.7z"/>
<path fill="#e1e4ee" d="M804.8 504h11.4v1h-11.4zM804.8 554h11.4v1h-11.4zM804.8 603h11.4v1h-11.4z"/>
<rect x="50" y="653" width="924" height="1" fill="#e1e4ec"/>
<rect x="65.0" y="653" width="1" height="5" fill="#ccd0da"/>
<rect x="163.8" y="653" width="1" height="5" fill="#ccd0da"/>
<rect x="262.6" y="653" width="1" height="5" fill="#ccd0da"/>
<rect x="361.4" y="653" width="1" height="5" fill="#ccd0da"/>
<rect x="460.2" y="653" width="1" height="5" fill="#ccd0da"/>
<rect x="559.0" y="653" width="1" height="5" fill="#ccd0da"/>
<rect x="657.8" y="653" width="1" height="5" fill="#ccd0da"/>
<rect x="756.6" y="653" width="1" height="5" fill="#ccd0da"/>
<rect x="855.4" y="653" width="1" height="5" fill="#ccd0da"/>
<rect x="1014" y="414" width="8" height="8" fill="#3b2a85"/>
<rect x="1014" y="426" width="8" height="8" fill="#2f55a4"/>
<rect x="1014" y="438" width="8" height="8" fill="#1c7ab5"/>
<rect x="1014" y="450" width="8" height="8" fill="#3fa0b8"/>
<rect x="1014" y="462" width="8" height="8" fill="#8cd3b8"/>
<rect x="517.8" y="815.3" width="247.5" height="1" fill="#d9dce3"/>
<rect x="517.80" y="814.71" width="4.1" height="1.09" fill="#a77fcd"/>
<rect x="523.72" y="814.71" width="4.1" height="1.09" fill="#a77fcd"/>
<rect x="529.65" y="814.71" width="4.1" height="1.09" fill="#a77fcd"/>
<rect x="535.57" y="814.43" width="4.1" height="1.37" fill="#a77fcd"/>
<rect x="541.50" y="814.16" width="4.1" height="1.64" fill="#a77fcd"/>
<rect x="547.42" y="813.89" width="4.1" height="1.91" fill="#a77fcd"/>
<rect x="553.35" y="813.07" width="4.1" height="2.73" fill="#a77fcd"/>
<rect x="559.27" y="812.25" width="4.1" height="3.55" fill="#a77fcd"/>
<rect x="565.20" y="811.15" width="4.1" height="4.65" fill="#a77fcd"/>
<rect x="571.12" y="809.51" width="4.1" height="6.29" fill="#a77fcd"/>
<rect x="577.05" y="807.87" width="4.1" height="7.93" fill="#a77fcd"/>
<rect x="582.97" y="805.96" width="4.1" height="9.84" fill="#a77fcd"/>
<rect x="588.90" y="803.77" width="4.1" height="12.03" fill="#a77fcd"/>
<rect x="594.82" y="801.85" width="4.1" height="13.95" fill="#a77fcd"/>
<rect x="600.75" y="800.21" width="4.1" height="15.59" fill="#a77fcd"/>
<rect x="606.67" y="798.85" width="4.1" height="16.95" fill="#a77fcd"/>
<rect x="612.60" y="798.03" width="4.1" height="17.77" fill="#a77fcd"/>
<rect x="618.52" y="797.75" width="4.1" height="18.05" fill="#a77fcd"/>
<rect x="624.45" y="797.75" width="4.1" height="18.05" fill="#a77fcd"/>
<rect x="630.38" y="798.03" width="4.1" height="17.77" fill="#a77fcd"/>
<rect x="636.30" y="798.85" width="4.1" height="16.95" fill="#a77fcd"/>
<rect x="642.22" y="800.21" width="4.1" height="15.59" fill="#a77fcd"/>
<rect x="648.15" y="801.85" width="4.1" height="13.95" fill="#a77fcd"/>
<rect x="654.07" y="804.04" width="4.1" height="11.76" fill="#a77fcd"/>
<rect x="660.00" y="805.96" width="4.1" height="9.84" fill="#a77fcd"/>
<rect x="665.92" y="807.87" width="4.1" height="7.93" fill="#a77fcd"/>
<rect x="671.85" y="809.51" width="4.1" height="6.29" fill="#a77fcd"/>
<rect x="677.77" y="810.88" width="4.1" height="4.92" fill="#a77fcd"/>
<rect x="683.70" y="811.97" width="4.1" height="3.83" fill="#a77fcd"/>
<rect x="689.62" y="812.79" width="4.1" height="3.01" fill="#a77fcd"/>
<rect x="695.55" y="813.61" width="4.1" height="2.19" fill="#a77fcd"/>
<rect x="701.47" y="813.89" width="4.1" height="1.91" fill="#a77fcd"/>
<rect x="707.40" y="814.16" width="4.1" height="1.64" fill="#a77fcd"/>
<rect x="713.32" y="814.43" width="4.1" height="1.37" fill="#a77fcd"/>
<rect x="719.25" y="814.71" width="4.1" height="1.09" fill="#a77fcd"/>
<rect x="725.17" y="814.71" width="4.1" height="1.09" fill="#a77fcd"/>
<rect x="731.10" y="814.71" width="4.1" height="1.09" fill="#a77fcd"/>
<rect x="737.02" y="814.71" width="4.1" height="1.09" fill="#a77fcd"/>
<rect x="742.95" y="814.71" width="4.1" height="1.09" fill="#a77fcd"/>
<rect x="517.8" y="849.2" width="247.5" height="1" fill="#d9dce3"/>
<rect x="517.80" y="848.70" width="4.1" height="1.00" fill="#d6813f"/>
<rect x="523.72" y="848.70" width="4.1" height="1.00" fill="#d6813f"/>
<rect x="529.65" y="848.70" width="4.1" height="1.00" fill="#d6813f"/>
<rect x="535.57" y="848.07" width="4.1" height="1.63" fill="#d6813f"/>
<rect x="541.50" y="846.95" width="4.1" height="2.75" fill="#d6813f"/>
<rect x="547.42" y="845.34" width="4.1" height="4.36" fill="#d6813f"/>
<rect x="553.35" y="843.23" width="4.1" height="6.47" fill="#d6813f"/>
<rect x="559.27" y="840.71" width="4.1" height="8.99" fill="#d6813f"/>
<rect x="565.20" y="838.00" width="4.1" height="11.70" fill="#d6813f"/>
<rect x="571.12" y="835.45" width="4.1" height="14.25" fill="#d6813f"/>
<rect x="577.05" y="833.45" width="4.1" height="16.25" fill="#d6813f"/>
<rect x="582.97" y="832.34" width="4.1" height="17.36" fill="#d6813f"/>
<rect x="588.90" y="832.34" width="4.1" height="17.36" fill="#d6813f"/>
<rect x="594.82" y="833.45" width="4.1" height="16.25" fill="#d6813f"/>
<rect x="600.75" y="835.45" width="4.1" height="14.25" fill="#d6813f"/>
<rect x="606.67" y="838.00" width="4.1" height="11.70" fill="#d6813f"/>
<rect x="612.60" y="840.71" width="4.1" height="8.99" fill="#d6813f"/>
<rect x="618.52" y="843.23" width="4.1" height="6.47" fill="#d6813f"/>
<rect x="624.45" y="845.34" width="4.1" height="4.36" fill="#d6813f"/>
<rect x="630.38" y="846.95" width="4.1" height="2.75" fill="#d6813f"/>
<rect x="636.30" y="848.07" width="4.1" height="1.63" fill="#d6813f"/>
<rect x="642.22" y="848.70" width="4.1" height="1.00" fill="#d6813f"/>
<rect x="648.15" y="848.70" width="4.1" height="1.00" fill="#d6813f"/>
<rect x="654.07" y="848.70" width="4.1" height="1.00" fill="#d6813f"/>
<rect x="660.00" y="848.70" width="4.1" height="1.00" fill="#d6813f"/>
<rect x="665.92" y="848.70" width="4.1" height="1.00" fill="#d6813f"/>
<rect x="671.85" y="848.70" width="4.1" height="1.00" fill="#d6813f"/>
<rect x="689.62" y="848.70" width="4.1" height="1.00" fill="#d6813f"/>
<rect x="760.72" y="848.70" width="4.1" height="1.00" fill="#d6813f"/>
</svg>
<svg width="1024" height="859" viewBox="0 0 1024 859">
<circle cx="947.8" cy="16.7" r="5.7" fill="none" stroke="#555c66" stroke-width="1.1"/><path d="M945.60 15.40c0-1.3 1-2.1 2.2-2.1s2.2 0.8 2.2 2c0 1.5-2.2 1.6-2.2 3.3" fill="none" stroke="#555c66" stroke-width="1.1"/><circle cx="947.8" cy="20.0" r="0.7" fill="#555c66"/>
<circle cx="147.5" cy="220.4" r="5.8" fill="none" stroke="#555c66" stroke-width="1.1"/><path d="M145.30 219.10c0-1.3 1-2.1 2.2-2.1s2.2 0.8 2.2 2c0 1.5-2.2 1.6-2.2 3.3" fill="none" stroke="#555c66" stroke-width="1.1"/><circle cx="147.5" cy="223.7" r="0.7" fill="#555c66"/>
<circle cx="968.6" cy="16.8" r="1.1" fill="#4a525d"/>
<circle cx="973.6" cy="16.8" r="1.1" fill="#4a525d"/>
<circle cx="978.6" cy="16.8" r="1.1" fill="#4a525d"/>
<path d="M985.8 217.9l5.75 5.8 5.75-5.8" fill="none" stroke="#555d68" stroke-width="1.2"/>
<circle cx="705" cy="285.8" r="7.6" fill="none" stroke="#4a525d" stroke-width="1.3"/>
<path d="M705 281v5.3h4.7" fill="none" stroke="#4a525d" stroke-width="1.3"/>
<path d="M908.8 283.2l6.4 6.3 6.4-6.3" fill="none" stroke="#4a525d" stroke-width="1.3"/>
<path d="M951.6 285.8l7-7.3v3.9h5.8v6.9h-5.8v3.9z" fill="none" stroke="#2a323d" stroke-width="1.5" stroke-linejoin="round"/>
<path d="M966.6 281.6v8.4" fill="none" stroke="#2a323d" stroke-width="1.5"/>
<path d="M1011.3 285.8l-7-7.3v3.9h-5.8v6.9h5.8v3.9z" fill="none" stroke="#c9cdd4" stroke-width="1.3" stroke-linejoin="round"/>
<path d="M996 281.6v8.4" fill="none" stroke="#c9cdd4" stroke-width="1.3"/>
<path d="M887.8 325.6h13a1 1 0 0 1 1 1v9.4a1 1 0 0 1-1 1h-10.3l-3.7 2.6v-13a1 1 0 0 1 1-1z" fill="none" stroke="#4a525d" stroke-width="1.3" stroke-linejoin="round"/>
<path d="M949.7 324.4v12.2M943.8 331l5.9 5.9 5.9-5.9M943 339.8h13.6" fill="none" stroke="#4a525d" stroke-width="1.3"/>
<path d="M1013.24 336.03L1013.03 336.40L1012.73 336.73L1012.34 336.98L1011.60 336.98L1010.89 336.92L1010.50 337.05L1010.19 337.23L1009.94 337.44L1009.73 337.69L1009.55 338.00L1009.42 338.39L1009.48 339.10L1009.48 339.84L1009.23 340.23L1008.90 340.53L1008.53 340.74L1008.12 340.85L1007.68 340.87L1007.22 340.77L1006.70 340.25L1006.24 339.70L1005.87 339.53L1005.53 339.43L1005.20 339.40L1004.87 339.43L1004.53 339.53L1004.16 339.70L1003.70 340.25L1003.18 340.77L1002.72 340.87L1002.28 340.85L1001.87 340.74L1001.50 340.53L1001.17 340.23L1000.92 339.84L1000.92 339.10L1000.98 338.39L1000.85 338.00L1000.67 337.69L1000.46 337.44L1000.21 337.23L999.90 337.05L999.51 336.92L998.80 336.98L998.06 336.98L997.67 336.73L997.37 336.40L997.16 336.03L997.05 335.62L997.03 335.18L997.13 334.72L997.65 334.20L998.20 333.74L998.37 333.37L998.47 333.03L998.50 332.70L998.47 332.37L998.37 332.03L998.20 331.66L997.65 331.20L997.13 330.68L997.03 330.22L997.05 329.78L997.16 329.37L997.37 329.00L997.67 328.67L998.06 328.42L998.80 328.42L999.51 328.48L999.90 328.35L1000.21 328.17L1000.46 327.96L1000.67 327.71L1000.85 327.40L1000.98 327.01L1000.92 326.30L1000.92 325.56L1001.17 325.17L1001.50 324.87L1001.87 324.66L1002.28 324.55L1002.72 324.53L1003.18 324.63L1003.70 325.15L1004.16 325.70L1004.53 325.87L1004.87 325.97L1005.20 326.00L1005.53 325.97L1005.87 325.87L1006.24 325.70L1006.70 325.15L1007.22 324.63L1007.68 324.53L1008.12 324.55L1008.53 324.66L1008.90 324.87L1009.23 325.17L1009.48 325.56L1009.48 326.30L1009.42 327.01L1009.55 327.40L1009.73 327.71L1009.94 327.96L1010.19 328.17L1010.50 328.35L1010.89 328.48L1011.60 328.42L1012.34 328.42L1012.73 328.67L1013.03 329.00L1013.24 329.37L1013.35 329.78L1013.37 330.22L1013.27 330.68L1012.75 331.20L1012.20 331.66L1012.03 332.03L1011.93 332.37L1011.90 332.70L1011.93 333.03L1012.03 333.37L1012.20 333.74L1012.75 334.20L1013.27 334.72L1013.37 335.18L1013.35 335.62L1013.24 336.03z" fill="none" stroke="#4a525d" stroke-width="1.3" stroke-linejoin="round"/>
<circle cx="1005.2" cy="332.7" r="3.7" fill="none" stroke="#4a525d" stroke-width="1.3"/>
<path d="M97.7 775.8l3.8-4.4 3.8 4.4z" fill="#c9cdd4"/><path d="M97.7 777.7l3.8 4.4 3.8-4.4z" fill="#a3a9b3"/>
<circle cx="478.5" cy="805.4" r="0.95" fill="#bfc3cb"/>
<circle cx="483.5" cy="805.4" r="0.95" fill="#bfc3cb"/>
<circle cx="488.5" cy="805.4" r="0.95" fill="#bfc3cb"/>
<circle cx="478.5" cy="840.0" r="0.95" fill="#bfc3cb"/>
<circle cx="483.5" cy="840.0" r="0.95" fill="#bfc3cb"/>
<circle cx="488.5" cy="840.0" r="0.95" fill="#bfc3cb"/>
<circle cx="994.2" cy="805.4" r="0.95" fill="#bfc3cb"/>
<circle cx="999.2" cy="805.4" r="0.95" fill="#bfc3cb"/>
<circle cx="1004.2" cy="805.4" r="0.95" fill="#bfc3cb"/>
<circle cx="994.2" cy="840.0" r="0.95" fill="#bfc3cb"/>
<circle cx="999.2" cy="840.0" r="0.95" fill="#bfc3cb"/>
<circle cx="1004.2" cy="840.0" r="0.95" fill="#bfc3cb"/>
</svg>

<!-- tabs -->
<div class="abs tab" style="left:5px;top:718px;color:#232b36;-webkit-text-stroke:0.4px #232b36;"><span style="transform:scaleX(0.955)">Overview</span></div>
<div class="abs tab" style="left:93.5px;top:718px;"><span style="transform:scaleX(0.978)">BubbleUp</span></div>
<div class="abs tab" style="left:186px;top:718px;"><span>Correlations</span></div>
<div class="abs tab" style="left:297px;top:718px;"><span>Traces</span></div>
<div class="abs tab" style="left:367.5px;top:718px;"><span style="transform:scaleX(0.97)">Events</span></div>
<div class="abs" style="left:0;top:747px;width:1022px;height:1px;background:#dfe2e8;"></div>
<div class="abs" style="left:0;top:745.5px;width:81.5px;height:2.5px;background:#1a76c7;"></div>

<!-- table -->
<div class="abs" style="left:47px;top:770px;font-size:13px;color:#2a323d;-webkit-text-stroke:0.3px #2a323d;"><span>name</span></div>
<div class="abs" style="left:517px;top:770px;font-size:14px;color:#2a323d;"><span style="transform:scaleX(0.922)">HEATMAP(duration_ms)</span></div>
<div class="abs" style="left:3px;top:790px;width:1018px;height:0;border-top:1px solid #e6e8ee;"></div>
<div class="abs" style="left:15px;top:797px;width:16px;height:16px;border-radius:3px;background:#a77fcd;"></div>
<div class="abs row" style="left:53.5px;top:798px;"><span style="transform:scaleX(0.967)">INSERT shipping.quotes</span></div>
<div class="abs" style="left:15px;top:832px;width:16px;height:16px;border-radius:3px;background:#d6813f;"></div>
<div class="abs row" style="left:54px;top:832.5px;"><span style="transform:scaleX(0.965)">SELECT shipping.products</span></div>
</div>
</body>
</html>
